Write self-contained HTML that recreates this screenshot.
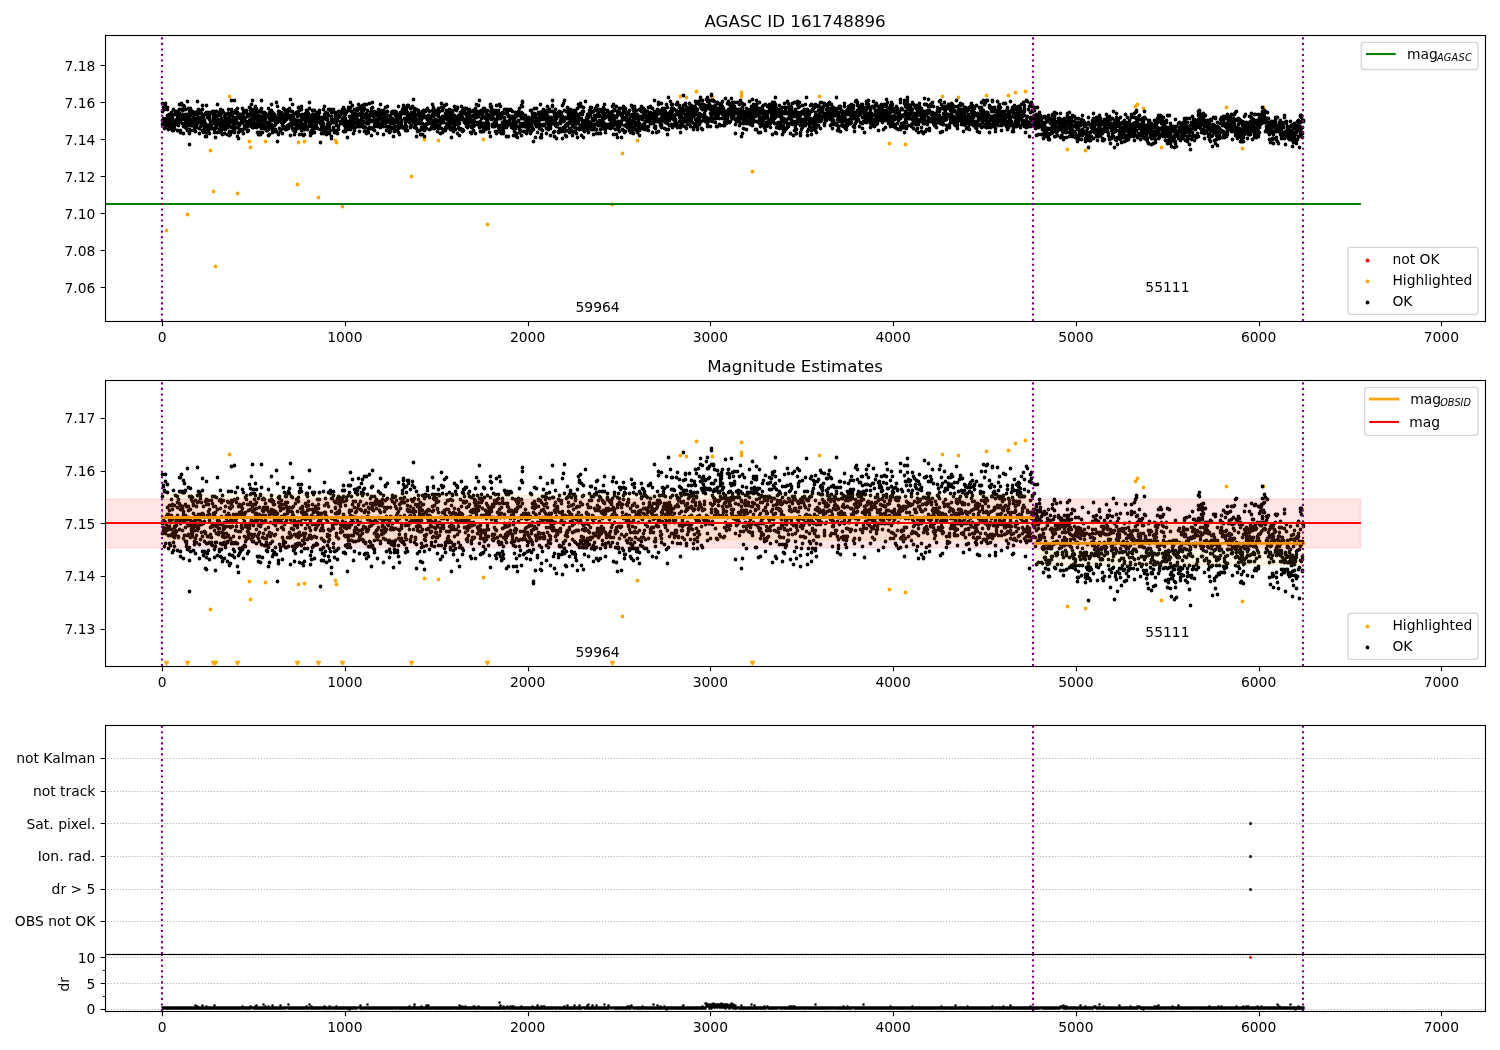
<!DOCTYPE html>
<html><head><meta charset="utf-8"><title>AGASC ID 161748896</title>
<style>html,body{margin:0;padding:0;background:#fff}svg{display:block;will-change:transform}text{font-family:'DejaVu Sans','Liberation Sans',sans-serif;font-size:13.89px;fill:#000}</style></head><body>
<svg width="1500" height="1050" viewBox="0 0 1500 1050">
<rect width="1500" height="1050" fill="#fff"/>
<defs><clipPath id="c1"><rect x="105.10" y="35.40" width="1379.90" height="285.88"/></clipPath><clipPath id="c2"><rect x="105.10" y="380.40" width="1379.90" height="285.88"/></clipPath><clipPath id="c3"><rect x="105.10" y="725.40" width="1379.90" height="229.09"/></clipPath><clipPath id="c4"><rect x="105.10" y="954.49" width="1379.90" height="56.79"/></clipPath><clipPath id="c34"><rect x="105.10" y="725.40" width="1379.90" height="285.88"/></clipPath></defs>
<g id="p1">
<path transform="translate(.5 .5)" d="M166 230h0M187 214h0M213 191h0M215 266h0M237 193h0M297 184h0M318 197h0M342 206h0M411 176h0M487 224h0M612 204h0M752 171h0M210 150h0M249 141h0M250 147h0M265 141h0M298 142h0M304 141h0M335 140h0M336 142h0M424 139h0M438 140h0M483 139h0M622 153h0M637 140h0M229 96h0M680 96h0M686 97h0M696 91h0M712 97h0M741 92h0M741 95h0M741 96h0M819 96h0M889 143h0M905 144h0M942 96h0M958 97h0M986 95h0M1008 95h0M1015 92h0M1025 91h0M1036 107h0M1067 149h0M1085 150h0M1135 106h0M1137 104h0M1143 108h0M1161 147h0M1226 107h0M1242 148h0M1263 107h0" fill="none" stroke="#ffa500" stroke-width="3.80" stroke-linecap="round"/>
<path transform="translate(.5 .5)" d="M162 124h0M162 111h0M162 120h0M162 103h0M163 122h0M163 118h0M163 107h0M163 123h0M164 120h0M164 128h0M164 109h0M165 120h0M165 103h0M165 106h0M165 124h0M165 127h0M166 122h0M166 123h0M166 118h0M166 121h0M166 120h0M167 115h0M167 109h0M167 117h0M167 122h0M167 107h0M168 122h0M168 117h0M168 125h0M168 129h0M169 114h0M169 116h0M169 119h0M169 122h0M169 127h0M170 118h0M170 128h0M170 125h0M170 120h0M171 112h0M171 124h0M171 123h0M171 114h0M171 118h0M172 114h0M172 118h0M172 116h0M172 130h0M172 119h0M173 109h0M173 125h0M173 127h0M173 130h0M173 124h0M174 128h0M174 114h0M174 122h0M174 125h0M175 120h0M175 124h0M175 121h0M175 123h0M175 111h0M176 121h0M176 119h0M176 123h0M176 120h0M177 118h0M177 113h0M177 119h0M177 130h0M177 111h0M177 115h0M178 125h0M178 119h0M178 112h0M178 120h0M179 118h0M179 122h0M179 109h0M179 113h0M179 104h0M180 120h0M180 115h0M180 114h0M180 104h0M180 130h0M180 132h0M181 119h0M181 109h0M181 115h0M181 103h0M182 123h0M182 114h0M182 109h0M182 115h0M182 110h0M182 118h0M183 126h0M183 105h0M183 117h0M183 133h0M183 116h0M184 119h0M184 109h0M184 106h0M184 125h0M185 127h0M185 114h0M185 109h0M185 117h0M185 122h0M186 128h0M186 127h0M186 114h0M186 119h0M187 101h0M187 125h0M187 120h0M187 130h0M187 118h0M188 114h0M188 124h0M188 121h0M188 108h0M188 116h0M188 118h0M189 129h0M189 119h0M189 111h0M189 144h0M189 133h0M190 130h0M190 108h0M190 125h0M190 119h0M190 115h0M191 124h0M191 121h0M191 111h0M191 122h0M191 123h0M191 112h0M192 122h0M192 125h0M192 124h0M192 111h0M192 113h0M193 117h0M193 114h0M193 130h0M193 120h0M194 120h0M194 128h0M194 123h0M194 121h0M194 127h0M195 118h0M195 126h0M195 112h0M195 119h0M195 131h0M196 127h0M196 114h0M196 125h0M196 120h0M197 119h0M197 113h0M197 111h0M197 122h0M197 101h0M197 123h0M198 113h0M198 109h0M198 121h0M198 117h0M198 122h0M199 110h0M199 133h0M199 128h0M199 119h0M200 117h0M200 120h0M200 121h0M200 111h0M200 110h0M200 126h0M201 120h0M201 113h0M201 117h0M201 121h0M201 123h0M202 109h0M202 117h0M202 105h0M202 125h0M202 130h0M203 120h0M203 115h0M203 132h0M203 117h0M203 118h0M204 130h0M204 127h0M204 120h0M204 123h0M205 124h0M205 130h0M205 136h0M205 113h0M205 123h0M206 132h0M206 105h0M206 114h0M206 136h0M206 112h0M206 127h0M207 125h0M207 131h0M207 127h0M207 117h0M208 112h0M208 116h0M208 130h0M208 114h0M208 125h0M209 127h0M209 117h0M209 125h0M209 133h0M209 115h0M209 119h0M210 124h0M210 125h0M210 122h0M211 112h0M211 121h0M211 127h0M211 125h0M211 128h0M212 111h0M212 121h0M212 128h0M212 113h0M213 118h0M213 117h0M213 114h0M213 120h0M214 117h0M214 129h0M214 132h0M214 123h0M214 111h0M215 114h0M215 127h0M215 117h0M215 121h0M215 128h0M215 137h0M216 127h0M216 124h0M216 111h0M216 121h0M217 104h0M217 132h0M217 115h0M217 119h0M217 121h0M218 119h0M218 123h0M218 120h0M218 124h0M218 122h0M219 130h0M219 122h0M219 120h0M219 112h0M219 129h0M220 115h0M220 109h0M220 112h0M220 127h0M220 132h0M221 132h0M221 124h0M221 118h0M221 130h0M221 113h0M221 121h0M222 125h0M222 134h0M222 128h0M222 110h0M222 127h0M223 112h0M223 124h0M223 122h0M223 121h0M224 120h0M224 122h0M224 125h0M224 116h0M224 133h0M224 127h0M225 129h0M225 127h0M225 114h0M225 128h0M226 121h0M226 118h0M226 124h0M226 119h0M227 120h0M227 125h0M227 127h0M227 134h0M227 113h0M228 113h0M228 117h0M228 125h0M228 109h0M228 124h0M229 118h0M229 131h0M229 115h0M229 135h0M229 121h0M230 115h0M230 126h0M230 134h0M230 119h0M230 122h0M231 114h0M231 112h0M231 100h0M231 109h0M231 127h0M232 131h0M232 114h0M232 122h0M232 112h0M232 127h0M233 119h0M233 117h0M233 128h0M233 129h0M233 125h0M234 112h0M234 130h0M234 100h0M234 120h0M234 132h0M235 119h0M235 123h0M235 127h0M235 110h0M236 113h0M236 119h0M236 121h0M236 127h0M236 117h0M236 120h0M237 108h0M237 127h0M237 112h0M237 136h0M238 132h0M238 114h0M238 117h0M238 123h0M238 138h0M239 125h0M239 117h0M239 129h0M239 114h0M239 116h0M239 131h0M240 114h0M240 118h0M240 117h0M240 130h0M240 123h0M241 118h0M241 114h0M241 116h0M241 122h0M241 121h0M242 108h0M242 129h0M242 130h0M242 118h0M242 115h0M242 122h0M243 117h0M243 119h0M243 133h0M243 113h0M243 110h0M244 128h0M244 117h0M244 125h0M244 120h0M245 117h0M245 121h0M245 127h0M245 111h0M245 128h0M246 110h0M246 125h0M246 121h0M246 126h0M246 112h0M247 123h0M247 131h0M247 126h0M247 122h0M247 114h0M248 124h0M248 123h0M248 116h0M248 125h0M248 130h0M249 122h0M249 120h0M249 107h0M249 114h0M250 115h0M250 120h0M250 110h0M250 108h0M250 113h0M250 124h0M251 126h0M251 119h0M251 104h0M251 110h0M251 124h0M252 116h0M252 127h0M252 114h0M252 125h0M252 100h0M253 116h0M253 114h0M253 125h0M253 121h0M253 109h0M253 127h0M254 116h0M254 112h0M254 110h0M254 124h0M254 119h0M255 106h0M255 114h0M255 111h0M255 117h0M255 119h0M256 115h0M256 117h0M256 108h0M256 127h0M256 123h0M256 113h0M257 117h0M257 119h0M257 132h0M257 125h0M257 118h0M258 134h0M258 125h0M258 111h0M258 121h0M258 124h0M259 126h0M259 115h0M259 117h0M259 132h0M259 118h0M259 124h0M260 134h0M260 122h0M260 121h0M260 110h0M260 111h0M261 100h0M261 108h0M261 120h0M261 119h0M261 128h0M262 117h0M262 116h0M262 125h0M262 132h0M262 112h0M262 120h0M263 120h0M263 115h0M263 124h0M263 116h0M263 112h0M264 126h0M264 115h0M264 118h0M264 128h0M264 112h0M265 122h0M265 120h0M265 119h0M265 113h0M265 115h0M265 117h0M266 116h0M266 127h0M266 128h0M266 130h0M266 126h0M267 130h0M267 125h0M267 128h0M267 115h0M268 129h0M268 135h0M268 108h0M268 125h0M268 122h0M268 116h0M269 117h0M269 112h0M269 134h0M269 123h0M269 118h0M270 125h0M270 127h0M270 124h0M270 116h0M270 120h0M271 112h0M271 110h0M271 104h0M271 115h0M271 124h0M272 130h0M272 117h0M272 127h0M272 132h0M272 112h0M273 120h0M273 131h0M273 114h0M273 113h0M273 116h0M274 114h0M274 125h0M274 119h0M274 131h0M274 117h0M275 124h0M275 116h0M275 121h0M275 129h0M275 118h0M276 119h0M276 118h0M276 102h0M276 131h0M277 141h0M277 117h0M277 119h0M277 106h0M277 122h0M277 118h0M278 111h0M278 120h0M278 113h0M278 134h0M278 133h0M279 120h0M279 112h0M279 114h0M279 128h0M279 111h0M280 119h0M280 130h0M280 115h0M280 114h0M280 116h0M280 129h0M281 120h0M281 114h0M281 118h0M281 112h0M281 122h0M282 133h0M282 122h0M282 125h0M282 119h0M282 115h0M283 127h0M283 122h0M283 126h0M283 115h0M283 128h0M283 108h0M284 117h0M284 118h0M284 121h0M284 114h0M284 109h0M285 113h0M285 127h0M285 120h0M285 111h0M285 129h0M286 129h0M286 114h0M286 110h0M286 119h0M286 111h0M286 115h0M287 117h0M287 113h0M287 115h0M287 116h0M287 125h0M288 128h0M288 116h0M288 115h0M288 109h0M289 115h0M289 108h0M289 125h0M289 124h0M289 110h0M290 119h0M290 124h0M290 125h0M290 135h0M290 99h0M291 122h0M291 111h0M291 116h0M291 125h0M291 120h0M292 104h0M292 116h0M292 118h0M292 111h0M292 128h0M292 115h0M293 130h0M293 118h0M293 122h0M293 114h0M293 117h0M294 130h0M294 134h0M294 124h0M294 121h0M294 119h0M295 131h0M295 121h0M295 113h0M295 128h0M295 129h0M296 112h0M296 125h0M296 128h0M296 120h0M296 124h0M297 128h0M297 122h0M297 121h0M297 116h0M298 113h0M298 125h0M298 107h0M298 124h0M298 111h0M298 120h0M299 134h0M299 109h0M299 124h0M299 127h0M299 110h0M300 120h0M300 125h0M300 115h0M300 108h0M300 124h0M301 130h0M301 109h0M301 106h0M301 121h0M301 128h0M301 117h0M302 119h0M302 126h0M302 114h0M302 134h0M302 115h0M303 118h0M303 135h0M303 124h0M304 125h0M304 126h0M304 127h0M304 129h0M304 134h0M304 116h0M305 119h0M305 122h0M305 113h0M305 124h0M306 110h0M306 114h0M306 117h0M306 118h0M307 129h0M307 121h0M307 116h0M307 110h0M307 126h0M307 111h0M308 118h0M308 119h0M308 126h0M308 113h0M308 114h0M309 125h0M309 108h0M309 122h0M309 115h0M309 102h0M310 125h0M310 135h0M310 132h0M310 119h0M310 124h0M310 123h0M311 133h0M311 118h0M311 126h0M311 130h0M312 125h0M312 115h0M312 110h0M312 114h0M312 121h0M312 129h0M313 117h0M313 118h0M313 128h0M313 110h0M313 116h0M314 128h0M314 118h0M314 110h0M314 125h0M314 132h0M315 116h0M315 114h0M315 122h0M315 121h0M315 115h0M316 125h0M316 127h0M316 122h0M316 121h0M317 116h0M317 128h0M317 118h0M317 112h0M317 121h0M318 114h0M318 115h0M318 120h0M318 112h0M318 121h0M319 110h0M319 117h0M319 112h0M319 119h0M320 123h0M320 129h0M320 119h0M320 142h0M321 126h0M321 117h0M321 133h0M321 118h0M321 122h0M321 129h0M322 122h0M322 118h0M322 121h0M322 131h0M323 109h0M323 129h0M323 123h0M323 133h0M323 126h0M324 127h0M324 132h0M324 118h0M324 117h0M324 106h0M324 114h0M325 117h0M325 130h0M325 112h0M326 113h0M326 118h0M326 134h0M326 119h0M327 125h0M327 120h0M327 113h0M327 118h0M327 128h0M327 124h0M328 126h0M328 122h0M328 115h0M328 109h0M328 132h0M329 129h0M329 123h0M329 124h0M329 126h0M329 133h0M330 109h0M330 123h0M330 110h0M330 130h0M331 112h0M331 119h0M331 136h0M331 138h0M331 116h0M332 121h0M332 112h0M332 122h0M333 122h0M333 109h0M333 110h0M333 127h0M333 121h0M333 129h0M334 119h0M334 130h0M334 120h0M334 112h0M334 132h0M335 115h0M335 119h0M335 117h0M335 113h0M336 117h0M336 130h0M336 125h0M336 124h0M336 121h0M337 133h0M337 116h0M337 112h0M337 120h0M338 126h0M338 117h0M338 111h0M338 129h0M338 113h0M339 112h0M339 111h0M339 113h0M339 116h0M340 121h0M340 113h0M340 122h0M340 123h0M340 114h0M341 123h0M341 112h0M342 109h0M342 112h0M342 118h0M342 120h0M342 123h0M342 121h0M343 107h0M343 117h0M343 111h0M343 131h0M343 113h0M344 109h0M344 122h0M344 121h0M344 125h0M344 131h0M345 128h0M345 120h0M345 114h0M345 125h0M345 118h0M345 131h0M346 112h0M346 124h0M346 122h0M346 125h0M346 111h0M347 121h0M347 129h0M347 137h0M347 128h0M348 125h0M348 107h0M348 126h0M348 121h0M348 110h0M349 110h0M349 116h0M349 128h0M349 122h0M350 107h0M350 102h0M350 129h0M350 120h0M350 117h0M351 119h0M351 116h0M351 121h0M351 126h0M351 111h0M351 124h0M352 118h0M352 114h0M352 119h0M352 105h0M353 113h0M353 124h0M353 127h0M353 120h0M353 133h0M354 109h0M354 130h0M354 123h0M354 118h0M354 115h0M355 127h0M355 109h0M355 117h0M355 113h0M355 122h0M356 122h0M356 109h0M356 118h0M356 116h0M357 124h0M357 109h0M357 110h0M357 119h0M357 108h0M357 115h0M358 126h0M358 104h0M358 114h0M358 121h0M359 123h0M359 108h0M359 126h0M359 125h0M359 131h0M360 115h0M360 120h0M360 126h0M360 113h0M360 125h0M360 123h0M361 116h0M361 109h0M361 110h0M361 106h0M361 118h0M362 123h0M362 126h0M362 111h0M362 105h0M362 124h0M363 127h0M363 110h0M363 121h0M363 114h0M363 126h0M363 109h0M364 131h0M364 116h0M364 104h0M364 108h0M364 117h0M365 127h0M365 122h0M365 131h0M365 116h0M366 133h0M366 123h0M366 113h0M366 104h0M366 118h0M367 123h0M367 118h0M367 119h0M367 131h0M367 110h0M368 123h0M368 128h0M368 115h0M368 117h0M368 132h0M369 119h0M369 118h0M369 103h0M369 121h0M369 127h0M369 115h0M370 127h0M370 113h0M370 120h0M370 128h0M370 112h0M371 111h0M371 108h0M371 120h0M371 121h0M371 135h0M372 102h0M372 128h0M372 107h0M372 114h0M372 115h0M372 113h0M373 116h0M373 120h0M373 129h0M374 111h0M374 124h0M374 130h0M374 126h0M375 120h0M375 123h0M375 113h0M375 114h0M375 119h0M376 123h0M376 124h0M376 125h0M376 112h0M376 115h0M377 113h0M377 133h0M377 126h0M377 124h0M377 120h0M377 122h0M378 118h0M378 122h0M378 113h0M378 125h0M378 109h0M379 116h0M379 113h0M379 119h0M379 114h0M380 113h0M380 126h0M380 104h0M380 116h0M380 127h0M380 110h0M381 113h0M381 124h0M381 123h0M381 114h0M382 113h0M382 121h0M382 122h0M382 112h0M382 119h0M383 110h0M383 126h0M383 134h0M383 124h0M383 118h0M383 120h0M384 123h0M384 115h0M384 122h0M384 116h0M385 123h0M385 107h0M385 112h0M385 126h0M386 115h0M386 112h0M386 118h0M386 119h0M386 130h0M386 122h0M387 111h0M387 115h0M387 121h0M387 106h0M388 119h0M388 126h0M388 127h0M388 121h0M389 132h0M389 126h0M389 119h0M389 130h0M389 120h0M390 115h0M390 118h0M390 123h0M390 131h0M391 112h0M391 128h0M391 122h0M391 127h0M392 113h0M392 111h0M392 127h0M392 118h0M392 120h0M393 111h0M393 123h0M393 128h0M393 122h0M393 136h0M394 113h0M394 131h0M394 129h0M394 128h0M394 127h0M395 126h0M395 122h0M395 119h0M395 111h0M395 115h0M396 112h0M396 115h0M396 119h0M396 118h0M397 130h0M397 117h0M397 119h0M398 116h0M398 125h0M398 128h0M398 132h0M398 122h0M398 106h0M399 134h0M399 124h0M399 123h0M399 118h0M399 114h0M400 126h0M400 115h0M400 113h0M400 118h0M400 112h0M401 125h0M401 121h0M401 113h0M401 127h0M401 120h0M401 122h0M402 109h0M402 127h0M402 110h0M402 112h0M402 113h0M403 105h0M403 107h0M403 112h0M403 127h0M404 108h0M404 111h0M404 118h0M404 113h0M404 128h0M405 130h0M405 124h0M405 121h0M405 125h0M406 129h0M406 126h0M406 119h0M406 110h0M406 107h0M407 114h0M407 115h0M407 105h0M407 130h0M407 116h0M407 112h0M408 106h0M408 116h0M408 105h0M408 121h0M409 116h0M409 122h0M409 120h0M409 118h0M410 114h0M410 126h0M410 118h0M410 108h0M410 127h0M410 120h0M411 112h0M411 120h0M411 116h0M411 119h0M411 125h0M412 106h0M412 113h0M412 107h0M412 112h0M412 118h0M413 116h0M413 99h0M413 115h0M413 112h0M413 122h0M413 120h0M414 108h0M414 111h0M414 116h0M414 118h0M414 127h0M415 126h0M415 116h0M415 114h0M415 119h0M415 125h0M416 121h0M416 128h0M416 109h0M416 136h0M416 119h0M417 131h0M417 123h0M417 122h0M417 114h0M418 114h0M418 112h0M418 120h0M418 110h0M418 121h0M419 123h0M419 115h0M419 130h0M419 116h0M419 119h0M419 117h0M420 113h0M420 121h0M420 134h0M420 115h0M420 119h0M421 127h0M421 119h0M421 123h0M421 129h0M422 134h0M422 116h0M422 111h0M422 117h0M422 123h0M422 114h0M423 128h0M423 110h0M423 129h0M423 117h0M423 114h0M424 111h0M424 125h0M424 126h0M424 136h0M424 130h0M425 117h0M425 125h0M425 126h0M425 111h0M425 110h0M426 128h0M426 116h0M426 123h0M426 124h0M427 108h0M427 119h0M427 109h0M427 116h0M427 117h0M428 119h0M428 120h0M428 115h0M428 110h0M428 123h0M428 122h0M429 118h0M429 111h0M429 116h0M429 117h0M429 129h0M430 119h0M430 118h0M430 120h0M430 121h0M430 123h0M431 120h0M431 127h0M431 128h0M431 121h0M431 123h0M432 114h0M432 116h0M432 125h0M432 110h0M432 104h0M433 116h0M433 125h0M433 112h0M433 108h0M433 107h0M434 112h0M434 110h0M434 120h0M434 122h0M434 128h0M434 114h0M435 127h0M435 110h0M435 119h0M435 124h0M435 122h0M436 112h0M436 124h0M436 113h0M436 125h0M437 115h0M437 125h0M437 120h0M437 131h0M437 121h0M438 113h0M438 116h0M438 110h0M438 108h0M438 128h0M439 111h0M439 120h0M439 125h0M440 118h0M440 123h0M440 133h0M440 122h0M441 118h0M441 103h0M441 128h0M441 107h0M441 119h0M442 121h0M442 110h0M442 108h0M442 132h0M442 116h0M443 121h0M443 107h0M443 122h0M443 119h0M444 129h0M444 117h0M444 116h0M444 105h0M445 118h0M445 130h0M445 113h0M445 127h0M445 128h0M446 118h0M446 110h0M446 115h0M446 123h0M446 104h0M447 125h0M447 127h0M447 126h0M447 112h0M447 119h0M448 115h0M448 127h0M448 125h0M448 112h0M448 123h0M449 126h0M449 121h0M449 109h0M449 123h0M449 116h0M450 129h0M450 112h0M450 118h0M451 137h0M451 127h0M451 114h0M451 120h0M451 118h0M451 123h0M452 112h0M452 117h0M452 111h0M452 110h0M452 122h0M453 131h0M453 128h0M453 121h0M453 117h0M453 130h0M454 128h0M454 125h0M454 122h0M454 117h0M454 115h0M454 106h0M455 109h0M455 117h0M455 129h0M455 119h0M456 123h0M456 110h0M456 107h0M456 119h0M456 117h0M457 133h0M457 107h0M457 124h0M457 120h0M457 118h0M457 108h0M458 122h0M458 120h0M458 127h0M458 117h0M458 115h0M459 123h0M459 129h0M459 118h0M459 116h0M459 135h0M460 118h0M460 128h0M460 112h0M460 119h0M460 117h0M461 117h0M461 118h0M461 114h0M461 115h0M461 106h0M462 129h0M462 117h0M462 119h0M462 131h0M462 110h0M463 112h0M463 130h0M463 110h0M463 113h0M463 120h0M463 109h0M464 122h0M464 119h0M464 108h0M464 111h0M465 119h0M465 108h0M465 113h0M465 123h0M465 122h0M466 119h0M466 108h0M466 126h0M466 115h0M466 113h0M466 122h0M467 125h0M467 121h0M467 123h0M467 118h0M467 127h0M468 114h0M468 121h0M468 119h0M468 110h0M468 125h0M469 120h0M469 118h0M469 114h0M469 111h0M469 109h0M469 122h0M470 118h0M470 116h0M470 120h0M470 132h0M471 126h0M471 127h0M471 133h0M471 111h0M471 116h0M472 116h0M472 125h0M472 121h0M472 123h0M473 130h0M473 110h0M473 120h0M473 126h0M473 115h0M474 113h0M474 125h0M474 121h0M474 116h0M474 112h0M475 112h0M475 117h0M475 133h0M475 108h0M475 114h0M476 116h0M476 114h0M476 104h0M476 115h0M476 117h0M477 111h0M477 115h0M477 122h0M477 124h0M478 113h0M478 105h0M478 122h0M478 114h0M478 116h0M479 111h0M479 127h0M479 100h0M479 114h0M479 123h0M480 121h0M480 125h0M480 131h0M480 124h0M480 122h0M481 118h0M481 113h0M481 110h0M481 112h0M481 131h0M482 124h0M482 126h0M482 115h0M482 131h0M482 112h0M483 117h0M483 123h0M483 131h0M483 128h0M483 108h0M484 111h0M484 108h0M484 125h0M484 123h0M484 127h0M485 129h0M485 124h0M485 123h0M485 118h0M485 116h0M486 126h0M486 113h0M486 117h0M486 125h0M486 119h0M487 114h0M487 122h0M487 118h0M487 116h0M487 110h0M487 121h0M488 123h0M488 125h0M488 128h0M488 118h0M488 115h0M489 115h0M489 132h0M489 117h0M489 118h0M489 116h0M490 104h0M490 106h0M490 115h0M490 136h0M490 118h0M490 111h0M491 106h0M491 115h0M491 108h0M491 116h0M491 119h0M492 126h0M492 125h0M492 118h0M492 124h0M492 114h0M493 114h0M493 110h0M493 118h0M493 126h0M494 113h0M494 126h0M494 122h0M494 124h0M494 112h0M495 122h0M495 131h0M495 110h0M495 119h0M495 113h0M496 105h0M496 133h0M496 113h0M496 119h0M496 123h0M496 120h0M497 112h0M497 131h0M497 118h0M497 125h0M497 116h0M498 112h0M498 110h0M498 127h0M499 113h0M499 131h0M499 104h0M499 118h0M499 128h0M499 116h0M500 106h0M500 125h0M500 132h0M500 117h0M500 118h0M501 115h0M501 117h0M501 127h0M501 133h0M502 132h0M502 130h0M502 113h0M502 122h0M502 112h0M503 125h0M503 133h0M503 128h0M503 113h0M503 131h0M504 118h0M504 122h0M504 109h0M504 120h0M504 117h0M505 109h0M505 124h0M505 126h0M505 121h0M506 136h0M506 110h0M506 113h0M506 125h0M506 127h0M507 121h0M507 113h0M507 124h0M507 125h0M507 109h0M507 114h0M508 115h0M508 110h0M508 116h0M508 124h0M508 136h0M509 124h0M509 121h0M509 116h0M509 120h0M510 109h0M510 123h0M510 116h0M510 118h0M511 118h0M511 127h0M511 116h0M511 110h0M512 111h0M512 126h0M512 125h0M512 124h0M513 135h0M513 120h0M513 116h0M513 117h0M513 121h0M513 128h0M514 119h0M514 123h0M514 127h0M514 131h0M515 124h0M515 112h0M515 128h0M515 115h0M515 122h0M516 136h0M516 126h0M516 122h0M516 133h0M516 116h0M516 113h0M517 115h0M517 113h0M517 137h0M518 112h0M518 120h0M518 113h0M518 111h0M518 126h0M519 129h0M519 132h0M519 115h0M519 112h0M519 108h0M520 130h0M520 123h0M520 115h0M520 126h0M521 112h0M521 118h0M521 135h0M521 105h0M522 113h0M522 102h0M522 126h0M522 101h0M522 118h0M522 106h0M523 117h0M523 118h0M523 131h0M523 125h0M523 123h0M524 125h0M524 126h0M524 123h0M524 131h0M525 126h0M525 117h0M525 115h0M525 122h0M525 119h0M526 118h0M526 122h0M526 119h0M526 133h0M526 117h0M527 124h0M527 123h0M527 127h0M527 130h0M527 128h0M528 127h0M528 117h0M528 125h0M528 119h0M528 121h0M529 125h0M529 121h0M529 118h0M529 119h0M529 130h0M530 121h0M530 118h0M530 126h0M530 133h0M530 110h0M531 131h0M531 121h0M531 126h0M531 123h0M531 110h0M531 124h0M532 120h0M532 127h0M532 115h0M532 113h0M532 128h0M533 122h0M533 141h0M533 117h0M533 129h0M534 113h0M534 114h0M534 115h0M534 108h0M534 121h0M535 114h0M535 117h0M535 115h0M535 137h0M535 124h0M536 126h0M536 122h0M536 108h0M536 118h0M537 132h0M537 125h0M537 120h0M538 112h0M538 121h0M538 114h0M538 123h0M539 117h0M539 126h0M539 120h0M539 128h0M540 137h0M540 104h0M540 112h0M540 124h0M540 119h0M540 125h0M541 134h0M541 113h0M541 129h0M541 116h0M541 137h0M542 130h0M542 119h0M542 125h0M542 111h0M542 118h0M543 124h0M543 125h0M543 114h0M543 116h0M543 109h0M544 114h0M544 111h0M544 116h0M544 125h0M545 118h0M545 112h0M545 117h0M545 119h0M546 111h0M546 113h0M546 133h0M546 110h0M546 122h0M546 128h0M547 120h0M547 115h0M547 123h0M547 119h0M547 106h0M548 129h0M548 126h0M548 117h0M548 127h0M549 109h0M549 122h0M549 125h0M549 117h0M549 120h0M549 111h0M550 128h0M550 126h0M550 135h0M550 119h0M550 125h0M551 121h0M551 122h0M551 118h0M551 117h0M551 119h0M552 111h0M552 120h0M552 123h0M552 100h0M552 105h0M552 106h0M553 123h0M553 120h0M553 132h0M553 122h0M553 111h0M554 114h0M554 120h0M554 136h0M554 116h0M554 131h0M555 117h0M555 125h0M555 120h0M555 123h0M555 113h0M555 109h0M556 138h0M556 118h0M556 115h0M556 126h0M556 124h0M557 124h0M557 115h0M557 116h0M558 112h0M558 131h0M558 123h0M558 132h0M559 116h0M559 128h0M559 112h0M559 111h0M560 122h0M560 123h0M560 120h0M561 113h0M561 118h0M561 131h0M561 119h0M561 112h0M561 128h0M562 117h0M562 130h0M562 105h0M562 138h0M562 116h0M563 127h0M563 103h0M563 118h0M563 121h0M564 131h0M564 110h0M564 120h0M564 100h0M564 129h0M565 117h0M565 125h0M565 118h0M565 126h0M565 135h0M566 125h0M566 130h0M566 111h0M566 124h0M566 136h0M567 125h0M567 123h0M567 118h0M567 107h0M567 111h0M568 111h0M568 114h0M568 113h0M568 116h0M568 118h0M569 122h0M569 123h0M569 132h0M569 116h0M569 128h0M569 110h0M570 120h0M570 118h0M570 109h0M571 130h0M571 117h0M571 111h0M571 120h0M571 114h0M572 120h0M572 121h0M572 126h0M572 135h0M572 123h0M572 131h0M573 114h0M573 118h0M573 110h0M573 119h0M573 115h0M574 123h0M574 131h0M574 120h0M574 127h0M574 110h0M575 112h0M575 127h0M575 131h0M575 111h0M575 132h0M576 123h0M576 119h0M576 115h0M576 133h0M576 118h0M577 137h0M577 123h0M577 108h0M577 128h0M577 114h0M578 128h0M578 123h0M578 118h0M578 120h0M578 117h0M578 104h0M579 129h0M579 106h0M579 114h0M579 105h0M579 118h0M580 127h0M580 103h0M580 126h0M580 119h0M580 113h0M581 126h0M581 125h0M581 127h0M581 118h0M581 106h0M581 135h0M582 129h0M582 120h0M582 123h0M582 111h0M582 114h0M583 107h0M583 125h0M583 111h0M583 121h0M583 137h0M584 129h0M584 126h0M584 131h0M584 128h0M584 123h0M585 122h0M585 123h0M585 120h0M585 101h0M586 117h0M586 129h0M586 118h0M586 127h0M587 123h0M587 119h0M587 128h0M587 114h0M587 126h0M587 127h0M588 123h0M588 115h0M588 117h0M588 132h0M588 121h0M589 112h0M589 110h0M589 125h0M589 128h0M589 123h0M590 125h0M590 115h0M590 122h0M590 107h0M590 126h0M591 111h0M591 129h0M591 107h0M591 112h0M592 118h0M592 129h0M592 119h0M592 125h0M593 120h0M593 128h0M593 124h0M593 134h0M593 111h0M593 118h0M594 124h0M594 110h0M594 129h0M594 127h0M594 115h0M595 116h0M595 124h0M595 119h0M595 108h0M596 106h0M596 115h0M596 110h0M596 109h0M596 129h0M596 133h0M597 122h0M597 105h0M597 114h0M597 124h0M597 123h0M598 125h0M598 116h0M598 112h0M598 133h0M599 115h0M599 120h0M599 111h0M599 109h0M599 125h0M599 123h0M600 122h0M600 123h0M600 111h0M600 129h0M600 133h0M601 122h0M601 116h0M601 124h0M601 121h0M602 112h0M602 126h0M602 109h0M602 117h0M602 119h0M602 128h0M603 122h0M603 107h0M603 113h0M603 123h0M603 116h0M604 113h0M604 118h0M604 104h0M604 109h0M605 128h0M605 124h0M605 132h0M605 117h0M605 127h0M605 129h0M606 115h0M606 124h0M606 116h0M606 125h0M607 110h0M607 111h0M607 116h0M607 112h0M608 124h0M608 125h0M608 115h0M608 127h0M608 116h0M609 112h0M609 125h0M609 119h0M609 113h0M609 124h0M610 128h0M610 125h0M610 113h0M610 123h0M611 114h0M611 122h0M611 118h0M611 115h0M611 113h0M611 112h0M612 121h0M612 111h0M612 117h0M612 127h0M612 106h0M613 116h0M613 125h0M613 134h0M613 115h0M613 104h0M614 109h0M614 117h0M614 120h0M614 116h0M614 110h0M615 123h0M615 124h0M615 129h0M616 106h0M616 122h0M616 117h0M616 123h0M616 134h0M617 115h0M617 114h0M617 111h0M617 137h0M617 127h0M617 123h0M618 121h0M618 114h0M618 129h0M618 110h0M619 131h0M619 108h0M619 113h0M619 126h0M619 112h0M620 113h0M620 121h0M620 108h0M620 122h0M621 137h0M621 114h0M621 115h0M621 124h0M621 121h0M622 117h0M622 129h0M622 118h0M622 114h0M623 108h0M623 112h0M623 106h0M623 119h0M623 111h0M623 130h0M624 132h0M624 125h0M624 109h0M624 118h0M624 131h0M625 131h0M625 119h0M625 117h0M625 108h0M625 110h0M626 120h0M626 124h0M626 114h0M626 126h0M626 117h0M627 114h0M627 127h0M627 120h0M627 113h0M628 119h0M628 121h0M628 113h0M628 112h0M629 129h0M629 118h0M629 110h0M629 130h0M629 123h0M629 126h0M630 123h0M630 120h0M630 115h0M630 127h0M630 132h0M631 128h0M631 126h0M631 105h0M631 132h0M631 129h0M632 128h0M632 116h0M632 121h0M632 114h0M632 107h0M633 110h0M633 123h0M633 129h0M633 133h0M633 119h0M634 127h0M634 106h0M634 113h0M634 116h0M634 108h0M634 123h0M635 125h0M635 122h0M635 124h0M635 129h0M635 118h0M636 130h0M636 115h0M636 110h0M636 117h0M637 117h0M637 129h0M637 132h0M637 114h0M637 123h0M638 126h0M638 120h0M638 118h0M638 116h0M639 130h0M639 117h0M639 109h0M639 135h0M639 123h0M640 128h0M640 110h0M640 118h0M640 116h0M641 111h0M641 127h0M641 106h0M641 125h0M642 108h0M642 111h0M642 119h0M642 128h0M643 115h0M643 125h0M643 113h0M643 108h0M643 124h0M643 117h0M644 109h0M644 110h0M644 129h0M644 123h0M645 111h0M645 126h0M645 121h0M645 117h0M645 115h0M646 111h0M646 129h0M646 118h0M646 115h0M646 117h0M647 121h0M647 118h0M647 117h0M647 116h0M647 111h0M648 115h0M648 126h0M648 107h0M648 116h0M648 130h0M649 113h0M649 114h0M649 120h0M650 106h0M650 123h0M650 122h0M650 107h0M650 112h0M651 114h0M651 117h0M651 122h0M651 123h0M651 116h0M652 117h0M652 115h0M652 118h0M652 132h0M652 108h0M653 118h0M653 119h0M653 123h0M653 122h0M653 113h0M654 119h0M654 116h0M654 111h0M654 127h0M654 100h0M655 113h0M655 126h0M655 127h0M655 128h0M656 132h0M656 121h0M656 118h0M656 115h0M657 121h0M657 109h0M657 113h0M657 114h0M657 112h0M658 119h0M658 104h0M658 131h0M658 121h0M658 102h0M658 120h0M659 110h0M659 112h0M659 119h0M659 113h0M659 111h0M660 113h0M660 111h0M660 125h0M660 123h0M661 124h0M661 118h0M661 127h0M661 117h0M661 126h0M661 103h0M662 108h0M662 116h0M662 117h0M662 120h0M663 111h0M663 110h0M663 109h0M663 114h0M663 115h0M664 114h0M664 108h0M664 121h0M664 113h0M664 128h0M664 115h0M665 122h0M665 117h0M665 111h0M665 119h0M665 121h0M666 129h0M666 120h0M666 104h0M666 116h0M666 113h0M667 134h0M667 107h0M667 114h0M667 117h0M667 123h0M667 116h0M668 118h0M668 129h0M668 97h0M668 115h0M668 113h0M669 125h0M669 119h0M669 115h0M669 120h0M669 113h0M670 101h0M670 111h0M670 114h0M670 115h0M670 117h0M670 116h0M671 108h0M671 115h0M671 116h0M671 104h0M671 124h0M672 115h0M672 111h0M672 118h0M672 104h0M672 127h0M673 108h0M673 115h0M673 119h0M673 124h0M674 109h0M674 120h0M674 117h0M674 125h0M675 120h0M675 125h0M675 114h0M675 123h0M675 119h0M676 104h0M676 123h0M676 114h0M676 110h0M676 124h0M677 113h0M677 111h0M677 112h0M677 102h0M677 127h0M678 125h0M678 114h0M678 112h0M679 107h0M679 121h0M679 117h0M679 105h0M679 112h0M680 110h0M680 132h0M680 108h0M680 127h0M680 120h0M681 108h0M681 113h0M681 123h0M681 111h0M681 116h0M682 120h0M682 123h0M682 125h0M682 119h0M682 121h0M682 118h0M683 95h0M683 109h0M683 113h0M683 105h0M684 121h0M684 109h0M684 110h0M684 118h0M684 126h0M685 116h0M685 121h0M685 105h0M685 103h0M685 114h0M686 109h0M686 115h0M686 116h0M686 128h0M687 116h0M687 110h0M687 124h0M687 113h0M687 120h0M688 122h0M688 121h0M688 115h0M688 123h0M688 107h0M688 112h0M689 111h0M689 115h0M689 122h0M689 103h0M689 118h0M690 126h0M690 111h0M690 122h0M690 109h0M691 105h0M691 114h0M691 121h0M691 110h0M691 118h0M691 107h0M692 113h0M692 122h0M692 115h0M692 110h0M693 129h0M693 110h0M693 127h0M693 112h0M693 116h0M694 115h0M694 110h0M694 126h0M694 107h0M694 124h0M694 106h0M695 107h0M695 119h0M695 101h0M695 114h0M695 113h0M696 111h0M696 122h0M696 119h0M696 103h0M697 109h0M697 118h0M697 123h0M697 127h0M697 125h0M697 129h0M698 115h0M698 123h0M698 101h0M698 116h0M698 119h0M699 113h0M699 120h0M699 124h0M699 104h0M699 117h0M699 114h0M700 100h0M700 106h0M700 97h0M700 114h0M701 106h0M701 121h0M701 108h0M701 115h0M701 128h0M702 105h0M702 116h0M702 109h0M702 104h0M702 129h0M702 100h0M703 107h0M703 104h0M703 119h0M703 109h0M704 120h0M704 114h0M704 108h0M704 116h0M704 113h0M705 110h0M705 105h0M705 108h0M705 121h0M706 117h0M706 108h0M706 118h0M706 99h0M706 119h0M707 126h0M707 124h0M707 101h0M707 97h0M707 118h0M708 121h0M708 108h0M708 105h0M708 101h0M708 120h0M709 118h0M709 100h0M709 108h0M709 120h0M709 104h0M710 109h0M710 126h0M710 113h0M710 120h0M711 115h0M711 95h0M711 94h0M711 117h0M711 106h0M711 100h0M712 110h0M712 121h0M712 114h0M712 120h0M712 111h0M713 106h0M713 111h0M713 100h0M713 109h0M714 112h0M714 111h0M714 101h0M714 113h0M714 108h0M714 118h0M715 116h0M715 122h0M715 105h0M715 115h0M715 108h0M716 126h0M716 118h0M716 117h0M716 112h0M716 109h0M717 116h0M717 126h0M717 108h0M717 102h0M718 112h0M718 103h0M718 110h0M718 114h0M719 124h0M719 110h0M719 112h0M719 109h0M719 118h0M720 106h0M720 104h0M720 125h0M720 107h0M720 111h0M720 105h0M721 103h0M721 105h0M721 112h0M722 101h0M722 106h0M722 108h0M722 118h0M722 114h0M723 117h0M723 125h0M723 108h0M723 110h0M723 116h0M723 115h0M724 111h0M724 125h0M724 113h0M724 112h0M724 122h0M725 113h0M725 120h0M725 111h0M725 122h0M725 98h0M726 116h0M726 114h0M726 123h0M726 112h0M726 111h0M726 118h0M727 103h0M727 121h0M727 115h0M727 118h0M727 112h0M728 112h0M728 109h0M728 121h0M728 101h0M728 103h0M729 112h0M729 109h0M729 122h0M729 104h0M729 103h0M729 113h0M730 121h0M730 109h0M730 112h0M730 114h0M730 106h0M731 116h0M731 111h0M731 107h0M731 98h0M731 117h0M732 110h0M732 111h0M732 102h0M732 118h0M732 116h0M733 106h0M733 104h0M733 115h0M733 112h0M733 118h0M734 106h0M734 111h0M734 102h0M734 107h0M735 119h0M735 118h0M735 133h0M735 124h0M735 113h0M736 121h0M736 119h0M736 118h0M736 109h0M737 111h0M737 120h0M737 118h0M737 121h0M737 102h0M738 118h0M738 119h0M738 114h0M738 110h0M738 109h0M738 116h0M739 125h0M739 111h0M739 104h0M739 120h0M739 117h0M740 117h0M740 118h0M740 109h0M740 100h0M740 123h0M741 116h0M741 136h0M741 114h0M741 112h0M741 118h0M741 113h0M742 133h0M742 103h0M742 110h0M742 116h0M742 107h0M743 118h0M743 121h0M743 123h0M743 128h0M743 116h0M744 117h0M744 104h0M744 118h0M744 113h0M745 114h0M745 112h0M745 120h0M745 116h0M745 111h0M746 116h0M746 129h0M746 121h0M746 123h0M746 108h0M747 113h0M747 109h0M747 111h0M747 117h0M748 121h0M748 113h0M748 114h0M748 110h0M748 123h0M749 121h0M749 101h0M749 111h0M749 120h0M750 124h0M750 109h0M750 119h0M750 116h0M750 122h0M751 110h0M751 121h0M751 108h0M751 114h0M751 106h0M752 125h0M752 113h0M752 99h0M752 114h0M752 123h0M753 104h0M753 117h0M753 110h0M753 105h0M753 120h0M754 113h0M754 108h0M754 109h0M755 116h0M755 105h0M755 129h0M755 121h0M756 112h0M756 129h0M756 104h0M756 100h0M756 109h0M756 105h0M757 108h0M757 121h0M757 114h0M758 122h0M758 110h0M758 132h0M758 114h0M758 115h0M759 120h0M759 112h0M759 123h0M759 108h0M759 102h0M759 118h0M760 126h0M760 132h0M760 117h0M760 113h0M760 122h0M761 110h0M761 125h0M761 120h0M761 123h0M761 119h0M762 111h0M762 119h0M762 113h0M762 106h0M762 109h0M763 120h0M763 116h0M763 124h0M763 105h0M764 112h0M764 125h0M764 127h0M764 126h0M764 111h0M764 118h0M765 130h0M765 112h0M765 115h0M765 104h0M765 111h0M766 116h0M766 117h0M766 123h0M766 122h0M766 126h0M767 106h0M767 117h0M767 114h0M767 125h0M767 112h0M767 123h0M768 111h0M768 119h0M768 106h0M768 125h0M769 111h0M769 119h0M769 104h0M769 108h0M769 122h0M770 127h0M770 106h0M770 121h0M770 123h0M770 111h0M771 108h0M771 113h0M771 105h0M771 116h0M771 118h0M772 111h0M772 102h0M772 134h0M772 116h0M772 103h0M773 121h0M773 107h0M773 117h0M773 119h0M773 114h0M774 123h0M774 108h0M774 102h0M774 111h0M774 118h0M775 97h0M775 132h0M775 106h0M775 104h0M775 117h0M776 115h0M776 114h0M776 133h0M776 108h0M776 123h0M776 127h0M777 113h0M777 110h0M777 112h0M778 110h0M778 124h0M778 115h0M778 122h0M779 128h0M779 109h0M779 105h0M779 113h0M779 116h0M779 125h0M780 125h0M780 115h0M780 110h0M780 112h0M780 122h0M781 119h0M781 121h0M781 114h0M781 116h0M781 117h0M782 113h0M782 128h0M782 121h0M782 134h0M782 107h0M782 111h0M783 120h0M783 125h0M783 131h0M783 118h0M784 113h0M784 122h0M784 131h0M784 103h0M785 119h0M785 107h0M785 129h0M785 110h0M785 128h0M786 128h0M786 120h0M786 113h0M786 121h0M787 123h0M787 127h0M787 107h0M787 126h0M787 101h0M788 126h0M788 124h0M788 118h0M788 103h0M788 112h0M789 112h0M789 114h0M789 113h0M789 116h0M789 109h0M790 106h0M790 115h0M790 133h0M790 123h0M790 109h0M791 120h0M791 107h0M791 108h0M791 119h0M791 116h0M792 113h0M792 124h0M792 103h0M792 111h0M793 121h0M793 112h0M793 135h0M794 116h0M794 115h0M794 102h0M794 111h0M794 112h0M794 130h0M795 127h0M795 112h0M795 124h0M795 109h0M795 115h0M796 121h0M796 133h0M796 122h0M796 129h0M797 104h0M797 123h0M797 101h0M797 119h0M797 116h0M797 112h0M798 119h0M798 116h0M798 106h0M798 107h0M798 113h0M799 102h0M799 118h0M799 106h0M799 115h0M799 113h0M800 125h0M800 112h0M800 115h0M800 121h0M800 135h0M800 132h0M801 121h0M801 129h0M801 119h0M801 113h0M802 105h0M802 122h0M802 127h0M802 111h0M802 112h0M803 125h0M803 121h0M803 113h0M803 119h0M804 114h0M804 109h0M804 111h0M804 125h0M805 104h0M805 115h0M805 118h0M805 125h0M805 120h0M806 118h0M806 112h0M806 97h0M806 123h0M806 117h0M807 118h0M807 135h0M807 109h0M807 112h0M807 131h0M808 119h0M808 112h0M808 129h0M808 115h0M809 114h0M809 121h0M809 118h0M809 127h0M809 111h0M809 124h0M810 119h0M810 127h0M810 111h0M810 105h0M810 118h0M811 134h0M811 111h0M811 119h0M811 130h0M811 104h0M812 122h0M812 123h0M812 110h0M812 109h0M812 129h0M813 105h0M813 126h0M813 108h0M813 120h0M814 124h0M814 117h0M814 118h0M814 106h0M814 107h0M815 104h0M815 123h0M815 115h0M815 112h0M815 129h0M815 130h0M816 132h0M816 127h0M816 125h0M816 119h0M816 121h0M817 115h0M817 121h0M817 116h0M817 118h0M817 106h0M818 110h0M818 105h0M818 125h0M818 120h0M818 116h0M818 119h0M819 120h0M819 117h0M819 119h0M819 113h0M819 115h0M820 102h0M820 121h0M820 107h0M820 110h0M820 128h0M821 108h0M821 107h0M821 102h0M821 110h0M821 120h0M821 116h0M822 116h0M822 110h0M822 109h0M822 112h0M822 108h0M823 116h0M823 106h0M823 117h0M823 113h0M824 113h0M824 124h0M824 125h0M824 103h0M824 123h0M825 117h0M825 114h0M825 120h0M825 116h0M826 113h0M826 109h0M826 114h0M826 105h0M826 120h0M827 110h0M827 105h0M827 115h0M827 114h0M827 116h0M828 108h0M828 112h0M828 111h0M828 114h0M828 103h0M829 118h0M829 112h0M829 116h0M829 111h0M829 102h0M830 113h0M830 104h0M830 119h0M830 125h0M830 118h0M831 124h0M831 108h0M831 104h0M831 110h0M831 116h0M832 128h0M832 121h0M832 117h0M832 112h0M832 119h0M833 107h0M833 120h0M833 121h0M833 115h0M834 124h0M834 111h0M834 108h0M834 114h0M834 113h0M835 111h0M835 115h0M835 112h0M835 123h0M835 124h0M835 114h0M836 110h0M836 109h0M836 123h0M836 115h0M836 97h0M837 130h0M837 119h0M837 108h0M837 114h0M837 125h0M838 115h0M838 112h0M838 117h0M838 126h0M838 129h0M838 128h0M839 118h0M839 121h0M839 106h0M839 117h0M840 118h0M840 106h0M840 108h0M840 117h0M840 131h0M841 125h0M841 110h0M841 117h0M841 120h0M841 116h0M841 112h0M842 114h0M842 123h0M842 118h0M842 112h0M842 117h0M843 111h0M843 114h0M843 118h0M843 126h0M843 125h0M844 115h0M844 119h0M844 103h0M844 120h0M844 106h0M844 117h0M845 112h0M845 111h0M845 125h0M845 128h0M845 118h0M846 126h0M846 129h0M846 122h0M847 112h0M847 122h0M847 125h0M847 109h0M847 114h0M848 110h0M848 106h0M848 120h0M848 112h0M849 120h0M849 109h0M849 119h0M849 123h0M849 111h0M850 111h0M850 105h0M850 108h0M850 123h0M850 112h0M850 115h0M851 104h0M851 117h0M851 122h0M851 110h0M851 115h0M852 118h0M852 109h0M852 112h0M852 111h0M852 110h0M853 105h0M853 118h0M853 117h0M853 126h0M853 108h0M853 116h0M854 118h0M854 127h0M854 125h0M854 114h0M854 131h0M855 118h0M855 101h0M855 123h0M855 115h0M855 112h0M856 113h0M856 117h0M856 114h0M856 100h0M856 120h0M856 121h0M857 115h0M857 110h0M857 116h0M857 105h0M857 102h0M858 113h0M858 111h0M858 109h0M858 119h0M858 115h0M859 110h0M859 113h0M859 106h0M859 126h0M859 114h0M860 106h0M860 114h0M860 122h0M860 113h0M861 110h0M861 109h0M861 104h0M861 112h0M862 104h0M862 123h0M862 128h0M862 117h0M862 107h0M863 122h0M863 112h0M863 109h0M863 121h0M864 114h0M864 116h0M864 110h0M864 117h0M864 132h0M865 120h0M865 116h0M865 107h0M865 110h0M865 117h0M865 118h0M866 114h0M866 109h0M866 103h0M866 122h0M866 101h0M867 107h0M867 113h0M867 120h0M867 116h0M867 114h0M868 113h0M868 100h0M868 116h0M868 104h0M868 119h0M869 117h0M869 116h0M869 118h0M869 121h0M869 113h0M870 109h0M870 123h0M870 127h0M870 107h0M870 111h0M871 122h0M871 119h0M871 114h0M871 118h0M871 115h0M871 113h0M872 125h0M872 106h0M872 122h0M872 115h0M872 119h0M873 122h0M873 119h0M873 101h0M873 106h0M873 120h0M874 119h0M874 108h0M874 121h0M874 114h0M874 126h0M875 115h0M875 120h0M875 113h0M875 111h0M875 105h0M876 118h0M876 113h0M876 124h0M876 103h0M876 123h0M877 110h0M877 111h0M877 123h0M877 116h0M877 121h0M878 120h0M878 130h0M878 116h0M878 112h0M878 106h0M879 108h0M879 106h0M879 112h0M879 116h0M879 107h0M880 117h0M880 118h0M880 119h0M880 114h0M880 107h0M880 116h0M881 104h0M881 109h0M881 117h0M881 120h0M881 108h0M882 112h0M882 122h0M882 109h0M882 114h0M883 106h0M883 119h0M883 114h0M883 120h0M883 129h0M883 110h0M884 115h0M884 104h0M884 117h0M884 120h0M884 113h0M885 114h0M885 118h0M885 127h0M885 120h0M885 117h0M886 106h0M886 110h0M886 116h0M886 104h0M886 99h0M886 111h0M887 116h0M887 102h0M887 114h0M887 119h0M887 108h0M888 108h0M888 120h0M888 123h0M888 118h0M888 116h0M889 118h0M889 112h0M889 113h0M889 119h0M890 112h0M890 126h0M890 111h0M890 105h0M891 102h0M891 107h0M891 121h0M891 116h0M891 123h0M892 109h0M892 118h0M892 116h0M892 104h0M892 111h0M892 110h0M893 108h0M893 120h0M893 126h0M893 109h0M893 124h0M894 116h0M894 115h0M894 117h0M894 119h0M895 127h0M895 112h0M895 111h0M895 124h0M895 108h0M896 106h0M896 128h0M896 117h0M896 112h0M896 111h0M897 108h0M897 109h0M897 123h0M897 111h0M897 118h0M897 117h0M898 129h0M898 116h0M898 120h0M898 112h0M898 114h0M899 116h0M899 111h0M899 117h0M899 114h0M900 102h0M900 116h0M900 99h0M900 118h0M900 129h0M900 126h0M901 123h0M901 125h0M901 115h0M901 108h0M902 115h0M902 116h0M902 123h0M902 109h0M903 123h0M903 115h0M903 127h0M903 124h0M903 126h0M904 103h0M904 100h0M904 132h0M904 114h0M904 122h0M905 106h0M905 115h0M905 111h0M905 119h0M905 126h0M906 113h0M906 128h0M906 122h0M906 107h0M906 117h0M907 113h0M907 103h0M907 114h0M907 97h0M907 100h0M908 109h0M908 118h0M908 125h0M908 105h0M908 106h0M909 113h0M909 116h0M909 106h0M909 105h0M910 118h0M910 114h0M910 105h0M910 107h0M911 126h0M911 124h0M911 110h0M911 111h0M912 109h0M912 123h0M912 118h0M912 114h0M912 119h0M912 102h0M913 121h0M913 128h0M913 123h0M913 104h0M913 120h0M914 121h0M914 123h0M914 113h0M914 116h0M914 105h0M915 116h0M915 124h0M915 107h0M915 120h0M916 130h0M916 124h0M916 116h0M916 105h0M916 108h0M917 128h0M917 112h0M917 113h0M917 110h0M917 119h0M918 105h0M918 114h0M918 124h0M918 122h0M918 121h0M918 132h0M919 113h0M919 106h0M919 114h0M919 108h0M919 103h0M920 119h0M920 115h0M920 112h0M921 116h0M921 109h0M921 121h0M921 131h0M921 108h0M921 127h0M922 119h0M922 120h0M922 114h0M922 116h0M923 132h0M923 111h0M923 119h0M923 123h0M923 133h0M924 111h0M924 118h0M924 122h0M924 123h0M924 98h0M924 104h0M925 104h0M925 113h0M925 131h0M925 123h0M925 115h0M926 121h0M926 129h0M926 111h0M926 104h0M926 114h0M927 112h0M927 113h0M927 110h0M927 124h0M927 122h0M928 111h0M928 99h0M928 119h0M928 117h0M928 106h0M929 128h0M929 110h0M929 112h0M929 130h0M930 121h0M930 120h0M930 104h0M930 106h0M931 105h0M931 113h0M931 114h0M931 119h0M931 118h0M932 116h0M932 118h0M932 121h0M932 102h0M932 112h0M933 123h0M933 115h0M933 122h0M933 117h0M933 106h0M934 125h0M934 123h0M934 118h0M934 120h0M934 124h0M935 113h0M935 123h0M935 116h0M935 124h0M936 115h0M936 119h0M936 116h0M936 127h0M936 114h0M937 118h0M937 110h0M937 107h0M937 116h0M938 117h0M938 122h0M938 108h0M938 111h0M939 109h0M939 118h0M939 111h0M939 101h0M939 115h0M939 116h0M940 120h0M940 118h0M940 123h0M940 100h0M940 132h0M941 120h0M941 104h0M941 108h0M941 119h0M941 122h0M942 124h0M942 117h0M942 122h0M942 131h0M942 123h0M942 106h0M943 124h0M943 118h0M943 113h0M943 119h0M944 102h0M944 120h0M944 114h0M944 109h0M945 109h0M945 112h0M945 106h0M945 108h0M945 114h0M945 117h0M946 125h0M946 119h0M946 129h0M946 118h0M947 127h0M947 114h0M947 108h0M948 114h0M948 107h0M948 104h0M948 106h0M949 124h0M949 125h0M949 127h0M949 116h0M950 115h0M950 104h0M950 110h0M950 119h0M950 122h0M951 107h0M951 113h0M951 103h0M951 118h0M951 121h0M952 118h0M952 116h0M952 104h0M952 120h0M953 116h0M953 111h0M953 122h0M953 108h0M954 117h0M954 121h0M954 124h0M954 110h0M954 106h0M955 117h0M955 123h0M955 119h0M955 125h0M955 122h0M956 113h0M956 112h0M956 117h0M956 100h0M957 128h0M957 113h0M957 122h0M957 106h0M957 125h0M957 120h0M958 109h0M958 118h0M958 117h0M958 120h0M958 116h0M959 115h0M959 113h0M959 119h0M959 105h0M959 112h0M960 111h0M960 105h0M960 103h0M960 117h0M960 115h0M961 116h0M961 121h0M961 124h0M961 113h0M961 109h0M962 104h0M962 117h0M962 113h0M962 110h0M962 120h0M962 114h0M963 124h0M963 123h0M963 120h0M963 131h0M964 114h0M964 113h0M964 119h0M964 109h0M964 107h0M965 107h0M965 123h0M965 125h0M965 110h0M965 116h0M966 128h0M966 110h0M966 111h0M966 117h0M966 120h0M967 110h0M967 120h0M967 108h0M967 118h0M967 116h0M968 117h0M968 114h0M968 122h0M968 123h0M968 120h0M968 127h0M969 109h0M969 116h0M969 107h0M969 124h0M969 129h0M970 106h0M970 108h0M970 121h0M970 119h0M971 103h0M971 116h0M971 112h0M971 110h0M971 121h0M972 111h0M972 120h0M972 124h0M972 105h0M972 113h0M973 125h0M973 107h0M973 117h0M973 115h0M974 124h0M974 108h0M974 107h0M974 122h0M974 112h0M975 114h0M975 127h0M975 121h0M975 115h0M975 123h0M976 128h0M976 105h0M976 127h0M976 126h0M976 122h0M977 131h0M977 121h0M977 113h0M977 115h0M977 125h0M977 123h0M978 117h0M978 120h0M978 114h0M978 119h0M979 114h0M979 107h0M979 132h0M979 116h0M979 125h0M980 119h0M980 110h0M980 124h0M980 118h0M980 109h0M981 107h0M981 127h0M981 112h0M981 119h0M981 102h0M982 122h0M982 119h0M982 115h0M982 114h0M983 117h0M983 111h0M983 100h0M983 110h0M983 120h0M983 126h0M984 126h0M984 104h0M984 119h0M984 113h0M984 112h0M985 120h0M985 124h0M985 113h0M985 102h0M985 116h0M986 119h0M986 126h0M986 116h0M986 127h0M986 112h0M986 100h0M987 121h0M987 127h0M987 125h0M987 100h0M987 112h0M988 122h0M988 125h0M988 117h0M988 114h0M989 107h0M989 105h0M989 117h0M989 121h0M989 132h0M990 124h0M990 120h0M990 127h0M990 108h0M991 111h0M991 125h0M991 116h0M991 118h0M991 107h0M992 100h0M992 101h0M992 124h0M992 111h0M992 126h0M993 121h0M993 110h0M993 116h0M993 109h0M993 120h0M994 109h0M994 115h0M994 107h0M994 116h0M994 125h0M995 111h0M995 121h0M995 119h0M995 131h0M995 128h0M996 124h0M996 123h0M996 110h0M996 122h0M996 121h0M997 115h0M997 114h0M997 101h0M997 121h0M997 117h0M998 118h0M998 109h0M998 106h0M998 111h0M998 125h0M998 121h0M999 104h0M999 117h0M999 115h0M999 119h0M999 112h0M1000 111h0M1000 107h0M1000 117h0M1000 114h0M1000 120h0M1001 130h0M1001 117h0M1001 125h0M1001 121h0M1001 120h0M1001 123h0M1002 116h0M1002 112h0M1002 113h0M1003 116h0M1003 103h0M1003 115h0M1003 120h0M1003 111h0M1004 119h0M1004 115h0M1004 112h0M1004 121h0M1004 122h0M1004 124h0M1005 103h0M1005 118h0M1005 122h0M1005 114h0M1005 120h0M1006 126h0M1006 122h0M1006 121h0M1006 124h0M1006 110h0M1007 108h0M1007 129h0M1007 123h0M1007 107h0M1007 116h0M1008 115h0M1008 111h0M1008 127h0M1008 114h0M1008 117h0M1009 112h0M1009 120h0M1009 121h0M1009 113h0M1009 124h0M1010 119h0M1010 101h0M1010 117h0M1010 123h0M1010 125h0M1011 124h0M1011 116h0M1011 121h0M1011 110h0M1012 111h0M1012 107h0M1012 108h0M1012 109h0M1012 131h0M1013 124h0M1013 128h0M1013 112h0M1013 131h0M1013 113h0M1013 126h0M1014 105h0M1014 125h0M1014 113h0M1014 109h0M1014 117h0M1015 121h0M1015 114h0M1015 116h0M1016 114h0M1016 107h0M1016 120h0M1016 113h0M1016 126h0M1016 123h0M1017 117h0M1017 110h0M1017 120h0M1017 109h0M1018 107h0M1018 122h0M1018 125h0M1018 114h0M1018 106h0M1019 106h0M1019 111h0M1019 125h0M1019 113h0M1019 117h0M1020 127h0M1020 117h0M1020 108h0M1020 119h0M1020 110h0M1021 118h0M1021 111h0M1021 117h0M1021 119h0M1021 104h0M1022 124h0M1022 115h0M1022 120h0M1022 122h0M1022 116h0M1023 111h0M1023 114h0M1023 102h0M1023 123h0M1024 126h0M1024 115h0M1024 108h0M1024 111h0M1024 105h0M1024 123h0M1025 120h0M1025 122h0M1025 123h0M1025 126h0M1025 132h0M1026 120h0M1026 100h0M1026 125h0M1026 127h0M1026 119h0M1027 123h0M1027 122h0M1027 116h0M1027 101h0M1027 121h0M1028 125h0M1028 124h0M1028 109h0M1028 126h0M1029 106h0M1029 125h0M1029 136h0M1029 123h0M1029 122h0M1030 126h0M1030 117h0M1030 112h0M1030 118h0M1030 103h0M1030 124h0M1031 119h0M1031 106h0M1031 118h0M1031 102h0M1031 104h0M1032 110h0M1032 120h0M1032 125h0M1032 117h0M1032 111h0M1033 116h0M1033 121h0M1033 117h0M1033 125h0M1034 107h0M1034 110h0M1034 115h0M1034 122h0M1034 119h0M1035 128h0M1035 125h0M1035 118h0M1035 119h0M1036 114h0M1036 123h0M1036 135h0M1036 121h0M1036 117h0M1037 118h0M1037 127h0M1037 120h0M1037 116h0M1037 107h0M1038 122h0M1038 134h0M1038 121h0M1038 126h0M1038 127h0M1039 119h0M1039 113h0M1039 126h0M1039 116h0M1039 124h0M1039 112h0M1040 115h0M1040 125h0M1040 116h0M1040 126h0M1041 125h0M1041 118h0M1041 120h0M1041 134h0M1042 129h0M1042 134h0M1042 122h0M1042 125h0M1042 117h0M1043 129h0M1043 117h0M1043 124h0M1043 128h0M1043 138h0M1044 132h0M1044 117h0M1044 125h0M1044 116h0M1044 129h0M1045 127h0M1045 133h0M1045 132h0M1045 136h0M1045 122h0M1046 117h0M1046 128h0M1046 120h0M1046 130h0M1046 134h0M1047 119h0M1047 121h0M1047 120h0M1047 129h0M1047 135h0M1048 119h0M1048 128h0M1048 115h0M1048 139h0M1048 137h0M1048 133h0M1049 139h0M1049 134h0M1049 128h0M1050 129h0M1050 123h0M1050 118h0M1050 128h0M1050 119h0M1051 132h0M1051 129h0M1051 133h0M1051 122h0M1052 132h0M1052 115h0M1052 124h0M1052 114h0M1052 125h0M1053 119h0M1053 128h0M1053 124h0M1053 127h0M1053 122h0M1054 122h0M1054 112h0M1054 136h0M1054 118h0M1054 116h0M1055 124h0M1055 121h0M1055 131h0M1055 127h0M1055 136h0M1056 127h0M1056 132h0M1056 113h0M1056 122h0M1056 131h0M1057 127h0M1057 122h0M1057 135h0M1057 131h0M1058 118h0M1058 121h0M1059 129h0M1059 118h0M1059 122h0M1059 121h0M1059 125h0M1060 113h0M1060 128h0M1060 137h0M1060 119h0M1060 121h0M1060 120h0M1061 120h0M1061 129h0M1061 128h0M1061 135h0M1061 119h0M1062 121h0M1062 131h0M1062 126h0M1062 124h0M1063 121h0M1063 139h0M1063 127h0M1063 126h0M1063 137h0M1063 132h0M1064 118h0M1064 122h0M1064 119h0M1064 128h0M1064 125h0M1065 121h0M1065 120h0M1065 130h0M1065 124h0M1066 127h0M1066 131h0M1066 137h0M1066 126h0M1066 132h0M1067 128h0M1067 115h0M1067 117h0M1067 113h0M1067 119h0M1068 119h0M1068 123h0M1068 117h0M1068 121h0M1069 119h0M1069 124h0M1069 112h0M1069 136h0M1069 132h0M1069 120h0M1070 124h0M1070 129h0M1070 122h0M1070 127h0M1070 126h0M1071 122h0M1071 117h0M1071 119h0M1071 135h0M1071 129h0M1072 125h0M1072 132h0M1072 115h0M1072 131h0M1072 130h0M1072 136h0M1073 126h0M1073 132h0M1073 135h0M1073 133h0M1073 131h0M1074 125h0M1074 131h0M1074 126h0M1074 121h0M1074 116h0M1075 135h0M1075 124h0M1075 134h0M1075 137h0M1075 118h0M1075 133h0M1076 135h0M1076 122h0M1076 127h0M1076 124h0M1076 123h0M1077 141h0M1077 129h0M1077 125h0M1077 139h0M1077 127h0M1078 124h0M1078 122h0M1078 137h0M1078 118h0M1078 127h0M1078 139h0M1079 123h0M1079 135h0M1079 132h0M1079 125h0M1080 122h0M1080 125h0M1080 133h0M1080 130h0M1080 123h0M1081 124h0M1081 131h0M1081 119h0M1081 139h0M1082 129h0M1082 123h0M1082 135h0M1082 115h0M1083 124h0M1083 132h0M1083 133h0M1083 120h0M1084 132h0M1084 131h0M1084 125h0M1084 122h0M1084 126h0M1085 141h0M1085 131h0M1085 139h0M1085 133h0M1085 138h0M1086 140h0M1086 131h0M1086 132h0M1086 124h0M1086 136h0M1087 139h0M1087 128h0M1087 137h0M1087 138h0M1087 136h0M1088 122h0M1088 117h0M1088 136h0M1088 134h0M1088 147h0M1089 132h0M1089 124h0M1089 133h0M1089 137h0M1089 140h0M1090 132h0M1090 140h0M1090 125h0M1090 136h0M1091 127h0M1091 131h0M1091 136h0M1092 128h0M1092 124h0M1092 122h0M1092 120h0M1092 125h0M1093 127h0M1093 138h0M1093 118h0M1093 113h0M1093 131h0M1094 126h0M1094 129h0M1094 128h0M1094 132h0M1095 124h0M1095 129h0M1095 131h0M1095 119h0M1095 122h0M1096 136h0M1096 117h0M1096 119h0M1096 131h0M1096 135h0M1097 124h0M1097 129h0M1097 140h0M1097 130h0M1097 131h0M1098 132h0M1098 129h0M1098 120h0M1098 131h0M1098 128h0M1098 136h0M1099 124h0M1099 116h0M1099 115h0M1099 127h0M1099 123h0M1100 125h0M1100 118h0M1100 131h0M1100 133h0M1100 135h0M1101 131h0M1101 130h0M1101 124h0M1101 132h0M1101 129h0M1101 121h0M1102 138h0M1102 129h0M1102 133h0M1102 140h0M1103 140h0M1103 121h0M1103 122h0M1103 124h0M1104 127h0M1104 139h0M1104 128h0M1104 131h0M1104 119h0M1105 130h0M1105 124h0M1105 129h0M1105 128h0M1106 122h0M1106 120h0M1106 129h0M1106 124h0M1106 114h0M1107 131h0M1107 122h0M1107 118h0M1107 121h0M1107 117h0M1108 124h0M1108 127h0M1108 126h0M1108 133h0M1108 135h0M1109 116h0M1109 137h0M1109 117h0M1109 123h0M1109 139h0M1110 123h0M1110 143h0M1110 124h0M1110 126h0M1110 119h0M1110 127h0M1111 138h0M1111 129h0M1111 123h0M1111 130h0M1112 118h0M1112 136h0M1112 133h0M1112 129h0M1112 130h0M1113 136h0M1113 131h0M1113 124h0M1113 127h0M1113 132h0M1113 111h0M1114 123h0M1114 131h0M1114 120h0M1114 147h0M1115 139h0M1115 131h0M1115 138h0M1115 127h0M1115 129h0M1116 126h0M1116 113h0M1116 117h0M1116 140h0M1116 130h0M1116 121h0M1117 120h0M1117 125h0M1117 137h0M1117 144h0M1117 124h0M1118 123h0M1118 124h0M1118 122h0M1118 119h0M1118 126h0M1119 133h0M1119 124h0M1119 138h0M1119 130h0M1119 136h0M1119 125h0M1120 123h0M1120 139h0M1120 117h0M1120 129h0M1121 128h0M1121 123h0M1121 136h0M1121 142h0M1121 133h0M1122 127h0M1122 130h0M1122 135h0M1122 131h0M1122 122h0M1123 133h0M1123 127h0M1123 128h0M1123 123h0M1123 137h0M1124 136h0M1124 134h0M1124 120h0M1124 141h0M1125 124h0M1125 130h0M1125 128h0M1125 114h0M1125 122h0M1126 126h0M1126 138h0M1126 129h0M1126 127h0M1126 140h0M1127 129h0M1127 117h0M1127 131h0M1127 127h0M1127 135h0M1128 122h0M1128 137h0M1128 129h0M1128 125h0M1128 139h0M1129 131h0M1129 123h0M1129 125h0M1129 120h0M1129 132h0M1130 124h0M1130 135h0M1130 134h0M1130 136h0M1130 128h0M1131 116h0M1131 124h0M1131 126h0M1131 117h0M1131 114h0M1132 132h0M1132 131h0M1132 125h0M1132 130h0M1133 136h0M1133 126h0M1133 129h0M1133 123h0M1133 127h0M1134 133h0M1134 140h0M1134 113h0M1134 127h0M1134 130h0M1134 117h0M1135 112h0M1135 135h0M1135 129h0M1135 122h0M1135 126h0M1136 118h0M1136 130h0M1136 111h0M1136 123h0M1136 110h0M1137 121h0M1137 120h0M1137 137h0M1137 117h0M1137 123h0M1138 124h0M1138 125h0M1138 119h0M1138 126h0M1138 133h0M1139 128h0M1139 119h0M1139 135h0M1139 127h0M1139 115h0M1140 126h0M1140 124h0M1140 139h0M1140 125h0M1141 135h0M1141 129h0M1141 132h0M1141 127h0M1141 119h0M1142 121h0M1142 118h0M1142 127h0M1142 135h0M1142 132h0M1143 121h0M1143 126h0M1143 124h0M1143 137h0M1143 129h0M1144 138h0M1144 117h0M1144 129h0M1144 111h0M1144 133h0M1145 118h0M1145 132h0M1145 125h0M1145 126h0M1146 130h0M1146 127h0M1146 135h0M1146 131h0M1146 139h0M1146 137h0M1147 126h0M1147 141h0M1147 129h0M1147 138h0M1148 129h0M1148 120h0M1148 132h0M1148 143h0M1148 123h0M1149 127h0M1149 123h0M1149 120h0M1149 124h0M1149 131h0M1150 123h0M1150 134h0M1150 129h0M1150 136h0M1150 126h0M1151 138h0M1151 123h0M1151 130h0M1151 133h0M1151 144h0M1152 138h0M1152 132h0M1152 131h0M1152 133h0M1153 125h0M1153 143h0M1153 136h0M1153 127h0M1153 135h0M1154 126h0M1154 131h0M1154 134h0M1154 120h0M1154 124h0M1155 135h0M1155 127h0M1155 122h0M1155 142h0M1155 139h0M1156 125h0M1156 131h0M1156 124h0M1156 120h0M1156 123h0M1157 134h0M1157 131h0M1157 127h0M1157 122h0M1157 128h0M1157 118h0M1158 131h0M1158 115h0M1158 138h0M1158 121h0M1158 128h0M1159 129h0M1159 137h0M1159 128h0M1159 135h0M1159 136h0M1160 128h0M1160 118h0M1160 115h0M1160 134h0M1160 135h0M1161 128h0M1161 120h0M1161 116h0M1161 123h0M1162 118h0M1162 127h0M1162 134h0M1162 121h0M1162 131h0M1163 123h0M1163 132h0M1163 117h0M1163 121h0M1163 126h0M1163 136h0M1164 133h0M1164 131h0M1164 127h0M1164 125h0M1164 128h0M1165 140h0M1165 132h0M1165 134h0M1165 130h0M1165 136h0M1166 120h0M1166 133h0M1166 134h0M1166 131h0M1166 127h0M1166 122h0M1167 131h0M1167 115h0M1167 136h0M1167 143h0M1167 127h0M1168 140h0M1168 132h0M1168 131h0M1168 130h0M1168 141h0M1169 136h0M1169 130h0M1169 133h0M1169 127h0M1169 132h0M1169 115h0M1170 123h0M1170 132h0M1170 143h0M1170 138h0M1170 134h0M1171 136h0M1171 126h0M1171 146h0M1171 140h0M1171 137h0M1172 140h0M1172 130h0M1172 129h0M1172 127h0M1172 128h0M1173 136h0M1173 131h0M1173 128h0M1173 126h0M1173 139h0M1174 147h0M1174 141h0M1174 137h0M1174 135h0M1174 131h0M1175 130h0M1175 126h0M1175 127h0M1175 143h0M1175 119h0M1175 141h0M1176 132h0M1176 146h0M1176 135h0M1176 126h0M1177 134h0M1177 132h0M1177 131h0M1177 135h0M1178 138h0M1178 132h0M1178 123h0M1178 137h0M1178 130h0M1179 122h0M1179 130h0M1179 132h0M1179 129h0M1179 127h0M1180 137h0M1180 139h0M1180 140h0M1180 136h0M1181 128h0M1181 124h0M1181 123h0M1181 138h0M1181 129h0M1182 130h0M1182 136h0M1182 133h0M1182 124h0M1182 127h0M1183 124h0M1183 122h0M1183 138h0M1183 123h0M1184 129h0M1184 135h0M1184 118h0M1184 132h0M1184 119h0M1184 125h0M1185 127h0M1185 125h0M1185 140h0M1185 124h0M1186 130h0M1186 122h0M1186 132h0M1186 127h0M1186 118h0M1187 122h0M1187 127h0M1187 137h0M1187 139h0M1187 136h0M1187 141h0M1188 131h0M1188 138h0M1188 126h0M1188 127h0M1189 128h0M1189 130h0M1189 144h0M1189 135h0M1189 118h0M1190 129h0M1190 132h0M1190 131h0M1190 125h0M1190 149h0M1191 139h0M1191 125h0M1191 122h0M1192 132h0M1192 123h0M1192 122h0M1192 116h0M1192 136h0M1193 125h0M1193 119h0M1193 135h0M1193 128h0M1193 136h0M1194 127h0M1194 122h0M1194 140h0M1194 119h0M1194 125h0M1195 129h0M1195 120h0M1195 124h0M1195 121h0M1196 124h0M1196 127h0M1196 135h0M1196 120h0M1196 137h0M1197 123h0M1197 125h0M1197 133h0M1197 134h0M1198 115h0M1198 136h0M1198 111h0M1198 119h0M1198 114h0M1199 115h0M1199 127h0M1199 110h0M1199 118h0M1199 111h0M1199 119h0M1200 126h0M1200 124h0M1200 122h0M1200 125h0M1200 128h0M1201 115h0M1201 117h0M1201 114h0M1201 132h0M1201 129h0M1202 119h0M1202 116h0M1202 118h0M1202 115h0M1202 132h0M1202 124h0M1203 117h0M1203 122h0M1203 130h0M1203 113h0M1203 129h0M1204 123h0M1204 138h0M1204 122h0M1204 126h0M1204 133h0M1205 123h0M1205 120h0M1205 121h0M1205 115h0M1206 132h0M1206 122h0M1206 126h0M1206 130h0M1207 121h0M1207 128h0M1207 120h0M1207 123h0M1208 129h0M1208 134h0M1208 124h0M1208 136h0M1209 139h0M1209 134h0M1209 135h0M1209 127h0M1209 123h0M1210 141h0M1210 127h0M1210 119h0M1210 131h0M1211 128h0M1211 126h0M1211 125h0M1211 129h0M1211 136h0M1211 120h0M1212 146h0M1212 131h0M1212 135h0M1212 126h0M1212 128h0M1213 117h0M1213 124h0M1213 128h0M1213 126h0M1214 125h0M1214 132h0M1214 126h0M1214 140h0M1214 130h0M1215 127h0M1215 143h0M1215 117h0M1215 118h0M1215 129h0M1216 132h0M1216 133h0M1216 135h0M1216 139h0M1216 127h0M1216 128h0M1217 127h0M1217 145h0M1217 126h0M1217 122h0M1217 128h0M1218 129h0M1218 138h0M1218 132h0M1218 127h0M1218 133h0M1219 138h0M1219 130h0M1219 129h0M1219 135h0M1219 133h0M1219 128h0M1220 137h0M1220 123h0M1220 119h0M1220 132h0M1221 130h0M1221 122h0M1221 117h0M1221 120h0M1222 124h0M1222 125h0M1222 123h0M1222 120h0M1222 137h0M1223 116h0M1223 120h0M1223 131h0M1223 125h0M1223 135h0M1224 133h0M1224 132h0M1224 134h0M1224 137h0M1224 136h0M1225 134h0M1225 126h0M1225 123h0M1225 116h0M1225 118h0M1225 132h0M1226 136h0M1226 135h0M1226 125h0M1226 127h0M1226 123h0M1227 134h0M1227 117h0M1227 114h0M1227 132h0M1227 129h0M1228 116h0M1228 120h0M1228 129h0M1228 128h0M1228 127h0M1228 124h0M1229 126h0M1229 120h0M1229 124h0M1229 125h0M1229 119h0M1230 128h0M1230 126h0M1230 116h0M1230 120h0M1231 127h0M1231 119h0M1231 131h0M1231 129h0M1231 114h0M1231 124h0M1232 129h0M1232 121h0M1232 139h0M1232 131h0M1233 126h0M1233 118h0M1233 122h0M1233 114h0M1234 123h0M1234 126h0M1234 120h0M1234 114h0M1234 128h0M1235 135h0M1235 130h0M1235 112h0M1235 129h0M1235 132h0M1236 132h0M1236 127h0M1236 119h0M1236 130h0M1236 111h0M1237 120h0M1237 119h0M1237 130h0M1237 128h0M1237 132h0M1237 138h0M1238 134h0M1238 124h0M1238 118h0M1238 130h0M1238 136h0M1239 121h0M1239 133h0M1239 136h0M1239 119h0M1239 128h0M1240 120h0M1240 129h0M1240 131h0M1240 141h0M1240 122h0M1241 134h0M1241 132h0M1241 138h0M1241 141h0M1242 132h0M1242 121h0M1242 133h0M1242 125h0M1242 131h0M1243 124h0M1243 135h0M1243 137h0M1243 141h0M1243 127h0M1243 129h0M1244 122h0M1244 134h0M1244 133h0M1244 116h0M1244 129h0M1245 114h0M1245 123h0M1245 133h0M1245 128h0M1246 122h0M1246 124h0M1246 132h0M1246 125h0M1246 126h0M1247 138h0M1247 130h0M1247 129h0M1247 132h0M1248 127h0M1248 123h0M1248 129h0M1248 134h0M1249 122h0M1249 132h0M1249 116h0M1249 125h0M1249 126h0M1249 123h0M1250 125h0M1250 121h0M1250 128h0M1250 134h0M1251 117h0M1251 113h0M1251 126h0M1251 121h0M1251 131h0M1252 122h0M1252 126h0M1252 139h0M1252 119h0M1252 123h0M1253 130h0M1253 128h0M1253 122h0M1253 119h0M1253 125h0M1254 114h0M1254 131h0M1254 137h0M1254 134h0M1255 123h0M1255 136h0M1255 128h0M1255 120h0M1255 121h0M1255 114h0M1256 129h0M1256 133h0M1256 137h0M1256 127h0M1256 122h0M1257 126h0M1257 130h0M1257 120h0M1257 125h0M1258 135h0M1258 131h0M1258 136h0M1258 126h0M1258 114h0M1258 124h0M1259 117h0M1259 132h0M1259 124h0M1259 121h0M1259 127h0M1260 121h0M1260 120h0M1260 124h0M1260 116h0M1260 115h0M1261 116h0M1261 114h0M1261 123h0M1261 121h0M1262 107h0M1262 118h0M1262 111h0M1262 112h0M1263 120h0M1263 116h0M1263 122h0M1263 113h0M1264 113h0M1264 122h0M1264 116h0M1264 110h0M1264 120h0M1265 131h0M1265 111h0M1265 120h0M1265 122h0M1265 121h0M1266 129h0M1266 119h0M1266 126h0M1266 118h0M1266 120h0M1267 126h0M1267 130h0M1267 112h0M1267 128h0M1267 118h0M1268 132h0M1268 118h0M1268 127h0M1268 123h0M1269 134h0M1269 122h0M1269 124h0M1269 131h0M1269 139h0M1270 129h0M1270 142h0M1270 130h0M1270 125h0M1270 122h0M1271 125h0M1271 127h0M1271 132h0M1271 128h0M1271 121h0M1272 124h0M1272 122h0M1272 139h0M1272 138h0M1272 131h0M1273 138h0M1273 121h0M1273 125h0M1273 143h0M1273 126h0M1273 134h0M1274 127h0M1274 126h0M1274 123h0M1274 122h0M1275 130h0M1275 123h0M1275 117h0M1275 131h0M1275 120h0M1276 131h0M1276 139h0M1276 130h0M1276 129h0M1276 117h0M1276 137h0M1277 141h0M1277 126h0M1277 117h0M1277 128h0M1277 130h0M1278 126h0M1278 130h0M1278 143h0M1278 131h0M1278 125h0M1279 131h0M1279 125h0M1279 128h0M1279 122h0M1279 123h0M1280 131h0M1280 120h0M1280 127h0M1280 134h0M1281 122h0M1281 130h0M1281 127h0M1281 136h0M1281 138h0M1281 131h0M1282 134h0M1282 126h0M1282 132h0M1282 127h0M1282 125h0M1283 127h0M1283 137h0M1283 126h0M1283 133h0M1284 115h0M1284 122h0M1284 133h0M1284 138h0M1284 134h0M1284 117h0M1285 134h0M1285 131h0M1285 144h0M1286 132h0M1286 121h0M1286 136h0M1286 131h0M1286 123h0M1287 128h0M1287 134h0M1287 126h0M1287 129h0M1287 136h0M1288 134h0M1288 132h0M1288 138h0M1288 129h0M1288 137h0M1289 134h0M1289 139h0M1289 130h0M1289 131h0M1290 121h0M1290 126h0M1290 139h0M1290 133h0M1290 138h0M1290 130h0M1291 135h0M1291 134h0M1291 125h0M1291 131h0M1291 139h0M1292 140h0M1292 137h0M1292 131h0M1292 135h0M1292 146h0M1293 142h0M1293 126h0M1293 133h0M1293 124h0M1293 128h0M1294 137h0M1294 126h0M1294 135h0M1294 139h0M1294 123h0M1295 132h0M1295 126h0M1295 133h0M1295 134h0M1295 139h0M1296 132h0M1296 140h0M1296 130h0M1296 131h0M1296 127h0M1296 143h0M1297 121h0M1297 139h0M1297 125h0M1297 130h0M1298 124h0M1298 125h0M1298 136h0M1298 120h0M1299 127h0M1299 147h0M1299 136h0M1299 126h0M1299 130h0M1300 115h0M1300 133h0M1300 122h0M1300 128h0M1300 116h0M1301 127h0M1301 117h0M1301 115h0M1301 134h0M1301 128h0M1302 137h0M1302 132h0M1302 120h0M1302 127h0M1302 133h0M1303 120h0M1303 121h0" fill="none" stroke="#000" stroke-width="3.80" stroke-linecap="round"/>
<path d="M105.1 204.05H1360.9" stroke="#008000" stroke-width="2.08" fill="none"/>
<text text-anchor="middle" x="597.6" y="312">59964</text><text text-anchor="middle" x="1167.4" y="292">55111</text>
<path d="M162.0 320.98V35.40" stroke="#800080" stroke-width="2.08" stroke-dasharray="2.083 3.4375" fill="none"/><path d="M1033.0 320.98V35.40" stroke="#800080" stroke-width="2.08" stroke-dasharray="2.083 3.4375" fill="none"/><path d="M1303.0 320.98V35.40" stroke="#800080" stroke-width="2.08" stroke-dasharray="2.083 3.4375" fill="none"/>
<rect x="105.5" y="35.5" width="1380.0" height="286.0" fill="none" stroke="#000" stroke-width="1.11"/><path d="M162.5 321.5v4.86M345.5 321.5v4.86M528.5 321.5v4.86M710.5 321.5v4.86M893.5 321.5v4.86M1076.5 321.5v4.86M1259.5 321.5v4.86M1441.5 321.5v4.86" stroke="#000" stroke-width="1.11" fill="none"/><text x="162.12" y="341.88" text-anchor="middle">0</text><text x="344.87" y="341.88" text-anchor="middle">1000</text><text x="527.62" y="341.88" text-anchor="middle">2000</text><text x="710.37" y="341.88" text-anchor="middle">3000</text><text x="893.12" y="341.88" text-anchor="middle">4000</text><text x="1075.87" y="341.88" text-anchor="middle">5000</text><text x="1258.62" y="341.88" text-anchor="middle">6000</text><text x="1441.37" y="341.88" text-anchor="middle">7000</text><path d="M105.5 287.5h-4.86M105.5 250.5h-4.86M105.5 213.5h-4.86M105.5 176.5h-4.86M105.5 139.5h-4.86M105.5 102.5h-4.86M105.5 65.5h-4.86" stroke="#000" stroke-width="1.11" fill="none"/><text x="95.4" y="292.55" text-anchor="end">7.06</text><text x="95.4" y="255.55" text-anchor="end">7.08</text><text x="95.4" y="218.55" text-anchor="end">7.10</text><text x="95.4" y="181.55" text-anchor="end">7.12</text><text x="95.4" y="144.55" text-anchor="end">7.14</text><text x="95.4" y="107.55" text-anchor="end">7.16</text><text x="95.4" y="70.55" text-anchor="end">7.18</text><text x="795.05" y="27.05" text-anchor="middle" style="font-size:16.67px">AGASC ID 161748896</text>
<rect x="1347.93" y="247.33" width="130.13" height="67.00" rx="2.78" ry="2.78" fill="#fff" fill-opacity="0.8" stroke="#ccc" stroke-opacity="0.8" stroke-width="1.39"/><path transform="translate(.5 .5)" d="M1367 260h0" fill="none" stroke="#f00" stroke-width="3.80" stroke-linecap="round"/><path transform="translate(.5 .5)" d="M1367 281h0" fill="none" stroke="#ffa500" stroke-width="3.80" stroke-linecap="round"/><path transform="translate(.5 .5)" d="M1367 302h0" fill="none" stroke="#000" stroke-width="3.80" stroke-linecap="round"/><text x="1392.4" y="263.9">not OK</text><text x="1392.4" y="284.85">Highlighted</text><text x="1392.4" y="305.8">OK</text>
<rect x="1361.33" y="42.35" width="116.73" height="27.11" rx="2.78" ry="2.78" fill="#fff" fill-opacity="0.8" stroke="#ccc" stroke-opacity="0.8" stroke-width="1.39"/><path d="M1366.9 54.04H1394.7" stroke="#008000" stroke-width="2.08" stroke-linecap="square" fill="none"/><text x="1407.0" y="58.9">mag<tspan dx="-0.9" dy="2.2" style="font-size:9.72px;font-style:italic;letter-spacing:0.25px">AGASC</tspan></text>
</g>
<g id="p2">
<path transform="translate(.5 .5)" d="M210 609h0M249 581h0M250 599h0M265 582h0M298 584h0M304 583h0M335 580h0M336 584h0M424 578h0M438 579h0M483 577h0M622 616h0M637 580h0M229 454h0M680 455h0M686 456h0M696 441h0M712 456h0M741 442h0M741 452h0M741 455h0M819 455h0M889 589h0M905 592h0M942 454h0M958 455h0M986 451h0M1008 450h0M1015 443h0M1025 440h0M1036 484h0M1067 606h0M1085 608h0M1135 481h0M1137 478h0M1143 487h0M1161 600h0M1226 486h0M1242 601h0M1263 486h0" fill="none" stroke="#ffa500" stroke-width="3.80" stroke-linecap="round"/>
<path d="M166.5 665.6l-2.4 -4.4h4.8zM187.5 665.6l-2.4 -4.4h4.8zM213.5 665.6l-2.4 -4.4h4.8zM215.5 665.6l-2.4 -4.4h4.8zM237.5 665.6l-2.4 -4.4h4.8zM297.5 665.6l-2.4 -4.4h4.8zM318.5 665.6l-2.4 -4.4h4.8zM342.5 665.6l-2.4 -4.4h4.8zM411.5 665.6l-2.4 -4.4h4.8zM487.5 665.6l-2.4 -4.4h4.8zM612.5 665.6l-2.4 -4.4h4.8zM752.5 665.6l-2.4 -4.4h4.8z" fill="#ffa500" stroke="#ffa500" stroke-width="0.8" stroke-linejoin="miter" clip-path="url(#c2)"/>
<g clip-path="url(#c2)"><path transform="translate(.5 .5)" d="M162 533h0M162 496h0M162 523h0M162 474h0M163 527h0M163 518h0M163 485h0M163 530h0M163 486h0M164 521h0M164 546h0M164 491h0M164 490h0M165 522h0M165 474h0M165 481h0M165 533h0M165 543h0M166 528h0M166 530h0M166 516h0M166 524h0M166 523h0M167 507h0M167 492h0M167 514h0M167 528h0M167 484h0M168 529h0M168 527h0M168 514h0M168 535h0M168 515h0M168 548h0M169 505h0M169 510h0M169 520h0M169 526h0M169 543h0M170 516h0M170 545h0M170 535h0M170 522h0M171 499h0M171 534h0M171 529h0M171 505h0M171 515h0M172 504h0M172 517h0M172 509h0M172 552h0M172 519h0M173 490h0M173 536h0M173 542h0M173 550h0M173 532h0M174 546h0M174 505h0M174 527h0M174 537h0M174 526h0M174 536h0M175 522h0M175 534h0M175 526h0M175 530h0M175 495h0M176 525h0M176 519h0M176 531h0M176 522h0M177 515h0M177 502h0M177 518h0M177 550h0M177 496h0M177 507h0M178 537h0M178 519h0M178 499h0M178 521h0M178 536h0M179 518h0M179 529h0M179 491h0M179 503h0M179 477h0M180 523h0M180 509h0M180 505h0M180 477h0M180 551h0M180 556h0M181 520h0M181 491h0M181 509h0M181 474h0M182 530h0M182 506h0M182 491h0M182 508h0M182 492h0M182 517h0M183 538h0M183 480h0M183 514h0M183 558h0M183 511h0M184 520h0M184 492h0M184 483h0M184 519h0M184 535h0M185 541h0M185 504h0M185 490h0M185 515h0M185 527h0M186 546h0M186 541h0M186 506h0M186 519h0M186 543h0M187 468h0M187 535h0M187 523h0M187 549h0M187 518h0M188 506h0M188 534h0M188 525h0M188 487h0M188 510h0M188 517h0M189 547h0M189 519h0M189 496h0M189 591h0M189 560h0M190 551h0M190 488h0M190 537h0M190 520h0M190 509h0M191 533h0M191 525h0M191 496h0M191 528h0M191 530h0M191 499h0M192 528h0M192 536h0M192 533h0M192 497h0M192 501h0M193 513h0M193 504h0M193 550h0M193 505h0M193 521h0M194 521h0M194 544h0M194 530h0M194 526h0M194 524h0M194 541h0M195 516h0M195 538h0M195 500h0M195 519h0M195 553h0M196 542h0M196 506h0M196 535h0M196 523h0M197 519h0M197 502h0M197 495h0M197 527h0M197 467h0M197 530h0M198 501h0M198 491h0M198 526h0M198 514h0M198 528h0M199 492h0M199 558h0M199 544h0M199 519h0M200 514h0M200 521h0M200 524h0M200 498h0M200 495h0M200 539h0M201 522h0M201 502h0M201 515h0M201 524h0M201 532h0M202 490h0M202 513h0M202 478h0M202 536h0M202 551h0M203 522h0M203 506h0M203 523h0M203 555h0M203 514h0M203 516h0M204 551h0M204 552h0M204 541h0M204 521h0M204 531h0M205 533h0M205 552h0M205 568h0M205 501h0M205 532h0M206 557h0M206 481h0M206 504h0M206 569h0M206 499h0M206 543h0M207 536h0M207 553h0M207 543h0M207 515h0M208 500h0M208 511h0M208 550h0M208 504h0M208 536h0M209 542h0M209 514h0M209 536h0M209 559h0M209 509h0M209 520h0M210 534h0M210 535h0M210 527h0M210 536h0M211 500h0M211 526h0M211 542h0M211 537h0M211 544h0M212 496h0M212 526h0M212 524h0M212 545h0M212 503h0M213 515h0M213 513h0M213 517h0M213 506h0M213 523h0M214 515h0M214 549h0M214 557h0M214 530h0M214 496h0M215 506h0M215 542h0M215 512h0M215 525h0M215 546h0M215 570h0M216 542h0M216 533h0M216 497h0M216 526h0M217 477h0M217 555h0M217 509h0M217 520h0M217 525h0M218 519h0M218 532h0M218 523h0M218 533h0M218 528h0M218 534h0M219 551h0M219 528h0M219 521h0M219 500h0M219 549h0M220 508h0M220 490h0M220 499h0M220 543h0M220 556h0M221 557h0M221 532h0M221 516h0M221 549h0M221 502h0M221 524h0M222 536h0M222 561h0M222 544h0M222 495h0M222 543h0M223 500h0M223 535h0M223 533h0M223 529h0M223 526h0M224 522h0M224 528h0M224 537h0M224 511h0M224 558h0M224 542h0M225 547h0M225 543h0M225 506h0M225 544h0M226 526h0M226 516h0M226 533h0M226 515h0M226 518h0M227 521h0M227 536h0M227 542h0M227 561h0M227 501h0M227 541h0M228 502h0M228 513h0M228 535h0M228 491h0M229 515h0M229 554h0M229 507h0M229 565h0M229 526h0M230 508h0M230 538h0M230 563h0M230 520h0M230 539h0M230 527h0M231 504h0M231 500h0M231 466h0M231 491h0M231 543h0M232 555h0M232 506h0M232 526h0M232 501h0M232 542h0M233 520h0M233 514h0M233 543h0M233 549h0M233 536h0M234 499h0M234 551h0M234 465h0M234 521h0M234 557h0M235 520h0M235 519h0M235 530h0M235 542h0M235 492h0M236 502h0M236 518h0M236 526h0M236 543h0M236 514h0M236 522h0M237 487h0M237 543h0M237 498h0M237 566h0M238 555h0M238 506h0M238 514h0M238 531h0M238 572h0M239 537h0M239 514h0M239 548h0M239 504h0M239 512h0M239 553h0M240 506h0M240 516h0M240 513h0M240 551h0M240 531h0M241 516h0M241 505h0M241 511h0M241 527h0M241 525h0M242 489h0M242 547h0M242 549h0M242 516h0M242 508h0M242 528h0M243 513h0M243 518h0M243 558h0M243 503h0M243 492h0M244 545h0M244 514h0M244 536h0M244 521h0M245 512h0M245 526h0M245 541h0M245 497h0M245 524h0M245 546h0M246 495h0M246 537h0M246 525h0M246 539h0M246 499h0M247 531h0M247 553h0M247 538h0M247 527h0M247 504h0M248 534h0M248 532h0M248 510h0M248 537h0M248 551h0M249 526h0M249 523h0M249 484h0M249 528h0M249 504h0M250 509h0M250 523h0M250 494h0M250 488h0M250 502h0M250 534h0M251 539h0M251 520h0M251 476h0M251 493h0M251 534h0M252 511h0M252 541h0M252 506h0M252 537h0M252 464h0M253 511h0M253 504h0M253 536h0M253 525h0M253 489h0M253 541h0M254 509h0M254 499h0M254 493h0M254 534h0M254 521h0M255 483h0M255 504h0M255 495h0M255 514h0M255 519h0M256 508h0M256 513h0M256 489h0M256 543h0M256 529h0M256 502h0M257 514h0M257 520h0M257 556h0M257 536h0M257 517h0M258 561h0M258 538h0M258 498h0M258 525h0M258 534h0M259 541h0M259 507h0M259 514h0M259 556h0M259 518h0M259 532h0M260 562h0M260 526h0M260 525h0M260 494h0M260 495h0M261 464h0M261 487h0M261 523h0M261 520h0M261 544h0M262 515h0M262 510h0M262 537h0M262 557h0M262 499h0M262 521h0M263 522h0M263 507h0M263 533h0M263 511h0M263 498h0M264 538h0M264 507h0M264 516h0M264 545h0M264 499h0M265 529h0M265 521h0M265 520h0M265 503h0M265 508h0M265 515h0M266 509h0M266 542h0M266 545h0M266 550h0M266 538h0M267 551h0M267 535h0M267 545h0M267 508h0M267 507h0M268 547h0M268 566h0M268 489h0M268 535h0M268 527h0M268 511h0M269 514h0M269 500h0M269 562h0M269 532h0M269 516h0M270 536h0M270 543h0M270 533h0M270 511h0M270 522h0M271 501h0M271 499h0M271 495h0M271 476h0M271 509h0M271 533h0M272 550h0M272 513h0M272 541h0M272 556h0M272 500h0M273 523h0M273 554h0M273 504h0M273 501h0M273 510h0M274 504h0M274 535h0M274 518h0M274 520h0M274 552h0M274 514h0M275 534h0M275 511h0M275 525h0M275 547h0M275 518h0M276 519h0M276 517h0M276 470h0M276 554h0M276 516h0M277 581h0M277 513h0M277 520h0M277 483h0M277 529h0M277 517h0M278 497h0M278 522h0M278 502h0M278 563h0M278 560h0M279 521h0M279 498h0M279 506h0M279 544h0M279 496h0M280 520h0M280 550h0M280 507h0M280 504h0M280 510h0M280 547h0M281 522h0M281 504h0M281 516h0M281 500h0M281 527h0M282 559h0M282 527h0M282 537h0M282 518h0M282 508h0M283 543h0M283 529h0M283 540h0M283 508h0M283 545h0M283 487h0M284 514h0M284 515h0M284 524h0M284 504h0M284 492h0M285 502h0M285 542h0M285 522h0M285 496h0M285 547h0M286 547h0M286 506h0M286 494h0M286 520h0M286 496h0M286 507h0M287 513h0M287 502h0M287 508h0M287 511h0M287 537h0M288 546h0M288 511h0M288 508h0M288 491h0M288 509h0M289 507h0M289 488h0M289 537h0M289 532h0M289 533h0M289 493h0M290 519h0M290 534h0M290 537h0M290 564h0M290 463h0M291 528h0M291 496h0M291 511h0M291 536h0M291 522h0M292 477h0M292 512h0M292 515h0M292 497h0M292 546h0M292 507h0M293 550h0M293 517h0M293 529h0M293 506h0M293 515h0M294 549h0M294 561h0M294 534h0M294 525h0M294 520h0M295 553h0M295 524h0M295 503h0M295 544h0M295 547h0M296 499h0M296 536h0M296 546h0M296 522h0M296 534h0M297 545h0M297 527h0M297 543h0M297 525h0M297 511h0M298 501h0M298 537h0M298 484h0M298 533h0M298 497h0M298 521h0M299 562h0M299 491h0M299 532h0M299 543h0M299 492h0M300 521h0M300 535h0M300 508h0M300 488h0M301 551h0M301 491h0M301 484h0M301 524h0M301 545h0M301 512h0M302 518h0M302 540h0M302 506h0M302 563h0M302 509h0M303 517h0M303 565h0M303 534h0M303 515h0M303 533h0M304 536h0M304 539h0M304 543h0M304 548h0M304 561h0M304 512h0M305 519h0M305 528h0M305 503h0M305 533h0M306 493h0M306 506h0M306 514h0M306 494h0M306 517h0M307 548h0M307 524h0M307 510h0M307 493h0M307 539h0M307 496h0M308 517h0M308 518h0M308 538h0M308 501h0M308 505h0M309 535h0M309 487h0M309 527h0M309 509h0M309 470h0M310 535h0M310 564h0M310 555h0M310 520h0M310 530h0M311 559h0M311 515h0M311 538h0M311 551h0M312 537h0M312 509h0M312 492h0M312 504h0M312 524h0M312 547h0M313 512h0M313 517h0M313 545h0M313 494h0M313 511h0M314 545h0M314 517h0M314 492h0M314 536h0M314 558h0M315 511h0M315 506h0M315 529h0M315 524h0M315 528h0M315 508h0M316 537h0M316 543h0M316 527h0M316 525h0M317 512h0M317 544h0M317 516h0M317 499h0M317 525h0M318 504h0M318 508h0M318 521h0M318 499h0M318 524h0M318 522h0M319 492h0M319 513h0M319 514h0M319 499h0M319 519h0M320 530h0M320 549h0M320 519h0M320 586h0M320 520h0M321 538h0M321 513h0M321 560h0M321 518h0M321 528h0M321 549h0M322 527h0M322 517h0M322 524h0M322 528h0M322 553h0M323 491h0M323 547h0M323 530h0M323 560h0M323 540h0M324 541h0M324 555h0M324 517h0M324 512h0M324 482h0M324 505h0M325 514h0M325 551h0M325 498h0M325 512h0M326 503h0M326 516h0M326 562h0M326 519h0M326 518h0M327 536h0M327 521h0M327 503h0M327 517h0M327 545h0M327 534h0M328 541h0M328 529h0M328 506h0M328 492h0M328 556h0M329 548h0M329 530h0M329 535h0M329 539h0M329 560h0M330 491h0M330 492h0M330 490h0M330 530h0M330 493h0M330 551h0M331 498h0M331 518h0M331 567h0M331 573h0M331 511h0M332 526h0M332 498h0M332 527h0M332 524h0M333 528h0M333 491h0M333 495h0M333 543h0M333 524h0M333 547h0M334 519h0M334 551h0M334 523h0M334 501h0M334 557h0M335 508h0M335 518h0M335 513h0M335 507h0M335 502h0M336 513h0M336 550h0M336 536h0M336 533h0M336 523h0M337 559h0M337 512h0M337 498h0M337 499h0M337 521h0M338 538h0M338 513h0M338 496h0M338 548h0M338 503h0M339 500h0M339 497h0M339 502h0M339 512h0M339 511h0M339 510h0M340 524h0M340 503h0M340 528h0M340 532h0M340 506h0M341 530h0M341 531h0M341 500h0M341 498h0M341 499h0M342 490h0M342 498h0M342 517h0M342 521h0M342 531h0M342 525h0M343 485h0M343 514h0M343 496h0M343 552h0M343 501h0M344 490h0M344 527h0M344 524h0M344 535h0M344 552h0M345 545h0M345 522h0M345 505h0M345 536h0M345 517h0M345 553h0M346 500h0M346 535h0M346 528h0M346 497h0M347 526h0M347 524h0M347 547h0M347 571h0M347 544h0M348 535h0M348 485h0M348 538h0M348 525h0M348 495h0M348 540h0M349 492h0M349 512h0M349 510h0M349 544h0M349 527h0M350 485h0M350 472h0M350 547h0M350 522h0M350 515h0M351 518h0M351 510h0M351 524h0M351 540h0M351 496h0M351 535h0M352 516h0M352 504h0M352 519h0M352 479h0M353 501h0M353 535h0M353 541h0M353 522h0M353 560h0M354 489h0M354 551h0M354 532h0M354 517h0M354 530h0M354 507h0M355 541h0M355 492h0M355 512h0M355 501h0M355 527h0M356 528h0M356 490h0M356 517h0M356 511h0M356 529h0M357 533h0M357 490h0M357 494h0M357 520h0M357 488h0M357 508h0M358 540h0M358 478h0M358 505h0M358 524h0M358 504h0M359 530h0M359 487h0M359 538h0M359 535h0M359 553h0M360 509h0M360 522h0M360 539h0M360 501h0M360 535h0M360 530h0M361 510h0M361 492h0M361 493h0M361 483h0M361 517h0M362 529h0M362 539h0M362 495h0M362 479h0M362 533h0M363 541h0M363 493h0M363 526h0M363 505h0M363 540h0M363 489h0M364 554h0M364 512h0M364 476h0M364 488h0M365 542h0M365 527h0M365 543h0M365 553h0M365 510h0M366 558h0M366 530h0M366 531h0M366 503h0M366 476h0M366 517h0M367 531h0M367 516h0M367 519h0M367 553h0M367 494h0M368 529h0M368 546h0M368 507h0M368 512h0M368 556h0M369 518h0M369 517h0M369 474h0M369 526h0M369 541h0M369 508h0M370 542h0M370 503h0M370 521h0M370 546h0M370 498h0M371 496h0M371 487h0M371 521h0M371 525h0M371 566h0M372 470h0M372 545h0M372 486h0M372 506h0M372 509h0M372 503h0M373 510h0M373 523h0M373 521h0M373 548h0M374 496h0M374 533h0M374 549h0M374 540h0M374 552h0M375 522h0M375 532h0M375 501h0M375 504h0M375 520h0M376 530h0M376 534h0M376 536h0M376 499h0M376 508h0M377 503h0M377 558h0M377 539h0M377 534h0M377 522h0M377 529h0M378 517h0M378 527h0M378 503h0M378 536h0M378 491h0M379 510h0M379 501h0M379 518h0M379 502h0M379 505h0M380 502h0M380 541h0M380 478h0M380 512h0M380 543h0M380 493h0M381 502h0M381 534h0M381 530h0M381 505h0M381 501h0M382 503h0M382 524h0M382 526h0M382 499h0M382 520h0M383 495h0M383 538h0M383 562h0M383 533h0M383 518h0M383 521h0M384 532h0M384 507h0M384 527h0M384 511h0M384 528h0M385 531h0M385 485h0M385 500h0M385 486h0M385 539h0M386 508h0M386 499h0M386 516h0M386 519h0M386 551h0M386 529h0M387 498h0M387 507h0M387 524h0M387 483h0M388 519h0M388 540h0M388 542h0M388 525h0M389 557h0M389 540h0M389 520h0M389 549h0M389 519h0M389 521h0M390 507h0M390 518h0M390 529h0M390 552h0M390 516h0M391 499h0M391 544h0M391 527h0M391 542h0M391 529h0M392 501h0M392 495h0M392 541h0M392 517h0M392 497h0M392 523h0M393 497h0M393 529h0M393 545h0M393 528h0M393 567h0M394 503h0M394 552h0M394 549h0M394 545h0M394 542h0M395 540h0M395 528h0M395 518h0M395 496h0M395 506h0M396 500h0M396 508h0M396 520h0M396 515h0M396 517h0M397 550h0M397 552h0M397 513h0M397 518h0M397 520h0M398 511h0M398 538h0M398 545h0M398 556h0M398 529h0M398 482h0M399 562h0M399 534h0M399 530h0M399 518h0M399 504h0M400 540h0M400 508h0M400 503h0M400 516h0M400 498h0M401 538h0M401 526h0M401 502h0M401 541h0M401 523h0M401 528h0M402 490h0M402 542h0M402 493h0M402 500h0M402 502h0M403 480h0M403 484h0M403 498h0M403 478h0M403 541h0M404 487h0M404 497h0M404 516h0M404 515h0M404 502h0M404 544h0M405 552h0M405 534h0M405 524h0M405 525h0M405 537h0M406 548h0M406 539h0M406 519h0M406 492h0M406 486h0M407 505h0M407 509h0M407 480h0M407 551h0M407 510h0M407 500h0M408 483h0M408 511h0M408 480h0M408 524h0M408 525h0M409 510h0M409 529h0M409 522h0M409 516h0M410 506h0M410 539h0M410 515h0M410 489h0M410 541h0M410 522h0M411 499h0M411 522h0M411 511h0M411 520h0M411 536h0M412 481h0M412 501h0M412 485h0M412 500h0M412 518h0M413 512h0M413 462h0M413 508h0M413 500h0M413 529h0M413 521h0M414 487h0M414 498h0M414 511h0M414 515h0M414 542h0M415 539h0M415 511h0M415 504h0M415 519h0M415 537h0M416 526h0M416 544h0M416 491h0M416 568h0M416 520h0M417 553h0M417 530h0M417 527h0M417 526h0M417 506h0M418 504h0M418 499h0M418 521h0M418 495h0M418 524h0M419 531h0M419 509h0M419 551h0M419 512h0M419 520h0M419 515h0M420 502h0M420 526h0M420 561h0M420 507h0M420 518h0M421 543h0M421 520h0M421 518h0M421 531h0M421 547h0M422 562h0M422 510h0M422 495h0M422 514h0M422 529h0M422 504h0M423 546h0M423 495h0M423 514h0M423 504h0M424 498h0M424 535h0M424 539h0M424 569h0M424 551h0M425 512h0M425 536h0M425 540h0M425 496h0M425 494h0M426 545h0M426 512h0M426 511h0M426 529h0M426 534h0M427 487h0M427 518h0M427 490h0M427 510h0M427 515h0M428 519h0M428 521h0M428 509h0M428 495h0M428 529h0M428 528h0M429 516h0M429 497h0M429 510h0M429 515h0M429 549h0M430 518h0M430 516h0M430 521h0M430 525h0M430 532h0M431 522h0M431 542h0M431 545h0M431 521h0M431 526h0M431 531h0M432 506h0M432 511h0M432 537h0M432 494h0M432 477h0M433 510h0M433 536h0M433 498h0M433 487h0M433 486h0M434 499h0M434 495h0M434 522h0M434 527h0M434 546h0M434 505h0M435 541h0M435 494h0M435 520h0M435 532h0M435 528h0M436 498h0M436 533h0M436 532h0M436 502h0M436 537h0M437 508h0M437 537h0M437 523h0M437 509h0M437 553h0M437 526h0M438 501h0M438 512h0M438 494h0M438 489h0M438 545h0M439 495h0M439 522h0M439 535h0M439 523h0M440 517h0M440 531h0M440 559h0M440 528h0M441 517h0M441 472h0M441 545h0M441 485h0M441 518h0M442 525h0M442 524h0M442 493h0M442 487h0M442 556h0M442 512h0M443 525h0M443 486h0M443 528h0M443 527h0M443 518h0M444 548h0M444 513h0M444 510h0M444 479h0M445 516h0M445 552h0M445 503h0M445 542h0M445 545h0M446 516h0M446 494h0M446 509h0M446 531h0M446 477h0M447 538h0M447 541h0M447 539h0M447 500h0M447 519h0M448 509h0M448 541h0M448 536h0M448 542h0M448 500h0M448 531h0M449 540h0M449 526h0M449 492h0M449 531h0M449 512h0M450 549h0M450 499h0M450 547h0M450 516h0M451 571h0M451 542h0M451 505h0M451 523h0M451 517h0M451 529h0M452 500h0M452 513h0M452 495h0M452 494h0M452 527h0M453 554h0M453 545h0M453 526h0M453 512h0M453 550h0M454 544h0M454 536h0M454 529h0M454 513h0M454 508h0M454 483h0M455 491h0M455 514h0M455 548h0M455 513h0M455 519h0M456 529h0M456 494h0M456 485h0M456 520h0M456 515h0M457 560h0M457 486h0M457 534h0M457 522h0M457 516h0M457 487h0M458 526h0M458 522h0M458 542h0M458 514h0M458 509h0M459 531h0M459 547h0M459 517h0M459 512h0M459 566h0M460 516h0M460 545h0M460 499h0M460 519h0M460 514h0M460 520h0M461 513h0M461 515h0M461 506h0M461 481h0M462 548h0M462 514h0M462 520h0M462 554h0M462 492h0M463 501h0M463 550h0M463 493h0M463 502h0M463 522h0M463 489h0M464 527h0M464 519h0M464 489h0M464 496h0M465 520h0M465 487h0M465 502h0M465 532h0M465 527h0M466 520h0M466 487h0M466 539h0M466 507h0M466 501h0M466 527h0M467 538h0M467 526h0M467 530h0M467 517h0M467 541h0M468 506h0M468 526h0M468 519h0M468 493h0M468 535h0M469 523h0M469 517h0M469 504h0M469 496h0M469 491h0M469 527h0M470 517h0M470 511h0M470 516h0M470 522h0M470 556h0M471 540h0M471 543h0M471 558h0M471 497h0M471 510h0M472 512h0M472 511h0M472 537h0M472 525h0M472 531h0M473 549h0M473 495h0M473 522h0M473 538h0M473 509h0M474 502h0M474 537h0M474 524h0M474 510h0M474 499h0M475 500h0M475 512h0M475 558h0M475 488h0M475 505h0M475 504h0M476 511h0M476 506h0M476 477h0M476 507h0M476 514h0M477 495h0M477 508h0M477 527h0M477 533h0M478 502h0M478 481h0M478 526h0M478 506h0M478 510h0M478 529h0M479 498h0M479 543h0M479 465h0M479 506h0M479 531h0M480 525h0M480 538h0M480 554h0M480 535h0M480 529h0M481 515h0M481 502h0M481 494h0M481 498h0M481 553h0M481 501h0M482 532h0M482 538h0M482 508h0M482 553h0M482 500h0M483 515h0M483 530h0M483 552h0M483 546h0M483 487h0M484 497h0M484 488h0M484 538h0M484 530h0M484 532h0M484 541h0M485 549h0M485 534h0M485 531h0M485 516h0M485 510h0M486 539h0M486 503h0M486 513h0M486 536h0M486 518h0M487 505h0M487 528h0M487 517h0M487 511h0M487 495h0M487 525h0M488 529h0M488 536h0M488 545h0M488 515h0M488 507h0M489 508h0M489 555h0M489 513h0M489 516h0M489 512h0M490 476h0M490 481h0M490 507h0M490 567h0M490 517h0M490 497h0M491 482h0M491 508h0M491 488h0M491 511h0M491 519h0M492 539h0M492 535h0M492 517h0M492 534h0M492 504h0M493 504h0M493 493h0M493 506h0M493 517h0M493 540h0M494 503h0M494 538h0M494 527h0M494 534h0M494 500h0M495 529h0M495 555h0M495 494h0M495 520h0M495 503h0M496 478h0M496 558h0M496 502h0M496 518h0M496 530h0M496 522h0M497 499h0M497 553h0M497 517h0M497 537h0M497 512h0M498 498h0M498 494h0M498 541h0M498 542h0M499 503h0M499 553h0M499 476h0M499 515h0M499 544h0M499 509h0M500 481h0M500 535h0M500 556h0M500 513h0M500 517h0M501 507h0M501 513h0M501 542h0M501 543h0M501 560h0M502 557h0M502 551h0M502 502h0M502 528h0M502 498h0M502 500h0M503 537h0M503 558h0M503 546h0M503 503h0M503 554h0M504 517h0M504 527h0M504 490h0M504 523h0M504 514h0M505 492h0M505 534h0M505 539h0M505 525h0M505 538h0M506 568h0M506 494h0M506 503h0M506 537h0M506 542h0M507 526h0M507 503h0M507 532h0M507 535h0M507 491h0M507 506h0M508 507h0M508 494h0M508 511h0M508 532h0M508 566h0M509 533h0M509 525h0M509 510h0M509 523h0M510 491h0M510 530h0M510 532h0M510 511h0M510 518h0M510 510h0M511 515h0M511 542h0M511 510h0M511 492h0M512 498h0M512 539h0M512 535h0M512 534h0M512 536h0M513 566h0M513 522h0M513 511h0M513 514h0M513 524h0M513 545h0M514 518h0M514 530h0M514 541h0M514 553h0M515 532h0M515 499h0M515 546h0M515 509h0M515 528h0M516 566h0M516 538h0M516 529h0M516 558h0M516 511h0M516 501h0M517 507h0M517 501h0M517 571h0M517 508h0M517 503h0M518 499h0M518 521h0M518 502h0M518 498h0M518 540h0M519 546h0M519 555h0M519 506h0M519 500h0M519 488h0M520 550h0M520 531h0M520 506h0M520 539h0M521 499h0M521 515h0M521 565h0M521 518h0M521 480h0M522 503h0M522 471h0M522 539h0M522 467h0M522 516h0M522 482h0M523 513h0M523 516h0M523 554h0M523 538h0M523 531h0M524 536h0M524 538h0M524 535h0M524 531h0M524 553h0M525 539h0M525 514h0M525 509h0M525 513h0M525 528h0M525 518h0M526 517h0M526 527h0M526 519h0M526 558h0M526 514h0M527 533h0M527 532h0M527 541h0M527 551h0M527 545h0M528 542h0M528 513h0M528 514h0M528 535h0M528 518h0M528 526h0M529 537h0M529 525h0M529 517h0M529 518h0M529 550h0M530 525h0M530 516h0M530 539h0M530 559h0M530 493h0M531 552h0M531 525h0M531 540h0M531 530h0M531 494h0M531 533h0M532 522h0M532 542h0M532 507h0M532 503h0M532 544h0M533 529h0M533 583h0M533 512h0M533 549h0M533 581h0M534 501h0M534 505h0M534 506h0M534 508h0M534 487h0M534 526h0M535 504h0M535 514h0M535 507h0M535 570h0M535 535h0M536 540h0M536 538h0M536 528h0M536 488h0M536 516h0M537 557h0M537 535h0M537 555h0M537 536h0M537 522h0M538 500h0M538 524h0M538 499h0M538 506h0M538 532h0M539 513h0M539 538h0M539 522h0M539 545h0M540 569h0M540 477h0M540 500h0M540 533h0M540 518h0M540 537h0M541 563h0M541 502h0M541 547h0M541 510h0M541 570h0M542 551h0M542 520h0M542 537h0M542 496h0M542 517h0M543 533h0M543 538h0M543 504h0M543 509h0M543 489h0M544 505h0M544 496h0M544 511h0M544 536h0M544 538h0M545 517h0M545 499h0M545 513h0M545 519h0M546 497h0M546 503h0M546 560h0M546 493h0M546 527h0M546 545h0M547 521h0M547 507h0M547 532h0M547 518h0M547 483h0M548 547h0M548 540h0M548 515h0M548 542h0M548 514h0M549 492h0M549 527h0M549 535h0M549 513h0M549 522h0M549 498h0M550 543h0M550 539h0M550 565h0M550 519h0M550 536h0M551 524h0M551 528h0M551 517h0M551 513h0M551 520h0M552 497h0M552 521h0M552 530h0M552 465h0M552 480h0M552 482h0M553 530h0M553 523h0M553 556h0M553 527h0M553 497h0M554 505h0M554 522h0M554 568h0M554 510h0M554 553h0M555 512h0M555 536h0M555 522h0M555 530h0M555 502h0M555 490h0M556 573h0M556 516h0M556 508h0M556 540h0M556 534h0M557 534h0M557 506h0M557 510h0M557 533h0M557 508h0M558 499h0M558 554h0M558 531h0M558 557h0M558 530h0M559 512h0M559 545h0M559 500h0M559 546h0M559 495h0M560 528h0M560 531h0M560 522h0M561 503h0M561 517h0M561 554h0M561 520h0M561 500h0M561 546h0M562 514h0M562 551h0M562 478h0M562 574h0M562 511h0M563 543h0M563 473h0M563 542h0M563 517h0M563 524h0M564 553h0M564 493h0M564 522h0M564 464h0M564 548h0M565 515h0M565 535h0M565 517h0M565 540h0M565 565h0M566 535h0M566 551h0M566 498h0M566 532h0M566 566h0M567 536h0M567 530h0M567 517h0M567 486h0M567 532h0M567 497h0M568 496h0M568 506h0M568 502h0M568 511h0M568 516h0M569 527h0M569 529h0M569 556h0M569 512h0M569 544h0M569 494h0M570 521h0M570 515h0M570 516h0M570 492h0M570 490h0M571 551h0M571 514h0M571 497h0M571 521h0M571 505h0M572 522h0M572 525h0M572 539h0M572 565h0M572 532h0M572 553h0M573 504h0M573 517h0M573 494h0M573 518h0M573 509h0M574 531h0M574 552h0M574 523h0M574 541h0M574 494h0M575 500h0M575 499h0M575 542h0M575 554h0M575 496h0M575 557h0M576 530h0M576 519h0M576 507h0M576 560h0M576 515h0M577 570h0M577 530h0M577 489h0M577 544h0M577 506h0M578 544h0M578 530h0M578 516h0M578 522h0M578 512h0M578 476h0M579 547h0M579 482h0M579 506h0M579 480h0M579 517h0M580 543h0M580 474h0M580 540h0M580 520h0M580 502h0M581 540h0M581 536h0M581 543h0M581 515h0M581 483h0M581 565h0M582 547h0M582 523h0M582 529h0M582 496h0M582 504h0M583 485h0M583 537h0M583 495h0M583 525h0M583 569h0M584 547h0M584 540h0M584 554h0M584 544h0M584 530h0M585 528h0M585 530h0M585 523h0M585 469h0M586 512h0M586 547h0M586 517h0M586 542h0M586 513h0M587 530h0M587 519h0M587 545h0M587 504h0M587 538h0M587 541h0M588 531h0M588 507h0M588 514h0M588 556h0M588 524h0M589 500h0M589 493h0M589 538h0M589 544h0M589 532h0M590 538h0M590 507h0M590 527h0M590 486h0M590 537h0M590 539h0M591 496h0M591 548h0M591 486h0M591 500h0M592 515h0M592 547h0M592 519h0M592 516h0M592 537h0M593 522h0M593 545h0M593 533h0M593 561h0M593 496h0M593 516h0M594 534h0M594 494h0M594 549h0M594 542h0M594 508h0M595 510h0M595 535h0M595 533h0M595 518h0M595 488h0M596 481h0M596 509h0M596 494h0M596 492h0M596 547h0M596 558h0M597 528h0M597 480h0M597 505h0M597 532h0M597 530h0M598 537h0M598 510h0M598 500h0M598 560h0M598 536h0M599 507h0M599 521h0M599 496h0M599 491h0M599 535h0M599 531h0M600 528h0M600 529h0M600 497h0M600 548h0M600 558h0M601 527h0M601 512h0M601 533h0M601 511h0M601 526h0M602 500h0M602 540h0M602 491h0M602 513h0M602 518h0M602 544h0M603 528h0M603 485h0M603 502h0M603 530h0M603 510h0M604 503h0M604 515h0M604 476h0M604 491h0M604 502h0M605 545h0M605 532h0M605 556h0M605 513h0M605 543h0M605 547h0M606 508h0M606 534h0M606 510h0M606 537h0M606 535h0M607 493h0M607 498h0M607 510h0M607 497h0M607 499h0M608 535h0M608 536h0M608 509h0M608 542h0M608 508h0M608 510h0M609 500h0M609 535h0M609 519h0M609 501h0M609 533h0M610 545h0M610 537h0M610 502h0M610 531h0M610 546h0M611 504h0M611 527h0M611 516h0M611 509h0M611 503h0M611 500h0M612 524h0M612 498h0M612 514h0M612 542h0M612 481h0M613 509h0M613 537h0M613 561h0M613 507h0M613 477h0M614 492h0M614 513h0M614 522h0M614 512h0M614 495h0M614 509h0M615 531h0M615 530h0M615 533h0M615 547h0M616 482h0M616 527h0M616 515h0M616 530h0M616 562h0M617 507h0M617 504h0M617 497h0M617 571h0M617 543h0M617 531h0M618 526h0M618 504h0M618 547h0M618 493h0M618 548h0M619 552h0M619 487h0M619 502h0M619 538h0M619 498h0M620 503h0M620 526h0M620 489h0M620 527h0M620 487h0M621 570h0M621 504h0M621 507h0M621 534h0M621 526h0M622 512h0M622 548h0M622 516h0M622 504h0M623 487h0M623 499h0M623 482h0M623 518h0M623 495h0M623 550h0M624 558h0M624 536h0M624 492h0M624 517h0M624 554h0M625 554h0M625 518h0M625 515h0M625 488h0M625 493h0M626 521h0M626 534h0M626 504h0M626 540h0M626 514h0M627 505h0M627 542h0M627 541h0M627 522h0M627 502h0M628 519h0M628 526h0M628 525h0M628 502h0M628 499h0M629 548h0M629 515h0M629 493h0M629 550h0M629 529h0M629 538h0M630 532h0M630 522h0M630 508h0M630 543h0M630 556h0M631 544h0M631 539h0M631 479h0M631 558h0M631 548h0M632 546h0M632 545h0M632 511h0M632 526h0M632 505h0M632 484h0M633 492h0M633 532h0M633 548h0M633 560h0M633 520h0M634 542h0M634 483h0M634 503h0M634 511h0M634 487h0M634 531h0M635 537h0M635 527h0M635 532h0M635 548h0M635 516h0M636 551h0M636 506h0M636 494h0M636 514h0M637 514h0M637 548h0M637 558h0M637 506h0M637 532h0M637 549h0M638 539h0M638 522h0M638 515h0M638 511h0M639 552h0M639 513h0M639 491h0M639 563h0M639 530h0M640 545h0M640 493h0M640 516h0M640 510h0M640 517h0M640 511h0M641 498h0M641 541h0M641 483h0M641 497h0M641 537h0M642 488h0M642 496h0M642 519h0M642 546h0M643 508h0M643 537h0M643 503h0M643 489h0M643 533h0M643 513h0M644 491h0M644 495h0M644 548h0M644 530h0M644 493h0M645 495h0M645 539h0M645 524h0M645 515h0M645 508h0M646 496h0M646 548h0M646 515h0M646 509h0M647 526h0M647 516h0M647 512h0M647 510h0M647 497h0M648 507h0M648 538h0M648 485h0M648 511h0M648 551h0M649 503h0M649 504h0M649 505h0M649 521h0M649 502h0M650 483h0M650 532h0M650 529h0M650 484h0M650 498h0M651 506h0M651 513h0M651 527h0M651 531h0M651 510h0M652 512h0M652 508h0M652 516h0M652 556h0M652 487h0M653 515h0M653 519h0M653 532h0M653 527h0M653 503h0M654 518h0M654 510h0M654 496h0M654 541h0M654 464h0M655 503h0M655 538h0M655 541h0M655 546h0M655 539h0M656 557h0M656 525h0M656 517h0M656 515h0M656 508h0M657 526h0M657 491h0M657 502h0M657 506h0M657 500h0M658 519h0M658 475h0M658 552h0M658 526h0M658 471h0M658 521h0M659 495h0M659 500h0M659 520h0M659 503h0M660 502h0M660 495h0M660 535h0M660 531h0M661 534h0M661 516h0M661 542h0M661 512h0M661 538h0M661 472h0M662 487h0M662 511h0M662 510h0M662 513h0M662 521h0M663 495h0M663 494h0M663 491h0M663 506h0M663 508h0M664 506h0M664 488h0M664 524h0M664 503h0M664 544h0M664 508h0M665 527h0M665 514h0M665 496h0M665 518h0M665 525h0M666 549h0M666 521h0M666 476h0M666 509h0M666 503h0M667 563h0M667 486h0M667 506h0M667 513h0M667 530h0M667 511h0M668 516h0M668 547h0M668 457h0M668 509h0M668 503h0M669 536h0M669 520h0M669 508h0M669 522h0M669 502h0M670 469h0M670 497h0M670 505h0M670 509h0M670 513h0M670 511h0M671 489h0M671 508h0M671 511h0M671 477h0M671 533h0M672 508h0M672 495h0M672 516h0M672 477h0M672 542h0M673 489h0M673 508h0M673 518h0M673 533h0M673 520h0M674 490h0M674 522h0M674 513h0M674 537h0M674 535h0M675 521h0M675 535h0M675 506h0M675 530h0M675 520h0M676 477h0M676 530h0M676 506h0M676 495h0M676 532h0M677 504h0M677 497h0M677 498h0M677 472h0M677 543h0M678 537h0M678 536h0M678 506h0M678 500h0M679 486h0M679 525h0M679 513h0M679 479h0M679 498h0M679 500h0M680 493h0M680 556h0M680 487h0M680 543h0M680 523h0M681 488h0M681 502h0M681 530h0M681 495h0M681 511h0M682 522h0M682 530h0M682 537h0M682 519h0M682 526h0M682 517h0M683 452h0M683 491h0M683 501h0M683 480h0M683 502h0M684 524h0M684 490h0M684 494h0M684 516h0M684 539h0M685 511h0M685 524h0M685 479h0M685 474h0M685 473h0M685 505h0M686 490h0M686 509h0M686 510h0M686 543h0M686 545h0M687 509h0M687 494h0M687 534h0M687 503h0M687 522h0M688 528h0M688 524h0M688 507h0M688 531h0M688 485h0M688 498h0M689 496h0M689 507h0M689 528h0M689 473h0M689 516h0M690 539h0M690 495h0M690 496h0M690 527h0M690 491h0M691 480h0M691 506h0M691 524h0M691 494h0M691 515h0M691 485h0M692 501h0M692 529h0M692 508h0M692 493h0M692 495h0M693 548h0M693 495h0M693 543h0M693 499h0M693 510h0M694 509h0M694 492h0M694 539h0M694 484h0M694 534h0M694 481h0M695 485h0M695 518h0M695 469h0M695 505h0M695 502h0M696 497h0M696 528h0M696 520h0M696 473h0M696 496h0M697 492h0M697 516h0M697 532h0M697 541h0M697 537h0M697 548h0M698 508h0M698 531h0M698 468h0M698 509h0M698 518h0M699 502h0M699 521h0M699 534h0M699 476h0M699 515h0M699 505h0M700 464h0M700 481h0M700 458h0M700 504h0M701 481h0M701 526h0M701 488h0M701 507h0M701 545h0M702 480h0M702 510h0M702 490h0M702 478h0M702 547h0M702 465h0M703 484h0M703 476h0M703 519h0M703 491h0M703 492h0M704 521h0M704 504h0M704 487h0M704 509h0M704 501h0M705 493h0M705 479h0M705 488h0M705 524h0M705 480h0M705 489h0M706 515h0M706 488h0M706 517h0M706 461h0M706 520h0M707 540h0M707 533h0M707 468h0M707 457h0M707 516h0M708 523h0M708 489h0M708 478h0M708 468h0M708 522h0M708 521h0M709 517h0M709 466h0M709 488h0M709 523h0M709 477h0M710 489h0M710 538h0M710 503h0M710 523h0M711 509h0M711 450h0M711 448h0M711 512h0M711 483h0M711 464h0M712 495h0M712 524h0M712 505h0M712 521h0M713 483h0M713 497h0M713 464h0M713 491h0M713 465h0M714 500h0M714 498h0M714 469h0M714 503h0M714 489h0M714 515h0M715 511h0M715 528h0M715 480h0M715 509h0M715 489h0M716 538h0M716 516h0M716 512h0M716 500h0M716 490h0M717 511h0M717 539h0M717 487h0M717 512h0M717 470h0M718 500h0M718 501h0M718 474h0M718 492h0M718 505h0M719 534h0M719 492h0M719 500h0M719 491h0M719 515h0M720 482h0M720 476h0M720 536h0M720 485h0M720 496h0M720 479h0M721 473h0M721 475h0M721 472h0M721 478h0M721 498h0M722 469h0M722 483h0M722 489h0M722 515h0M722 506h0M723 512h0M723 537h0M723 487h0M723 493h0M723 510h0M723 509h0M724 496h0M724 536h0M724 503h0M724 498h0M724 527h0M725 502h0M725 522h0M725 495h0M725 527h0M725 459h0M726 511h0M726 506h0M726 530h0M726 499h0M726 498h0M726 515h0M727 473h0M727 524h0M727 506h0M727 517h0M727 500h0M728 498h0M728 492h0M728 526h0M728 469h0M728 473h0M729 498h0M729 491h0M729 529h0M729 477h0M729 474h0M729 503h0M730 525h0M730 491h0M730 500h0M730 505h0M730 483h0M731 509h0M731 497h0M731 485h0M731 458h0M731 513h0M732 493h0M732 497h0M732 496h0M732 472h0M732 515h0M732 512h0M733 483h0M733 476h0M733 509h0M733 499h0M733 518h0M734 482h0M734 497h0M734 471h0M734 481h0M734 484h0M735 519h0M735 517h0M735 559h0M735 533h0M735 503h0M735 516h0M736 525h0M736 519h0M736 516h0M736 518h0M736 491h0M737 497h0M737 522h0M737 517h0M737 524h0M737 471h0M738 517h0M738 520h0M738 504h0M738 494h0M738 490h0M738 512h0M739 535h0M739 497h0M739 476h0M739 522h0M739 514h0M740 512h0M740 515h0M740 491h0M740 465h0M740 531h0M741 510h0M741 568h0M741 506h0M741 500h0M741 516h0M741 501h0M742 558h0M742 474h0M742 493h0M742 511h0M742 486h0M743 517h0M743 526h0M743 531h0M743 544h0M743 510h0M744 512h0M744 477h0M744 513h0M744 517h0M744 503h0M744 514h0M745 505h0M745 500h0M745 522h0M745 510h0M745 495h0M746 510h0M746 548h0M746 526h0M746 529h0M746 487h0M747 502h0M747 492h0M747 495h0M747 513h0M748 525h0M748 502h0M748 505h0M748 492h0M748 531h0M749 525h0M749 469h0M749 497h0M749 522h0M750 532h0M750 492h0M750 519h0M750 511h0M750 527h0M751 492h0M751 524h0M751 488h0M751 506h0M751 482h0M752 535h0M752 502h0M752 461h0M752 506h0M752 532h0M753 478h0M753 514h0M753 493h0M753 476h0M753 522h0M754 503h0M754 487h0M754 490h0M755 509h0M755 479h0M755 547h0M755 510h0M755 524h0M756 499h0M756 547h0M756 476h0M756 466h0M756 492h0M756 479h0M757 488h0M757 524h0M757 489h0M757 525h0M757 505h0M758 527h0M758 494h0M758 557h0M758 506h0M758 508h0M759 523h0M759 498h0M759 530h0M759 488h0M759 469h0M759 515h0M760 538h0M760 556h0M760 513h0M760 502h0M760 528h0M761 495h0M761 535h0M761 523h0M761 532h0M761 520h0M762 496h0M762 518h0M762 502h0M762 483h0M762 491h0M763 523h0M763 510h0M763 534h0M763 480h0M764 499h0M764 538h0M764 541h0M764 539h0M764 497h0M764 517h0M765 551h0M765 500h0M765 507h0M765 475h0M765 496h0M766 511h0M766 513h0M766 530h0M766 526h0M766 540h0M767 483h0M767 513h0M767 504h0M767 537h0M767 500h0M767 530h0M768 497h0M768 518h0M768 483h0M768 496h0M768 536h0M769 496h0M769 520h0M769 477h0M769 489h0M769 528h0M770 543h0M770 482h0M770 526h0M770 530h0M770 497h0M771 489h0M771 501h0M771 478h0M771 511h0M771 518h0M772 498h0M772 472h0M772 562h0M772 509h0M772 474h0M773 524h0M773 485h0M773 514h0M773 519h0M773 505h0M774 530h0M774 487h0M774 471h0M774 498h0M774 517h0M775 457h0M775 556h0M775 483h0M775 476h0M775 513h0M776 508h0M776 504h0M776 558h0M776 489h0M776 531h0M776 541h0M777 502h0M777 503h0M777 495h0M777 500h0M778 494h0M778 532h0M778 508h0M778 528h0M779 544h0M779 491h0M779 480h0M779 503h0M779 510h0M779 536h0M780 537h0M780 509h0M780 493h0M780 500h0M780 528h0M781 519h0M781 525h0M781 504h0M781 511h0M781 514h0M782 503h0M782 544h0M782 525h0M782 561h0M782 486h0M782 497h0M783 523h0M783 537h0M783 552h0M783 515h0M784 501h0M784 529h0M784 553h0M784 528h0M784 474h0M785 520h0M785 486h0M785 547h0M785 494h0M785 493h0M785 544h0M786 545h0M786 521h0M786 502h0M786 524h0M786 523h0M787 530h0M787 541h0M787 485h0M787 540h0M787 468h0M788 540h0M788 534h0M788 518h0M788 473h0M788 498h0M789 499h0M789 506h0M789 501h0M789 510h0M789 491h0M790 484h0M790 509h0M790 559h0M790 529h0M790 490h0M791 522h0M791 486h0M791 488h0M791 519h0M791 523h0M791 511h0M792 501h0M792 534h0M792 473h0M792 503h0M792 496h0M793 524h0M793 525h0M793 499h0M793 564h0M794 510h0M794 508h0M794 471h0M794 496h0M794 498h0M794 551h0M795 541h0M795 499h0M795 533h0M795 492h0M795 508h0M796 524h0M796 558h0M796 527h0M796 547h0M796 525h0M797 476h0M797 530h0M797 468h0M797 519h0M797 511h0M797 501h0M798 520h0M798 511h0M798 483h0M798 486h0M798 503h0M799 470h0M799 516h0M799 481h0M799 507h0M799 501h0M800 536h0M800 499h0M800 507h0M800 526h0M800 566h0M800 555h0M801 525h0M801 548h0M801 518h0M801 502h0M801 524h0M802 480h0M802 528h0M802 543h0M802 497h0M802 500h0M803 536h0M803 524h0M803 502h0M803 519h0M803 525h0M804 505h0M804 491h0M804 496h0M804 497h0M804 537h0M805 477h0M805 507h0M805 515h0M805 537h0M805 522h0M806 517h0M806 499h0M806 458h0M806 531h0M806 514h0M807 517h0M807 564h0M807 491h0M807 500h0M807 554h0M808 520h0M808 500h0M808 499h0M808 548h0M808 509h0M809 505h0M809 524h0M809 515h0M809 541h0M809 497h0M809 533h0M810 518h0M810 543h0M810 496h0M810 478h0M810 516h0M811 561h0M811 496h0M811 520h0M811 552h0M811 476h0M812 528h0M812 530h0M812 493h0M812 491h0M812 548h0M813 480h0M813 540h0M813 488h0M813 523h0M813 522h0M814 533h0M814 514h0M814 515h0M814 481h0M814 484h0M815 475h0M815 530h0M815 509h0M815 500h0M815 548h0M815 550h0M816 556h0M816 543h0M816 536h0M816 518h0M816 524h0M817 507h0M817 524h0M817 510h0M817 516h0M817 481h0M818 493h0M818 479h0M818 536h0M818 523h0M818 510h0M818 520h0M819 522h0M819 512h0M819 520h0M819 503h0M819 509h0M820 470h0M820 524h0M820 486h0M820 494h0M820 544h0M821 488h0M821 485h0M821 472h0M821 494h0M821 522h0M821 511h0M822 511h0M822 494h0M822 490h0M822 499h0M822 487h0M823 510h0M823 483h0M823 512h0M823 514h0M823 502h0M824 501h0M824 532h0M824 535h0M824 473h0M824 530h0M824 502h0M825 513h0M825 504h0M825 506h0M825 523h0M825 512h0M826 503h0M826 490h0M826 505h0M826 478h0M826 522h0M827 495h0M827 478h0M827 506h0M827 492h0M827 505h0M827 511h0M828 488h0M828 499h0M828 495h0M828 505h0M828 474h0M829 516h0M829 499h0M829 510h0M829 497h0M829 470h0M829 496h0M830 501h0M830 477h0M830 519h0M830 535h0M830 517h0M831 533h0M831 486h0M831 478h0M831 494h0M831 511h0M832 546h0M832 526h0M832 514h0M832 499h0M832 520h0M833 485h0M833 521h0M833 524h0M833 526h0M833 508h0M834 533h0M834 496h0M834 487h0M834 505h0M834 501h0M835 497h0M835 509h0M835 498h0M835 530h0M835 533h0M835 504h0M836 493h0M836 491h0M836 530h0M836 509h0M836 457h0M837 552h0M837 521h0M837 487h0M837 506h0M837 536h0M838 508h0M838 499h0M838 513h0M838 539h0M838 548h0M838 545h0M839 517h0M839 524h0M839 516h0M839 481h0M839 515h0M840 517h0M840 481h0M840 487h0M840 512h0M840 554h0M841 537h0M841 493h0M841 512h0M841 522h0M841 511h0M841 498h0M842 506h0M842 531h0M842 515h0M842 498h0M842 514h0M843 495h0M843 504h0M843 517h0M843 539h0M843 536h0M844 507h0M844 520h0M844 473h0M844 523h0M844 482h0M844 513h0M845 500h0M845 496h0M845 536h0M845 544h0M845 516h0M846 540h0M846 539h0M846 547h0M846 538h0M846 528h0M847 500h0M847 528h0M847 498h0M847 536h0M847 491h0M847 506h0M848 493h0M848 483h0M848 522h0M848 500h0M848 495h0M849 522h0M849 491h0M849 519h0M849 529h0M849 495h0M850 496h0M850 480h0M850 489h0M850 531h0M850 499h0M850 508h0M851 476h0M851 514h0M851 529h0M851 493h0M851 508h0M852 517h0M852 491h0M852 498h0M852 495h0M852 492h0M853 480h0M853 516h0M853 513h0M853 540h0M853 489h0M853 510h0M854 517h0M854 543h0M854 538h0M854 504h0M854 554h0M855 518h0M855 467h0M855 530h0M855 507h0M855 499h0M856 502h0M856 512h0M856 506h0M856 465h0M856 523h0M856 524h0M857 507h0M857 494h0M857 511h0M857 479h0M857 469h0M858 501h0M858 496h0M858 491h0M858 519h0M858 506h0M859 493h0M859 502h0M859 482h0M859 539h0M859 538h0M859 504h0M860 482h0M860 504h0M860 529h0M860 501h0M861 495h0M861 492h0M861 476h0M861 500h0M861 498h0M862 476h0M862 531h0M862 546h0M862 512h0M862 532h0M862 485h0M863 528h0M863 499h0M863 491h0M863 525h0M864 506h0M864 510h0M864 494h0M864 513h0M864 557h0M865 521h0M865 509h0M865 484h0M865 494h0M865 513h0M865 515h0M866 505h0M866 490h0M866 474h0M866 528h0M866 469h0M867 484h0M867 502h0M867 523h0M867 511h0M867 504h0M868 501h0M868 465h0M868 510h0M868 477h0M868 502h0M868 519h0M869 513h0M869 509h0M869 516h0M869 525h0M869 503h0M870 490h0M870 531h0M870 543h0M870 485h0M870 495h0M871 527h0M871 519h0M871 506h0M871 517h0M871 509h0M871 502h0M872 537h0M872 483h0M872 528h0M872 507h0M872 520h0M873 528h0M873 520h0M873 468h0M873 483h0M873 522h0M874 519h0M874 488h0M874 525h0M874 504h0M874 539h0M875 507h0M875 522h0M875 502h0M875 497h0M875 479h0M876 517h0M876 502h0M876 533h0M876 475h0M876 530h0M877 494h0M877 496h0M877 529h0M877 510h0M877 526h0M877 512h0M878 523h0M878 550h0M878 510h0M878 500h0M878 482h0M879 487h0M879 481h0M879 499h0M879 510h0M879 484h0M880 513h0M880 515h0M880 519h0M880 504h0M880 485h0M880 509h0M881 476h0M881 491h0M881 514h0M881 523h0M881 487h0M882 499h0M882 498h0M882 529h0M882 490h0M882 505h0M883 482h0M883 520h0M883 505h0M883 522h0M883 547h0M883 495h0M884 506h0M884 475h0M884 513h0M884 523h0M884 501h0M885 506h0M885 515h0M885 541h0M885 523h0M885 513h0M886 483h0M886 494h0M886 510h0M886 476h0M886 463h0M886 497h0M887 510h0M887 469h0M887 504h0M887 518h0M887 488h0M888 488h0M888 523h0M888 530h0M888 516h0M888 510h0M889 515h0M889 500h0M889 516h0M889 503h0M889 519h0M890 500h0M890 498h0M890 538h0M890 496h0M890 480h0M891 471h0M891 486h0M891 525h0M891 511h0M891 532h0M892 491h0M892 517h0M892 512h0M892 476h0M892 496h0M892 494h0M893 488h0M893 522h0M893 538h0M893 492h0M893 533h0M894 512h0M894 509h0M894 515h0M894 519h0M894 518h0M895 543h0M895 499h0M895 498h0M895 535h0M895 487h0M896 483h0M896 545h0M896 514h0M896 500h0M896 497h0M897 489h0M897 490h0M897 530h0M897 497h0M897 516h0M897 515h0M898 548h0M898 511h0M898 522h0M898 500h0M898 505h0M899 509h0M899 497h0M899 514h0M899 506h0M900 471h0M900 511h0M900 463h0M900 517h0M900 547h0M900 538h0M901 531h0M901 537h0M901 507h0M901 530h0M901 489h0M902 507h0M902 510h0M902 530h0M902 491h0M903 530h0M903 506h0M903 541h0M903 535h0M903 540h0M904 475h0M904 465h0M904 556h0M904 506h0M904 527h0M905 481h0M905 508h0M905 496h0M905 518h0M905 538h0M906 501h0M906 546h0M906 527h0M906 485h0M906 512h0M907 502h0M907 472h0M907 506h0M907 458h0M907 465h0M908 490h0M908 518h0M908 536h0M908 479h0M908 481h0M909 503h0M909 512h0M909 481h0M910 516h0M910 504h0M910 505h0M910 480h0M910 485h0M911 540h0M911 533h0M911 493h0M911 496h0M912 490h0M912 531h0M912 516h0M912 504h0M912 519h0M912 472h0M913 526h0M913 544h0M913 532h0M913 476h0M913 521h0M914 525h0M914 532h0M914 501h0M914 509h0M914 478h0M915 512h0M915 532h0M915 484h0M915 486h0M915 523h0M915 509h0M916 550h0M916 533h0M916 512h0M916 480h0M916 488h0M917 546h0M917 498h0M917 502h0M917 493h0M917 519h0M918 481h0M918 506h0M918 535h0M918 528h0M918 524h0M918 558h0M919 501h0M919 484h0M919 506h0M919 489h0M919 474h0M920 520h0M920 509h0M920 518h0M920 499h0M921 511h0M921 490h0M921 523h0M921 554h0M921 487h0M921 543h0M922 519h0M922 522h0M922 504h0M922 511h0M923 557h0M923 497h0M923 520h0M923 532h0M923 558h0M924 497h0M924 517h0M924 528h0M924 530h0M924 460h0M924 477h0M925 477h0M925 503h0M925 552h0M925 530h0M925 509h0M926 526h0M926 547h0M926 498h0M926 476h0M926 504h0M927 498h0M927 503h0M927 493h0M927 533h0M927 502h0M927 529h0M928 496h0M928 463h0M928 519h0M928 514h0M928 481h0M929 545h0M929 493h0M929 499h0M929 551h0M929 501h0M930 526h0M930 523h0M930 522h0M930 476h0M930 481h0M931 479h0M931 502h0M931 504h0M931 519h0M931 516h0M932 510h0M932 516h0M932 525h0M932 469h0M932 498h0M933 531h0M933 508h0M933 527h0M933 509h0M933 513h0M933 483h0M934 538h0M934 530h0M934 516h0M934 523h0M934 533h0M935 501h0M935 531h0M935 511h0M935 535h0M935 530h0M936 508h0M936 520h0M936 510h0M936 542h0M936 504h0M936 512h0M937 518h0M937 495h0M937 484h0M937 510h0M938 514h0M938 527h0M938 488h0M938 529h0M938 496h0M939 492h0M939 516h0M939 498h0M939 469h0M939 507h0M939 512h0M940 521h0M940 516h0M940 530h0M940 465h0M940 555h0M941 523h0M941 477h0M941 486h0M941 520h0M941 526h0M942 533h0M942 513h0M942 527h0M942 553h0M942 531h0M942 483h0M943 532h0M943 515h0M943 502h0M943 516h0M943 520h0M944 471h0M944 521h0M944 506h0M944 491h0M944 504h0M945 490h0M945 499h0M945 481h0M945 488h0M945 505h0M945 514h0M946 536h0M946 520h0M946 547h0M946 516h0M947 541h0M947 504h0M947 489h0M947 543h0M948 504h0M948 484h0M948 477h0M948 486h0M948 506h0M948 483h0M949 534h0M949 536h0M949 542h0M949 533h0M949 511h0M950 508h0M950 477h0M950 493h0M950 518h0M950 528h0M951 484h0M951 486h0M951 502h0M951 474h0M951 515h0M951 525h0M952 517h0M952 509h0M952 476h0M952 518h0M952 523h0M953 511h0M953 510h0M953 496h0M953 528h0M953 487h0M954 513h0M954 525h0M954 533h0M954 493h0M954 482h0M954 535h0M955 514h0M955 530h0M955 520h0M955 535h0M955 528h0M956 502h0M956 499h0M956 513h0M956 501h0M956 466h0M957 545h0M957 503h0M957 529h0M957 482h0M957 535h0M957 523h0M958 491h0M958 515h0M958 513h0M958 523h0M958 509h0M959 509h0M959 501h0M959 519h0M959 479h0M959 520h0M959 498h0M960 496h0M960 478h0M960 475h0M960 513h0M960 509h0M961 510h0M961 525h0M961 533h0M961 502h0M961 490h0M962 478h0M962 513h0M962 502h0M962 492h0M962 521h0M962 504h0M963 534h0M963 532h0M963 523h0M963 552h0M964 504h0M964 503h0M964 519h0M964 490h0M964 484h0M965 485h0M965 486h0M965 529h0M965 537h0M965 494h0M965 511h0M966 544h0M966 495h0M966 496h0M966 513h0M966 523h0M967 493h0M967 522h0M967 487h0M967 516h0M967 512h0M968 512h0M968 504h0M968 528h0M968 529h0M968 521h0M968 543h0M969 491h0M969 512h0M969 484h0M969 534h0M969 549h0M970 483h0M970 487h0M970 482h0M970 524h0M970 518h0M971 474h0M971 510h0M971 498h0M971 492h0M971 526h0M972 495h0M972 522h0M972 533h0M972 480h0M972 501h0M973 537h0M973 486h0M973 514h0M973 509h0M974 533h0M974 489h0M974 484h0M974 527h0M974 501h0M974 485h0M975 505h0M975 542h0M975 525h0M975 508h0M975 531h0M976 544h0M976 481h0M976 543h0M976 539h0M976 528h0M977 554h0M977 524h0M977 503h0M977 508h0M977 537h0M977 531h0M978 513h0M978 515h0M978 523h0M978 506h0M978 518h0M979 504h0M979 485h0M979 555h0M979 511h0M979 537h0M980 519h0M980 493h0M980 533h0M980 520h0M980 517h0M980 491h0M981 485h0M981 542h0M981 500h0M981 519h0M981 471h0M982 528h0M982 518h0M982 509h0M982 506h0M982 519h0M983 512h0M983 496h0M983 464h0M983 492h0M983 522h0M983 539h0M984 539h0M984 477h0M984 518h0M984 501h0M984 500h0M985 523h0M985 533h0M985 503h0M985 471h0M985 512h0M986 520h0M986 539h0M986 511h0M986 541h0M986 498h0M986 465h0M987 525h0M987 543h0M987 535h0M987 464h0M987 500h0M988 528h0M988 537h0M988 514h0M988 513h0M988 506h0M989 486h0M989 480h0M989 512h0M989 525h0M989 555h0M990 534h0M990 522h0M990 542h0M990 487h0M991 496h0M991 537h0M991 511h0M991 518h0M991 484h0M992 466h0M992 467h0M992 534h0M992 496h0M992 538h0M993 525h0M993 494h0M993 510h0M993 492h0M993 523h0M994 491h0M994 507h0M994 486h0M994 509h0M994 535h0M995 498h0M995 524h0M995 520h0M995 555h0M995 552h0M995 545h0M996 533h0M996 530h0M996 494h0M996 527h0M996 526h0M997 507h0M997 505h0M997 467h0M997 526h0M997 514h0M998 516h0M998 490h0M998 482h0M998 496h0M998 535h0M998 524h0M999 476h0M999 514h0M999 507h0M999 520h0M999 498h0M1000 496h0M1000 486h0M1000 514h0M1000 505h0M1000 523h0M1001 550h0M1001 513h0M1001 535h0M1001 524h0M1001 521h0M1001 531h0M1002 509h0M1002 500h0M1002 498h0M1002 501h0M1003 510h0M1003 473h0M1003 507h0M1003 522h0M1003 495h0M1004 519h0M1004 507h0M1004 499h0M1004 524h0M1004 527h0M1004 534h0M1005 474h0M1005 515h0M1005 527h0M1005 505h0M1005 523h0M1006 540h0M1006 526h0M1006 524h0M1006 533h0M1006 493h0M1007 489h0M1007 547h0M1007 531h0M1007 485h0M1007 510h0M1008 508h0M1008 498h0M1008 543h0M1008 506h0M1008 512h0M1009 500h0M1009 523h0M1009 526h0M1009 503h0M1009 532h0M1010 521h0M1010 468h0M1010 515h0M1010 530h0M1010 538h0M1010 518h0M1011 534h0M1011 512h0M1011 526h0M1011 492h0M1012 497h0M1012 485h0M1012 488h0M1012 490h0M1012 554h0M1013 533h0M1013 545h0M1013 500h0M1013 553h0M1013 503h0M1013 539h0M1014 479h0M1014 538h0M1014 501h0M1014 490h0M1014 512h0M1015 524h0M1015 506h0M1015 510h0M1015 526h0M1015 511h0M1016 505h0M1016 484h0M1016 521h0M1016 501h0M1016 540h0M1016 531h0M1017 515h0M1017 493h0M1017 523h0M1017 494h0M1017 490h0M1018 486h0M1018 528h0M1018 536h0M1018 504h0M1018 482h0M1019 483h0M1019 496h0M1019 535h0M1019 501h0M1019 514h0M1019 502h0M1020 541h0M1020 515h0M1020 488h0M1020 518h0M1020 492h0M1021 517h0M1021 496h0M1021 514h0M1021 519h0M1021 495h0M1021 476h0M1022 533h0M1022 508h0M1022 521h0M1022 527h0M1022 511h0M1023 496h0M1023 506h0M1023 472h0M1023 529h0M1023 505h0M1024 538h0M1024 507h0M1024 489h0M1024 496h0M1024 479h0M1024 531h0M1025 521h0M1025 529h0M1025 530h0M1025 540h0M1025 556h0M1026 521h0M1026 466h0M1026 536h0M1026 542h0M1026 518h0M1027 532h0M1027 528h0M1027 510h0M1027 512h0M1027 468h0M1027 526h0M1028 535h0M1028 534h0M1028 491h0M1028 540h0M1029 481h0M1029 536h0M1029 568h0M1029 530h0M1029 528h0M1030 540h0M1030 512h0M1030 500h0M1030 517h0M1030 474h0M1030 533h0M1031 518h0M1031 482h0M1031 516h0M1031 472h0M1031 478h0M1032 495h0M1032 523h0M1032 537h0M1032 513h0M1032 496h0M1033 509h0M1033 526h0M1033 515h0M1033 536h0M1033 512h0M1033 510h0M1034 484h0M1034 493h0M1034 509h0M1034 527h0M1034 520h0M1035 546h0M1035 537h0M1035 518h0M1036 504h0M1036 530h0M1036 564h0M1036 506h0M1036 524h0M1036 513h0M1037 516h0M1037 541h0M1037 521h0M1037 510h0M1037 484h0M1038 528h0M1038 562h0M1038 524h0M1038 540h0M1038 542h0M1039 519h0M1039 503h0M1039 538h0M1039 511h0M1039 535h0M1039 499h0M1040 507h0M1040 536h0M1040 538h0M1040 510h0M1040 539h0M1041 535h0M1041 516h0M1041 521h0M1041 562h0M1042 548h0M1042 563h0M1042 529h0M1042 536h0M1042 547h0M1042 513h0M1043 549h0M1043 514h0M1043 533h0M1043 546h0M1043 572h0M1044 557h0M1044 514h0M1044 537h0M1044 511h0M1044 548h0M1045 541h0M1045 559h0M1045 557h0M1045 568h0M1045 542h0M1045 528h0M1046 513h0M1046 544h0M1046 522h0M1046 552h0M1046 562h0M1047 518h0M1047 525h0M1047 522h0M1047 548h0M1047 564h0M1048 520h0M1048 545h0M1048 509h0M1048 576h0M1048 569h0M1048 560h0M1049 576h0M1049 562h0M1049 563h0M1049 545h0M1049 546h0M1050 548h0M1050 529h0M1050 515h0M1050 546h0M1050 520h0M1051 556h0M1051 547h0M1051 548h0M1051 559h0M1051 528h0M1052 556h0M1052 508h0M1052 532h0M1052 504h0M1052 537h0M1053 519h0M1053 544h0M1053 534h0M1053 542h0M1053 529h0M1054 529h0M1054 500h0M1054 567h0M1054 516h0M1054 499h0M1054 510h0M1055 533h0M1055 525h0M1055 553h0M1055 543h0M1055 568h0M1056 541h0M1056 555h0M1056 503h0M1056 529h0M1057 542h0M1057 527h0M1057 564h0M1057 541h0M1057 552h0M1057 554h0M1058 516h0M1058 524h0M1058 517h0M1058 515h0M1058 525h0M1059 548h0M1059 517h0M1059 528h0M1059 524h0M1059 536h0M1060 502h0M1060 544h0M1060 570h0M1060 519h0M1060 524h0M1060 523h0M1061 521h0M1061 547h0M1061 544h0M1061 564h0M1061 518h0M1062 526h0M1062 554h0M1062 540h0M1062 552h0M1062 532h0M1063 525h0M1063 575h0M1063 543h0M1063 540h0M1063 570h0M1063 557h0M1064 515h0M1064 529h0M1064 520h0M1064 545h0M1064 537h0M1065 525h0M1065 521h0M1065 526h0M1065 550h0M1065 532h0M1066 542h0M1066 552h0M1066 553h0M1066 569h0M1066 539h0M1066 555h0M1067 544h0M1067 509h0M1067 515h0M1067 502h0M1067 518h0M1068 520h0M1068 529h0M1068 515h0M1068 531h0M1068 525h0M1069 519h0M1069 533h0M1069 500h0M1069 567h0M1069 557h0M1069 523h0M1070 534h0M1070 546h0M1070 527h0M1070 542h0M1070 539h0M1071 529h0M1071 513h0M1071 519h0M1071 565h0M1071 547h0M1072 535h0M1072 555h0M1072 509h0M1072 554h0M1072 550h0M1072 567h0M1073 538h0M1073 557h0M1073 564h0M1073 558h0M1073 553h0M1074 535h0M1074 554h0M1074 539h0M1074 526h0M1074 510h0M1075 565h0M1075 533h0M1075 561h0M1075 569h0M1075 517h0M1075 559h0M1076 565h0M1076 528h0M1076 542h0M1076 535h0M1076 530h0M1077 581h0M1077 547h0M1077 536h0M1077 577h0M1077 542h0M1078 533h0M1078 527h0M1078 571h0M1078 517h0M1078 543h0M1078 577h0M1079 532h0M1079 565h0M1079 529h0M1079 556h0M1079 537h0M1080 528h0M1080 538h0M1080 559h0M1080 552h0M1080 531h0M1081 535h0M1081 553h0M1081 533h0M1081 519h0M1081 575h0M1081 554h0M1082 548h0M1082 531h0M1082 565h0M1082 507h0M1083 533h0M1083 556h0M1083 558h0M1083 523h0M1083 557h0M1084 557h0M1084 553h0M1084 535h0M1084 529h0M1084 539h0M1084 552h0M1085 582h0M1085 552h0M1085 577h0M1085 559h0M1085 574h0M1086 578h0M1086 552h0M1086 555h0M1086 533h0M1086 567h0M1087 576h0M1087 544h0M1087 569h0M1087 574h0M1087 567h0M1088 527h0M1088 512h0M1088 566h0M1088 563h0M1088 600h0M1089 556h0M1089 534h0M1089 558h0M1089 570h0M1089 578h0M1090 556h0M1090 580h0M1090 537h0M1090 569h0M1090 567h0M1091 542h0M1091 554h0M1091 553h0M1091 569h0M1092 545h0M1092 533h0M1092 543h0M1092 529h0M1092 521h0M1092 537h0M1093 541h0M1093 573h0M1093 516h0M1093 502h0M1093 554h0M1094 538h0M1094 549h0M1094 544h0M1094 555h0M1095 533h0M1095 547h0M1095 554h0M1095 519h0M1095 529h0M1095 553h0M1096 566h0M1096 515h0M1096 520h0M1096 554h0M1096 564h0M1097 532h0M1097 547h0M1097 580h0M1097 551h0M1097 555h0M1098 556h0M1098 549h0M1098 521h0M1098 552h0M1098 544h0M1098 567h0M1099 534h0M1099 511h0M1099 509h0M1099 542h0M1099 532h0M1100 535h0M1100 517h0M1100 553h0M1100 559h0M1100 564h0M1101 553h0M1101 549h0M1101 532h0M1101 558h0M1101 547h0M1101 526h0M1102 572h0M1102 547h0M1102 559h0M1102 578h0M1103 580h0M1103 526h0M1103 527h0M1103 529h0M1103 533h0M1104 543h0M1104 576h0M1104 546h0M1104 555h0M1104 520h0M1104 542h0M1105 551h0M1105 534h0M1105 548h0M1105 544h0M1106 527h0M1106 523h0M1106 547h0M1106 534h0M1106 504h0M1107 552h0M1107 529h0M1107 517h0M1107 526h0M1107 515h0M1107 553h0M1108 534h0M1108 542h0M1108 539h0M1108 559h0M1108 565h0M1109 510h0M1109 569h0M1109 515h0M1109 529h0M1109 576h0M1110 529h0M1110 587h0M1110 533h0M1110 539h0M1110 521h0M1110 543h0M1111 572h0M1111 546h0M1111 530h0M1111 550h0M1112 516h0M1112 568h0M1112 560h0M1112 546h0M1112 549h0M1113 567h0M1113 553h0M1113 532h0M1113 543h0M1113 556h0M1113 498h0M1114 530h0M1114 553h0M1114 523h0M1114 599h0M1115 576h0M1115 553h0M1115 573h0M1115 543h0M1115 548h0M1116 539h0M1116 503h0M1116 514h0M1116 579h0M1116 550h0M1116 526h0M1117 521h0M1117 537h0M1117 571h0M1117 591h0M1117 534h0M1118 531h0M1118 532h0M1118 529h0M1118 518h0M1118 540h0M1119 560h0M1119 534h0M1119 573h0M1119 552h0M1119 568h0M1119 537h0M1120 529h0M1120 530h0M1120 577h0M1120 513h0M1120 548h0M1121 544h0M1121 529h0M1121 568h0M1121 585h0M1121 558h0M1122 542h0M1122 552h0M1122 565h0M1122 551h0M1122 528h0M1123 558h0M1123 541h0M1123 545h0M1123 531h0M1123 570h0M1124 569h0M1124 561h0M1124 523h0M1124 581h0M1124 563h0M1125 533h0M1125 551h0M1125 546h0M1125 504h0M1125 528h0M1126 538h0M1126 573h0M1126 548h0M1126 543h0M1126 580h0M1127 547h0M1127 513h0M1127 554h0M1127 542h0M1127 566h0M1128 527h0M1128 570h0M1128 548h0M1128 535h0M1128 536h0M1128 576h0M1129 552h0M1129 530h0M1129 537h0M1129 522h0M1129 557h0M1130 534h0M1130 564h0M1130 562h0M1130 568h0M1130 545h0M1131 511h0M1131 534h0M1131 539h0M1131 514h0M1131 504h0M1131 532h0M1132 557h0M1132 553h0M1132 536h0M1132 537h0M1132 551h0M1133 568h0M1133 538h0M1133 549h0M1133 530h0M1133 541h0M1134 559h0M1134 579h0M1134 502h0M1134 543h0M1134 549h0M1134 512h0M1135 499h0M1135 564h0M1135 549h0M1135 526h0M1135 540h0M1136 516h0M1136 551h0M1136 497h0M1136 530h0M1136 495h0M1137 523h0M1137 522h0M1137 524h0M1137 569h0M1137 515h0M1137 530h0M1138 534h0M1138 536h0M1138 521h0M1138 540h0M1138 558h0M1139 546h0M1139 519h0M1139 563h0M1139 542h0M1139 509h0M1140 538h0M1140 540h0M1140 533h0M1140 576h0M1140 536h0M1141 566h0M1141 546h0M1141 556h0M1141 542h0M1141 520h0M1142 525h0M1142 518h0M1142 543h0M1142 564h0M1142 556h0M1143 525h0M1143 541h0M1143 533h0M1143 570h0M1143 547h0M1144 573h0M1144 514h0M1144 547h0M1144 496h0M1144 559h0M1145 515h0M1145 557h0M1145 556h0M1145 536h0M1145 538h0M1146 551h0M1146 542h0M1146 564h0M1146 552h0M1146 578h0M1146 570h0M1147 540h0M1147 583h0M1147 549h0M1147 574h0M1148 548h0M1148 523h0M1148 555h0M1148 588h0M1148 530h0M1149 543h0M1149 532h0M1149 521h0M1149 531h0M1149 534h0M1149 553h0M1150 530h0M1150 562h0M1150 548h0M1150 567h0M1150 540h0M1151 573h0M1151 531h0M1151 551h0M1151 559h0M1151 572h0M1151 590h0M1152 573h0M1152 556h0M1152 553h0M1152 559h0M1152 555h0M1153 535h0M1153 586h0M1153 569h0M1153 541h0M1153 564h0M1154 538h0M1154 540h0M1154 553h0M1154 561h0M1154 522h0M1154 534h0M1155 564h0M1155 542h0M1155 526h0M1155 585h0M1155 577h0M1156 537h0M1156 554h0M1156 533h0M1156 523h0M1156 530h0M1157 562h0M1157 554h0M1157 541h0M1157 527h0M1157 546h0M1157 515h0M1158 553h0M1158 509h0M1158 573h0M1158 524h0M1158 544h0M1159 549h0M1159 570h0M1159 545h0M1159 565h0M1159 568h0M1160 544h0M1160 517h0M1160 507h0M1160 516h0M1160 563h0M1160 565h0M1161 544h0M1161 522h0M1161 509h0M1161 531h0M1162 516h0M1162 543h0M1162 561h0M1162 525h0M1162 553h0M1163 532h0M1163 557h0M1163 514h0M1163 526h0M1163 540h0M1163 568h0M1164 560h0M1164 555h0M1164 542h0M1164 536h0M1164 546h0M1165 580h0M1165 557h0M1165 561h0M1165 551h0M1165 567h0M1166 522h0M1166 559h0M1166 561h0M1166 554h0M1166 542h0M1166 527h0M1167 554h0M1167 508h0M1167 568h0M1167 587h0M1167 542h0M1168 579h0M1168 555h0M1168 552h0M1168 550h0M1168 582h0M1169 567h0M1169 551h0M1169 559h0M1169 541h0M1169 557h0M1169 509h0M1170 531h0M1170 557h0M1170 588h0M1170 574h0M1170 563h0M1171 566h0M1171 541h0M1171 596h0M1171 578h0M1171 572h0M1172 578h0M1172 550h0M1172 547h0M1172 543h0M1172 546h0M1173 569h0M1173 553h0M1173 545h0M1173 540h0M1173 575h0M1174 599h0M1174 581h0M1174 569h0M1174 565h0M1174 554h0M1175 550h0M1175 540h0M1175 542h0M1175 587h0M1175 520h0M1175 582h0M1176 556h0M1176 597h0M1176 565h0M1176 540h0M1177 562h0M1177 557h0M1177 553h0M1177 565h0M1178 573h0M1178 556h0M1178 530h0M1178 569h0M1178 557h0M1178 552h0M1179 528h0M1179 550h0M1179 557h0M1179 547h0M1179 542h0M1180 570h0M1180 577h0M1180 580h0M1180 567h0M1180 569h0M1181 545h0M1181 534h0M1181 532h0M1181 574h0M1181 549h0M1182 551h0M1182 568h0M1182 560h0M1182 534h0M1182 543h0M1183 534h0M1183 533h0M1183 527h0M1183 575h0M1183 530h0M1184 548h0M1184 565h0M1184 518h0M1184 556h0M1184 520h0M1184 536h0M1185 543h0M1185 535h0M1185 580h0M1185 534h0M1185 536h0M1186 549h0M1186 529h0M1186 557h0M1186 541h0M1186 517h0M1187 529h0M1187 543h0M1187 572h0M1187 576h0M1187 568h0M1187 582h0M1188 554h0M1188 575h0M1188 538h0M1188 540h0M1188 543h0M1189 544h0M1189 550h0M1189 589h0M1189 565h0M1189 516h0M1190 547h0M1190 549h0M1190 555h0M1190 553h0M1190 537h0M1190 605h0M1191 575h0M1191 577h0M1191 538h0M1191 527h0M1191 537h0M1192 556h0M1192 531h0M1192 527h0M1192 511h0M1192 569h0M1193 536h0M1193 519h0M1193 537h0M1193 566h0M1193 544h0M1193 568h0M1194 543h0M1194 529h0M1194 578h0M1194 519h0M1194 537h0M1195 546h0M1195 523h0M1195 533h0M1195 524h0M1196 535h0M1196 543h0M1196 564h0M1196 522h0M1196 521h0M1196 569h0M1197 531h0M1197 535h0M1197 530h0M1197 559h0M1197 561h0M1198 509h0M1198 567h0M1198 495h0M1198 518h0M1198 505h0M1199 508h0M1199 543h0M1199 492h0M1199 518h0M1199 496h0M1199 520h0M1200 539h0M1200 532h0M1200 527h0M1200 536h0M1200 545h0M1201 509h0M1201 514h0M1201 504h0M1201 556h0M1201 548h0M1202 519h0M1202 510h0M1202 516h0M1202 507h0M1202 556h0M1202 534h0M1203 513h0M1203 527h0M1203 550h0M1203 503h0M1203 546h0M1204 532h0M1204 572h0M1204 528h0M1204 541h0M1204 560h0M1205 531h0M1205 522h0M1205 532h0M1205 524h0M1205 508h0M1206 558h0M1206 527h0M1206 540h0M1206 529h0M1206 551h0M1207 524h0M1207 546h0M1207 525h0M1207 522h0M1207 530h0M1208 547h0M1208 561h0M1208 533h0M1208 569h0M1208 562h0M1208 563h0M1209 576h0M1209 561h0M1209 566h0M1209 542h0M1209 532h0M1210 581h0M1210 543h0M1210 541h0M1210 520h0M1210 553h0M1211 546h0M1211 540h0M1211 535h0M1211 548h0M1211 566h0M1211 521h0M1212 595h0M1212 553h0M1212 565h0M1212 540h0M1212 545h0M1213 514h0M1213 535h0M1213 534h0M1213 544h0M1213 540h0M1214 537h0M1214 556h0M1214 539h0M1214 578h0M1214 580h0M1214 550h0M1215 541h0M1215 588h0M1215 514h0M1215 516h0M1215 549h0M1216 557h0M1216 560h0M1216 565h0M1216 576h0M1216 541h0M1216 544h0M1217 541h0M1217 594h0M1217 540h0M1217 527h0M1217 546h0M1218 547h0M1218 573h0M1218 557h0M1218 543h0M1218 559h0M1219 574h0M1219 550h0M1219 546h0M1219 565h0M1219 558h0M1219 545h0M1220 572h0M1220 532h0M1220 520h0M1220 555h0M1220 530h0M1221 549h0M1221 527h0M1221 515h0M1221 529h0M1221 522h0M1222 534h0M1222 536h0M1222 531h0M1222 522h0M1222 572h0M1223 510h0M1223 523h0M1223 552h0M1223 535h0M1223 566h0M1224 558h0M1224 561h0M1224 572h0M1224 568h0M1225 562h0M1225 538h0M1225 531h0M1225 512h0M1225 517h0M1225 556h0M1226 567h0M1226 564h0M1226 535h0M1226 541h0M1226 530h0M1227 563h0M1227 513h0M1227 506h0M1227 555h0M1227 549h0M1228 512h0M1228 523h0M1228 549h0M1228 544h0M1228 543h0M1228 534h0M1229 539h0M1229 521h0M1229 533h0M1229 535h0M1229 520h0M1230 544h0M1230 538h0M1230 511h0M1230 523h0M1230 539h0M1231 541h0M1231 519h0M1231 553h0M1231 549h0M1231 506h0M1231 534h0M1232 547h0M1232 524h0M1232 575h0M1232 553h0M1232 552h0M1233 539h0M1233 538h0M1233 517h0M1233 528h0M1233 506h0M1234 530h0M1234 538h0M1234 523h0M1234 505h0M1234 546h0M1235 565h0M1235 549h0M1235 499h0M1235 547h0M1235 557h0M1236 556h0M1236 542h0M1236 519h0M1236 552h0M1236 498h0M1237 521h0M1237 519h0M1237 550h0M1237 546h0M1237 556h0M1237 572h0M1238 562h0M1238 532h0M1238 516h0M1238 551h0M1238 566h0M1239 524h0M1239 558h0M1239 568h0M1239 518h0M1239 543h0M1240 522h0M1240 547h0M1240 553h0M1240 582h0M1240 527h0M1240 549h0M1241 561h0M1241 555h0M1241 574h0M1241 581h0M1242 555h0M1242 524h0M1242 558h0M1242 537h0M1242 552h0M1243 534h0M1243 564h0M1243 571h0M1243 583h0M1243 543h0M1243 546h0M1244 529h0M1244 563h0M1244 559h0M1244 511h0M1244 548h0M1245 505h0M1245 530h0M1245 558h0M1245 544h0M1245 532h0M1246 527h0M1246 535h0M1246 557h0M1246 537h0M1246 540h0M1246 533h0M1247 575h0M1247 550h0M1247 547h0M1247 551h0M1247 555h0M1248 543h0M1248 529h0M1248 549h0M1248 561h0M1248 541h0M1249 529h0M1249 555h0M1249 511h0M1249 536h0M1249 539h0M1249 532h0M1250 537h0M1250 525h0M1250 545h0M1250 561h0M1250 526h0M1251 514h0M1251 503h0M1251 539h0M1251 526h0M1251 554h0M1252 528h0M1252 539h0M1252 576h0M1252 519h0M1252 530h0M1252 540h0M1253 552h0M1253 546h0M1253 526h0M1253 519h0M1253 537h0M1254 505h0M1254 554h0M1254 570h0M1254 561h0M1254 553h0M1255 529h0M1255 568h0M1255 545h0M1255 523h0M1255 526h0M1255 504h0M1256 547h0M1256 558h0M1256 570h0M1256 541h0M1256 528h0M1257 538h0M1257 550h0M1257 522h0M1257 536h0M1257 539h0M1258 566h0M1258 552h0M1258 568h0M1258 538h0M1258 506h0M1258 534h0M1259 513h0M1259 556h0M1259 534h0M1259 524h0M1259 541h0M1260 525h0M1260 522h0M1260 533h0M1260 511h0M1260 507h0M1261 510h0M1261 506h0M1261 531h0M1261 505h0M1261 504h0M1261 525h0M1262 486h0M1262 516h0M1262 518h0M1262 498h0M1263 522h0M1263 510h0M1263 512h0M1263 529h0M1263 503h0M1264 502h0M1264 529h0M1264 512h0M1264 494h0M1264 528h0M1264 523h0M1265 552h0M1265 497h0M1265 522h0M1265 529h0M1265 524h0M1266 548h0M1266 520h0M1266 540h0M1266 516h0M1266 521h0M1267 538h0M1267 550h0M1267 499h0M1267 540h0M1267 545h0M1267 517h0M1268 556h0M1268 515h0M1268 543h0M1268 532h0M1269 562h0M1269 529h0M1269 535h0M1269 553h0M1269 577h0M1270 546h0M1270 584h0M1270 552h0M1270 537h0M1270 526h0M1270 536h0M1271 535h0M1271 541h0M1271 558h0M1271 545h0M1271 525h0M1272 534h0M1272 527h0M1272 576h0M1272 573h0M1272 555h0M1273 575h0M1273 525h0M1273 536h0M1273 587h0M1273 539h0M1273 561h0M1274 541h0M1274 540h0M1274 530h0M1274 529h0M1274 532h0M1275 550h0M1275 531h0M1275 514h0M1275 552h0M1275 522h0M1276 555h0M1276 577h0M1276 551h0M1276 547h0M1276 515h0M1276 572h0M1277 582h0M1277 539h0M1277 514h0M1277 545h0M1277 550h0M1278 540h0M1278 550h0M1278 588h0M1278 554h0M1278 536h0M1279 553h0M1279 536h0M1279 546h0M1279 527h0M1279 532h0M1280 552h0M1280 521h0M1280 541h0M1280 561h0M1280 555h0M1281 527h0M1281 550h0M1281 543h0M1281 569h0M1281 574h0M1281 553h0M1282 561h0M1282 538h0M1282 557h0M1282 542h0M1282 537h0M1283 542h0M1283 569h0M1283 540h0M1283 571h0M1283 559h0M1284 509h0M1284 528h0M1284 560h0M1284 572h0M1284 562h0M1284 513h0M1285 561h0M1285 552h0M1285 554h0M1285 591h0M1286 557h0M1286 524h0M1286 569h0M1286 555h0M1286 531h0M1287 545h0M1287 562h0M1287 540h0M1287 546h0M1287 547h0M1287 569h0M1288 562h0M1288 556h0M1288 574h0M1288 547h0M1288 572h0M1289 562h0M1289 561h0M1289 576h0M1289 551h0M1289 552h0M1290 526h0M1290 539h0M1290 575h0M1290 558h0M1290 573h0M1290 549h0M1291 565h0M1291 561h0M1291 535h0M1291 555h0M1291 575h0M1292 580h0M1292 571h0M1292 555h0M1292 563h0M1292 596h0M1293 585h0M1293 539h0M1293 558h0M1293 534h0M1293 546h0M1293 560h0M1294 570h0M1294 540h0M1294 564h0M1294 575h0M1294 530h0M1295 557h0M1295 538h0M1295 558h0M1295 561h0M1295 575h0M1296 557h0M1296 578h0M1296 551h0M1296 554h0M1296 543h0M1296 588h0M1297 525h0M1297 576h0M1297 536h0M1297 538h0M1297 550h0M1298 533h0M1298 536h0M1298 569h0M1298 521h0M1299 543h0M1299 598h0M1299 567h0M1299 541h0M1299 549h0M1300 508h0M1300 560h0M1300 529h0M1300 546h0M1300 511h0M1301 543h0M1301 514h0M1301 508h0M1301 561h0M1301 544h0M1302 570h0M1302 556h0M1302 523h0M1302 541h0M1302 559h0M1302 571h0M1303 523h0M1303 526h0" fill="none" stroke="#000" stroke-width="3.80" stroke-linecap="round"/></g>
<rect x="162.4" y="495.2" width="871.0" height="44.6" fill="#ffa500" fill-opacity="0.1" stroke="#ffa500" stroke-opacity="0.1" stroke-width="1.39" clip-path="url(#c2)"/><rect x="1034.7" y="521.6" width="268.8" height="43.4" fill="#ffa500" fill-opacity="0.1" stroke="#ffa500" stroke-opacity="0.1" stroke-width="1.39" clip-path="url(#c2)"/><path d="M162.4 517.5H1033.4" stroke="#ffa500" stroke-width="2.78" stroke-linecap="square" fill="none"/><path d="M1034.7 543.4H1303.5" stroke="#ffa500" stroke-width="2.78" stroke-linecap="square" fill="none"/><rect x="102.1" y="499.0" width="1258.4" height="48.8" fill="#f00" fill-opacity="0.1" stroke="#f00" stroke-opacity="0.1" stroke-width="1.39" clip-path="url(#c2)"/><path d="M105.1 523.0H1360.9" stroke="#f00" stroke-width="2.08" fill="none"/>
<text text-anchor="middle" x="597.6" y="657">59964</text><text text-anchor="middle" x="1167.4" y="637">55111</text>
<path d="M162.0 665.98V380.40" stroke="#800080" stroke-width="2.08" stroke-dasharray="2.083 3.4375" fill="none"/><path d="M1033.0 665.98V380.40" stroke="#800080" stroke-width="2.08" stroke-dasharray="2.083 3.4375" fill="none"/><path d="M1303.0 665.98V380.40" stroke="#800080" stroke-width="2.08" stroke-dasharray="2.083 3.4375" fill="none"/>
<rect x="105.5" y="380.5" width="1380.0" height="286.0" fill="none" stroke="#000" stroke-width="1.11"/><path d="M162.5 666.5v4.86M345.5 666.5v4.86M528.5 666.5v4.86M710.5 666.5v4.86M893.5 666.5v4.86M1076.5 666.5v4.86M1259.5 666.5v4.86M1441.5 666.5v4.86" stroke="#000" stroke-width="1.11" fill="none"/><text x="162.12" y="686.88" text-anchor="middle">0</text><text x="344.87" y="686.88" text-anchor="middle">1000</text><text x="527.62" y="686.88" text-anchor="middle">2000</text><text x="710.37" y="686.88" text-anchor="middle">3000</text><text x="893.12" y="686.88" text-anchor="middle">4000</text><text x="1075.87" y="686.88" text-anchor="middle">5000</text><text x="1258.62" y="686.88" text-anchor="middle">6000</text><text x="1441.37" y="686.88" text-anchor="middle">7000</text><path d="M105.5 629.5h-4.86M105.5 576.5h-4.86M105.5 523.5h-4.86M105.5 471.5h-4.86M105.5 418.5h-4.86" stroke="#000" stroke-width="1.11" fill="none"/><text x="95.4" y="634.15" text-anchor="end">7.13</text><text x="95.4" y="581.40" text-anchor="end">7.14</text><text x="95.4" y="528.65" text-anchor="end">7.15</text><text x="95.4" y="475.90" text-anchor="end">7.16</text><text x="95.4" y="423.15" text-anchor="end">7.17</text><text x="795.05" y="372.05" text-anchor="middle" style="font-size:16.67px">Magnitude Estimates</text>
<rect x="1347.93" y="613.28" width="130.13" height="46.05" rx="2.78" ry="2.78" fill="#fff" fill-opacity="0.8" stroke="#ccc" stroke-opacity="0.8" stroke-width="1.39"/><path transform="translate(.5 .5)" d="M1367 626h0" fill="none" stroke="#ffa500" stroke-width="3.80" stroke-linecap="round"/><path transform="translate(.5 .5)" d="M1367 647h0" fill="none" stroke="#000" stroke-width="3.80" stroke-linecap="round"/><text x="1392.4" y="629.85">Highlighted</text><text x="1392.4" y="650.8">OK</text>
<rect x="1364.71" y="387.35" width="113.35" height="48.05" rx="2.78" ry="2.78" fill="#fff" fill-opacity="0.8" stroke="#ccc" stroke-opacity="0.8" stroke-width="1.39"/><path d="M1370.3 399.04H1398.0" stroke="#ffa500" stroke-width="2.78" stroke-linecap="square" fill="none"/><path d="M1370.3 421.99H1398.0" stroke="#f00" stroke-width="2.08" stroke-linecap="square" fill="none"/><text x="1410.2" y="403.9">mag<tspan dx="-0.9" dy="2.2" style="font-size:9.72px;font-style:italic">OBSID</tspan></text><text x="1409.15" y="426.85">mag</text>
</g>
<g id="p3">
<path d="M105.1 921.5H1485.0M105.1 889.5H1485.0M105.1 856.5H1485.0M105.1 823.5H1485.0M105.1 791.5H1485.0M105.1 758.5H1485.0M105.1 1009.5H1485.0M105.1 983.5H1485.0M105.1 957.5H1485.0" stroke="#b0b0b0" stroke-width="1.11" stroke-dasharray="1.11 1.83" fill="none"/>
<path d="M162.0 954.19V725.40" stroke="#800080" stroke-width="2.08" stroke-dasharray="2.083 3.4375" fill="none"/><path d="M1033.0 954.19V725.40" stroke="#800080" stroke-width="2.08" stroke-dasharray="2.083 3.4375" fill="none"/><path d="M1303.0 954.19V725.40" stroke="#800080" stroke-width="2.08" stroke-dasharray="2.083 3.4375" fill="none"/><path d="M162.0 1010.98V954.49" stroke="#800080" stroke-width="2.08" stroke-dasharray="2.083 3.4375" fill="none"/><path d="M1033.0 1010.98V954.49" stroke="#800080" stroke-width="2.08" stroke-dasharray="2.083 3.4375" fill="none"/><path d="M1303.0 1010.98V954.49" stroke="#800080" stroke-width="2.08" stroke-dasharray="2.083 3.4375" fill="none"/>
<path transform="translate(.5 .5)" d="M1250 889h0M1250 856h0M1250 823h0" fill="none" stroke="#000" stroke-width="3.00" stroke-linecap="round"/>
<g clip-path="url(#c4)"><path transform="translate(.5 .5)" d="M162 1007h0M163 1008h0M163 1007h0M164 1007h0M164 1008h0M165 1007h0M165 1008h0M166 1007h0M166 1008h0M167 1008h0M167 1007h0M168 1007h0M168 1008h0M169 1008h0M169 1007h0M170 1007h0M170 1008h0M171 1008h0M171 1007h0M172 1008h0M172 1007h0M173 1007h0M173 1008h0M174 1007h0M174 1008h0M175 1007h0M175 1008h0M176 1007h0M176 1008h0M177 1007h0M177 1008h0M178 1007h0M178 1008h0M179 1007h0M179 1008h0M180 1008h0M180 1007h0M181 1007h0M181 1008h0M182 1007h0M182 1008h0M183 1008h0M183 1007h0M184 1007h0M184 1008h0M185 1007h0M185 1008h0M186 1007h0M186 1008h0M187 1007h0M187 1008h0M188 1007h0M188 1008h0M189 1007h0M189 1008h0M190 1007h0M190 1008h0M191 1008h0M191 1007h0M192 1007h0M192 1008h0M193 1008h0M193 1007h0M194 1007h0M194 1008h0M195 1008h0M195 1007h0M195 1005h0M196 1007h0M196 1008h0M197 1006h0M197 1008h0M197 1007h0M198 1007h0M198 1008h0M199 1007h0M199 1008h0M200 1008h0M200 1007h0M201 1008h0M201 1007h0M202 1007h0M202 1005h0M202 1008h0M203 1008h0M203 1007h0M204 1008h0M204 1007h0M205 1008h0M205 1007h0M206 1008h0M206 1007h0M206 1006h0M207 1007h0M207 1008h0M208 1007h0M208 1008h0M209 1007h0M209 1008h0M210 1008h0M210 1007h0M211 1007h0M211 1008h0M212 1008h0M212 1007h0M213 1007h0M213 1008h0M214 1007h0M214 1005h0M215 1007h0M215 1008h0M216 1007h0M216 1008h0M217 1007h0M217 1008h0M218 1008h0M218 1007h0M219 1007h0M219 1008h0M220 1007h0M220 1008h0M221 1007h0M221 1008h0M222 1008h0M222 1007h0M223 1008h0M223 1007h0M224 1007h0M224 1008h0M225 1007h0M225 1008h0M226 1007h0M226 1008h0M227 1007h0M227 1008h0M228 1007h0M228 1008h0M229 1008h0M229 1007h0M230 1008h0M230 1007h0M231 1007h0M231 1008h0M232 1008h0M232 1007h0M233 1008h0M233 1007h0M234 1007h0M234 1008h0M235 1007h0M235 1008h0M236 1007h0M236 1008h0M237 1007h0M237 1008h0M238 1008h0M238 1007h0M239 1008h0M239 1007h0M240 1007h0M240 1008h0M241 1007h0M242 1008h0M242 1006h0M242 1007h0M243 1007h0M244 1007h0M244 1008h0M245 1008h0M245 1007h0M246 1007h0M246 1008h0M247 1007h0M247 1008h0M248 1008h0M248 1007h0M249 1007h0M249 1008h0M250 1007h0M250 1008h0M250 1006h0M251 1007h0M252 1007h0M253 1007h0M253 1008h0M254 1007h0M254 1008h0M255 1007h0M255 1006h0M256 1005h0M256 1008h0M256 1007h0M257 1007h0M257 1008h0M258 1008h0M258 1007h0M259 1008h0M259 1007h0M260 1007h0M260 1008h0M261 1007h0M261 1008h0M262 1007h0M262 1008h0M263 1004h0M263 1007h0M263 1008h0M264 1007h0M264 1008h0M265 1007h0M265 1008h0M265 1006h0M266 1008h0M266 1007h0M267 1007h0M267 1008h0M268 1008h0M268 1007h0M268 1006h0M269 1007h0M269 1008h0M270 1008h0M270 1007h0M271 1008h0M271 1007h0M272 1005h0M272 1008h0M272 1007h0M273 1008h0M273 1007h0M274 1008h0M274 1007h0M275 1008h0M275 1007h0M276 1007h0M276 1008h0M277 1007h0M277 1008h0M278 1007h0M278 1008h0M279 1008h0M279 1007h0M280 1007h0M280 1005h0M280 1008h0M281 1008h0M281 1007h0M282 1007h0M283 1007h0M283 1008h0M284 1007h0M284 1008h0M285 1007h0M285 1008h0M286 1007h0M287 1007h0M288 1007h0M288 1004h0M288 1008h0M289 1007h0M289 1008h0M290 1008h0M290 1007h0M291 1007h0M291 1008h0M292 1007h0M292 1008h0M293 1008h0M293 1007h0M294 1008h0M294 1007h0M295 1008h0M295 1007h0M296 1007h0M296 1008h0M297 1007h0M297 1008h0M298 1007h0M298 1008h0M299 1007h0M299 1008h0M300 1007h0M300 1008h0M301 1007h0M301 1008h0M302 1007h0M302 1008h0M303 1007h0M303 1008h0M304 1008h0M304 1007h0M305 1007h0M306 1007h0M306 1006h0M306 1008h0M307 1008h0M307 1007h0M308 1008h0M308 1007h0M309 1007h0M309 1004h0M310 1007h0M310 1008h0M311 1007h0M311 1006h0M311 1008h0M312 1007h0M312 1008h0M313 1008h0M313 1007h0M314 1008h0M314 1007h0M315 1008h0M315 1007h0M316 1007h0M316 1008h0M317 1007h0M317 1008h0M318 1008h0M318 1007h0M319 1007h0M319 1008h0M320 1007h0M321 1007h0M321 1008h0M322 1008h0M322 1007h0M323 1007h0M324 1008h0M324 1007h0M324 1006h0M325 1008h0M325 1007h0M326 1007h0M326 1008h0M327 1008h0M328 1008h0M328 1007h0M329 1007h0M329 1008h0M329 1006h0M330 1007h0M330 1008h0M331 1007h0M332 1008h0M332 1007h0M333 1007h0M334 1007h0M334 1008h0M335 1007h0M335 1008h0M336 1007h0M336 1006h0M336 1008h0M337 1007h0M337 1008h0M338 1008h0M338 1007h0M339 1007h0M339 1008h0M340 1007h0M340 1008h0M341 1008h0M341 1007h0M342 1007h0M342 1008h0M343 1007h0M343 1008h0M344 1007h0M344 1008h0M345 1008h0M345 1007h0M346 1007h0M346 1008h0M347 1007h0M347 1008h0M348 1008h0M348 1007h0M349 1007h0M349 1009h0M349 1008h0M350 1008h0M350 1007h0M351 1007h0M351 1008h0M352 1007h0M352 1008h0M353 1007h0M354 1008h0M354 1007h0M355 1007h0M355 1008h0M356 1007h0M356 1008h0M357 1007h0M358 1007h0M359 1007h0M360 1007h0M360 1008h0M360 1005h0M361 1007h0M361 1008h0M362 1008h0M363 1007h0M363 1008h0M364 1007h0M365 1007h0M365 1008h0M366 1008h0M366 1007h0M367 1004h0M367 1007h0M368 1008h0M368 1007h0M369 1008h0M369 1007h0M370 1007h0M370 1008h0M371 1008h0M371 1007h0M372 1007h0M372 1008h0M373 1007h0M373 1008h0M374 1007h0M374 1008h0M375 1007h0M375 1008h0M376 1007h0M376 1008h0M377 1007h0M377 1008h0M378 1008h0M378 1007h0M379 1008h0M379 1007h0M380 1007h0M380 1008h0M381 1007h0M381 1008h0M382 1007h0M382 1008h0M383 1007h0M383 1008h0M384 1007h0M384 1008h0M385 1007h0M385 1008h0M386 1007h0M386 1008h0M387 1008h0M387 1007h0M388 1007h0M388 1008h0M389 1008h0M389 1007h0M390 1008h0M390 1007h0M391 1007h0M391 1008h0M392 1007h0M392 1008h0M393 1007h0M393 1008h0M394 1007h0M395 1007h0M395 1008h0M396 1007h0M396 1008h0M397 1007h0M398 1007h0M398 1008h0M399 1008h0M399 1007h0M400 1008h0M400 1007h0M401 1008h0M401 1007h0M402 1008h0M402 1007h0M403 1007h0M403 1008h0M404 1007h0M404 1008h0M405 1007h0M405 1008h0M406 1007h0M406 1008h0M407 1008h0M407 1007h0M408 1008h0M408 1007h0M409 1007h0M409 1006h0M409 1008h0M410 1007h0M410 1008h0M411 1007h0M411 1008h0M412 1007h0M412 1008h0M413 1007h0M413 1008h0M414 1006h0M414 1007h0M414 1004h0M415 1007h0M415 1008h0M416 1008h0M416 1007h0M417 1008h0M417 1007h0M418 1007h0M418 1008h0M419 1008h0M419 1007h0M420 1007h0M420 1008h0M421 1007h0M421 1006h0M421 1008h0M422 1008h0M422 1007h0M423 1007h0M423 1008h0M424 1007h0M424 1008h0M425 1007h0M425 1008h0M426 1007h0M426 1005h0M427 1008h0M427 1007h0M428 1005h0M428 1007h0M428 1008h0M429 1008h0M429 1007h0M430 1008h0M430 1007h0M431 1007h0M431 1008h0M432 1007h0M432 1008h0M433 1007h0M434 1007h0M434 1008h0M435 1007h0M435 1008h0M436 1007h0M436 1008h0M437 1007h0M437 1008h0M438 1007h0M438 1008h0M439 1007h0M439 1008h0M440 1008h0M440 1007h0M441 1008h0M441 1007h0M442 1007h0M442 1008h0M443 1008h0M443 1007h0M444 1007h0M444 1008h0M445 1008h0M445 1007h0M446 1008h0M446 1007h0M447 1007h0M447 1008h0M448 1007h0M448 1008h0M449 1007h0M449 1008h0M450 1007h0M450 1008h0M451 1008h0M451 1007h0M452 1007h0M453 1008h0M453 1007h0M454 1008h0M454 1007h0M455 1007h0M456 1007h0M456 1008h0M457 1008h0M457 1007h0M458 1007h0M458 1008h0M459 1005h0M459 1008h0M459 1007h0M460 1006h0M460 1007h0M460 1008h0M461 1008h0M461 1007h0M462 1008h0M462 1007h0M462 1006h0M463 1008h0M463 1007h0M464 1007h0M464 1008h0M465 1007h0M465 1006h0M465 1008h0M466 1008h0M466 1007h0M467 1008h0M467 1007h0M468 1008h0M468 1007h0M469 1007h0M469 1008h0M470 1007h0M470 1008h0M471 1007h0M471 1008h0M472 1007h0M472 1008h0M473 1007h0M473 1006h0M474 1007h0M474 1006h0M474 1008h0M475 1007h0M475 1008h0M476 1007h0M476 1008h0M477 1007h0M477 1008h0M478 1007h0M478 1006h0M478 1008h0M479 1007h0M480 1008h0M480 1007h0M481 1007h0M481 1008h0M482 1007h0M483 1007h0M483 1008h0M484 1007h0M484 1008h0M485 1007h0M485 1008h0M486 1008h0M486 1007h0M487 1008h0M487 1007h0M488 1007h0M488 1008h0M489 1007h0M489 1008h0M490 1007h0M490 1008h0M491 1007h0M491 1008h0M492 1007h0M492 1008h0M493 1007h0M493 1008h0M494 1007h0M495 1007h0M495 1008h0M496 1008h0M497 1007h0M497 1008h0M498 1007h0M498 1008h0M499 1002h0M499 1007h0M499 1008h0M500 1005h0M500 1008h0M500 1007h0M501 1007h0M502 1007h0M502 1008h0M503 1008h0M503 1006h0M503 1007h0M504 1007h0M504 1008h0M505 1007h0M505 1008h0M506 1007h0M507 1008h0M507 1006h0M507 1007h0M508 1007h0M509 1007h0M509 1008h0M510 1008h0M510 1007h0M510 1006h0M511 1007h0M512 1007h0M512 1008h0M512 1006h0M513 1007h0M513 1008h0M513 1006h0M514 1007h0M515 1007h0M515 1008h0M516 1007h0M516 1008h0M517 1008h0M518 1007h0M518 1008h0M519 1007h0M519 1008h0M520 1007h0M520 1008h0M521 1006h0M521 1008h0M522 1007h0M522 1008h0M523 1008h0M523 1007h0M524 1007h0M524 1008h0M525 1007h0M525 1008h0M526 1008h0M526 1007h0M527 1008h0M527 1007h0M528 1007h0M528 1008h0M529 1007h0M529 1008h0M530 1007h0M530 1008h0M531 1007h0M531 1008h0M532 1006h0M532 1007h0M532 1008h0M533 1007h0M533 1008h0M534 1007h0M534 1008h0M535 1007h0M535 1008h0M536 1008h0M536 1007h0M537 1008h0M537 1007h0M537 1005h0M538 1007h0M538 1008h0M539 1007h0M539 1008h0M540 1008h0M540 1007h0M541 1008h0M541 1006h0M542 1008h0M542 1007h0M543 1007h0M543 1006h0M544 1007h0M544 1006h0M544 1008h0M545 1007h0M545 1008h0M546 1007h0M546 1008h0M547 1007h0M547 1008h0M548 1007h0M548 1008h0M549 1008h0M549 1007h0M550 1007h0M550 1008h0M551 1007h0M551 1008h0M552 1007h0M552 1008h0M553 1007h0M554 1007h0M554 1008h0M555 1008h0M555 1007h0M556 1008h0M556 1007h0M557 1007h0M558 1008h0M558 1007h0M559 1008h0M559 1007h0M560 1007h0M560 1008h0M561 1008h0M561 1007h0M562 1007h0M562 1008h0M563 1008h0M563 1007h0M564 1006h0M564 1007h0M565 1007h0M565 1008h0M566 1007h0M566 1008h0M567 1007h0M567 1005h0M567 1008h0M568 1007h0M568 1008h0M569 1007h0M569 1008h0M570 1007h0M570 1008h0M571 1007h0M571 1008h0M572 1008h0M572 1007h0M573 1008h0M573 1007h0M574 1007h0M574 1005h0M575 1008h0M575 1007h0M576 1007h0M576 1008h0M577 1007h0M577 1008h0M578 1007h0M578 1008h0M579 1008h0M579 1005h0M579 1007h0M580 1007h0M580 1008h0M581 1008h0M581 1007h0M582 1007h0M583 1007h0M584 1007h0M584 1008h0M585 1007h0M585 1008h0M586 1007h0M587 1008h0M587 1007h0M587 1005h0M588 1007h0M588 1004h0M588 1008h0M589 1007h0M589 1008h0M590 1007h0M590 1008h0M591 1007h0M591 1008h0M592 1008h0M592 1007h0M592 1006h0M592 1005h0M593 1007h0M593 1008h0M594 1007h0M594 1008h0M595 1007h0M595 1008h0M596 1007h0M596 1005h0M596 1008h0M597 1007h0M598 1007h0M598 1008h0M599 1008h0M599 1007h0M600 1007h0M600 1008h0M601 1007h0M601 1008h0M602 1007h0M602 1008h0M603 1007h0M603 1008h0M604 1004h0M604 1007h0M604 1008h0M605 1007h0M605 1008h0M606 1007h0M606 1008h0M607 1007h0M607 1008h0M608 1007h0M608 1005h0M608 1008h0M609 1007h0M610 1007h0M611 1007h0M611 1008h0M612 1007h0M613 1007h0M614 1007h0M614 1008h0M615 1007h0M615 1008h0M616 1007h0M616 1008h0M617 1007h0M617 1008h0M618 1008h0M618 1007h0M619 1007h0M619 1008h0M620 1007h0M621 1007h0M621 1008h0M622 1007h0M623 1008h0M623 1007h0M624 1007h0M624 1008h0M625 1007h0M625 1008h0M626 1008h0M626 1007h0M627 1007h0M627 1006h0M628 1007h0M628 1008h0M629 1007h0M629 1006h0M629 1008h0M630 1008h0M630 1007h0M631 1005h0M631 1007h0M632 1007h0M633 1008h0M633 1007h0M634 1007h0M634 1008h0M635 1007h0M636 1007h0M636 1008h0M637 1008h0M637 1007h0M638 1008h0M638 1007h0M639 1008h0M639 1007h0M640 1007h0M640 1008h0M641 1008h0M641 1007h0M642 1007h0M642 1006h0M643 1008h0M643 1007h0M644 1007h0M645 1007h0M645 1008h0M646 1007h0M646 1008h0M647 1007h0M647 1008h0M648 1007h0M648 1008h0M649 1007h0M649 1008h0M650 1007h0M651 1008h0M651 1007h0M652 1007h0M652 1008h0M653 1008h0M653 1007h0M653 1004h0M654 1008h0M654 1007h0M655 1008h0M655 1007h0M656 1007h0M656 1008h0M657 1008h0M657 1007h0M657 1005h0M658 1007h0M658 1008h0M659 1007h0M659 1008h0M660 1007h0M660 1008h0M660 1006h0M661 1007h0M661 1008h0M662 1007h0M663 1007h0M663 1008h0M664 1007h0M664 1006h0M665 1007h0M665 1008h0M666 1009h0M666 1007h0M667 1007h0M667 1008h0M668 1007h0M668 1008h0M669 1007h0M669 1008h0M670 1007h0M670 1008h0M671 1007h0M671 1008h0M672 1007h0M672 1008h0M673 1007h0M674 1007h0M674 1008h0M675 1007h0M675 1008h0M676 1007h0M676 1008h0M677 1008h0M677 1007h0M678 1007h0M678 1008h0M679 1007h0M679 1008h0M680 1008h0M680 1007h0M681 1007h0M681 1008h0M682 1007h0M682 1008h0M682 1006h0M683 1007h0M683 1008h0M683 1005h0M684 1007h0M684 1008h0M685 1008h0M686 1007h0M686 1008h0M687 1008h0M687 1007h0M688 1008h0M688 1007h0M689 1007h0M689 1008h0M690 1007h0M690 1008h0M691 1008h0M691 1007h0M692 1008h0M692 1007h0M693 1007h0M694 1008h0M694 1007h0M695 1008h0M695 1007h0M696 1007h0M696 1008h0M697 1007h0M697 1008h0M698 1007h0M699 1008h0M699 1007h0M700 1007h0M700 1008h0M701 1007h0M701 1008h0M702 1007h0M702 1008h0M702 1006h0M703 1008h0M703 1007h0M704 1007h0M704 1008h0M705 1008h0M705 1007h0M705 1003h0M706 1004h0M706 1003h0M706 1005h0M707 1005h0M707 1004h0M707 1006h0M708 1005h0M708 1006h0M708 1004h0M709 1005h0M709 1007h0M709 1008h0M710 1006h0M710 1004h0M710 1005h0M711 1005h0M711 1008h0M711 1004h0M711 1006h0M711 1007h0M712 1005h0M712 1007h0M712 1006h0M713 1006h0M713 1003h0M713 1005h0M714 1007h0M714 1006h0M714 1004h0M715 1006h0M715 1007h0M715 1004h0M716 1006h0M716 1005h0M716 1004h0M717 1004h0M717 1006h0M717 1007h0M718 1005h0M718 1006h0M718 1004h0M719 1004h0M719 1007h0M719 1005h0M720 1006h0M720 1007h0M720 1005h0M721 1007h0M721 1003h0M721 1005h0M721 1006h0M721 1004h0M722 1006h0M722 1004h0M722 1007h0M722 1005h0M723 1007h0M723 1006h0M723 1005h0M723 1004h0M724 1006h0M724 1005h0M724 1004h0M725 1004h0M725 1005h0M725 1008h0M725 1006h0M726 1007h0M726 1004h0M726 1005h0M726 1006h0M727 1005h0M727 1006h0M727 1004h0M728 1007h0M728 1006h0M729 1008h0M729 1006h0M729 1005h0M730 1006h0M730 1005h0M730 1004h0M730 1007h0M731 1005h0M731 1007h0M731 1003h0M732 1004h0M732 1007h0M732 1005h0M733 1008h0M733 1006h0M733 1005h0M733 1004h0M734 1007h0M734 1005h0M734 1006h0M735 1005h0M735 1008h0M735 1007h0M736 1007h0M736 1008h0M737 1007h0M738 1007h0M739 1007h0M739 1008h0M740 1007h0M740 1008h0M741 1007h0M741 1008h0M741 1005h0M742 1007h0M742 1008h0M743 1008h0M743 1007h0M744 1007h0M744 1008h0M745 1007h0M745 1008h0M746 1008h0M747 1007h0M747 1008h0M748 1008h0M748 1007h0M749 1008h0M749 1007h0M750 1007h0M750 1008h0M751 1004h0M751 1007h0M752 1007h0M752 1008h0M753 1008h0M753 1007h0M754 1007h0M754 1005h0M754 1008h0M755 1007h0M755 1008h0M756 1007h0M756 1008h0M757 1008h0M757 1007h0M758 1007h0M758 1008h0M759 1007h0M760 1008h0M760 1007h0M761 1008h0M761 1007h0M762 1007h0M762 1008h0M763 1007h0M763 1008h0M764 1008h0M764 1007h0M764 1006h0M765 1007h0M765 1008h0M766 1007h0M767 1007h0M767 1006h0M768 1007h0M768 1008h0M769 1007h0M769 1008h0M770 1008h0M770 1007h0M771 1008h0M771 1007h0M772 1008h0M772 1007h0M773 1008h0M773 1007h0M774 1007h0M774 1008h0M775 1007h0M776 1007h0M776 1008h0M777 1007h0M777 1008h0M778 1007h0M779 1007h0M780 1008h0M780 1007h0M781 1007h0M781 1008h0M782 1008h0M782 1007h0M783 1007h0M784 1007h0M784 1008h0M785 1007h0M785 1008h0M786 1007h0M786 1008h0M787 1007h0M787 1008h0M788 1007h0M789 1007h0M789 1008h0M789 1006h0M790 1008h0M790 1007h0M791 1008h0M791 1006h0M792 1008h0M792 1007h0M793 1007h0M793 1006h0M793 1008h0M794 1006h0M794 1008h0M794 1007h0M795 1008h0M795 1007h0M796 1007h0M796 1008h0M797 1007h0M797 1008h0M798 1007h0M798 1008h0M799 1007h0M799 1008h0M800 1007h0M800 1008h0M801 1007h0M801 1008h0M802 1007h0M803 1007h0M803 1008h0M804 1008h0M804 1007h0M805 1007h0M805 1008h0M806 1008h0M806 1007h0M807 1007h0M808 1008h0M808 1007h0M809 1008h0M809 1007h0M810 1007h0M810 1008h0M811 1008h0M811 1007h0M812 1008h0M812 1007h0M813 1007h0M814 1007h0M814 1008h0M815 1008h0M815 1007h0M815 1004h0M816 1007h0M816 1008h0M817 1007h0M817 1008h0M818 1008h0M818 1007h0M819 1008h0M819 1007h0M820 1007h0M820 1008h0M821 1008h0M821 1007h0M822 1007h0M822 1008h0M823 1008h0M823 1007h0M824 1008h0M824 1007h0M825 1007h0M825 1008h0M826 1008h0M826 1007h0M827 1007h0M827 1008h0M828 1007h0M829 1007h0M829 1008h0M830 1008h0M830 1007h0M831 1007h0M832 1008h0M832 1007h0M833 1007h0M834 1007h0M834 1008h0M835 1008h0M836 1007h0M837 1008h0M837 1007h0M838 1007h0M838 1008h0M839 1007h0M839 1008h0M840 1008h0M840 1007h0M841 1007h0M841 1008h0M842 1007h0M842 1008h0M843 1007h0M843 1006h0M844 1007h0M844 1008h0M845 1007h0M845 1008h0M846 1007h0M846 1008h0M847 1007h0M847 1008h0M847 1006h0M848 1007h0M848 1008h0M849 1008h0M849 1007h0M850 1007h0M850 1008h0M851 1007h0M851 1008h0M852 1007h0M853 1007h0M854 1008h0M854 1007h0M855 1008h0M855 1007h0M856 1008h0M856 1007h0M857 1007h0M857 1008h0M858 1007h0M858 1008h0M859 1007h0M859 1008h0M860 1007h0M860 1008h0M861 1008h0M861 1007h0M862 1007h0M862 1008h0M863 1008h0M863 1007h0M863 1004h0M864 1007h0M864 1008h0M865 1008h0M865 1007h0M866 1008h0M866 1007h0M867 1008h0M867 1007h0M868 1007h0M868 1008h0M869 1008h0M869 1007h0M870 1008h0M870 1007h0M871 1007h0M871 1008h0M872 1007h0M872 1008h0M873 1007h0M873 1008h0M874 1007h0M874 1008h0M875 1007h0M875 1008h0M876 1007h0M876 1008h0M877 1008h0M877 1007h0M878 1007h0M878 1008h0M879 1008h0M879 1007h0M880 1008h0M880 1007h0M881 1007h0M881 1008h0M882 1008h0M882 1007h0M883 1007h0M883 1008h0M884 1007h0M884 1008h0M885 1007h0M885 1008h0M886 1008h0M886 1007h0M887 1008h0M887 1007h0M888 1008h0M888 1007h0M889 1007h0M889 1008h0M890 1007h0M890 1008h0M890 1006h0M891 1007h0M891 1008h0M892 1007h0M892 1008h0M893 1007h0M893 1008h0M894 1008h0M894 1007h0M895 1007h0M896 1008h0M896 1007h0M897 1007h0M898 1007h0M898 1008h0M899 1007h0M899 1008h0M900 1007h0M900 1008h0M901 1007h0M901 1008h0M902 1007h0M902 1008h0M903 1008h0M903 1007h0M904 1008h0M904 1007h0M905 1007h0M906 1008h0M906 1007h0M907 1007h0M907 1008h0M908 1007h0M909 1007h0M909 1008h0M910 1007h0M910 1008h0M911 1008h0M911 1007h0M912 1006h0M912 1007h0M912 1008h0M913 1007h0M913 1008h0M914 1007h0M914 1008h0M915 1007h0M915 1008h0M916 1008h0M916 1007h0M917 1007h0M917 1008h0M918 1008h0M918 1007h0M919 1007h0M919 1008h0M920 1007h0M920 1008h0M921 1007h0M921 1008h0M922 1008h0M922 1007h0M923 1007h0M923 1008h0M924 1008h0M924 1007h0M925 1008h0M925 1007h0M926 1007h0M926 1008h0M927 1007h0M927 1008h0M928 1008h0M928 1007h0M929 1008h0M929 1007h0M930 1007h0M930 1008h0M931 1007h0M931 1008h0M932 1008h0M932 1007h0M933 1007h0M933 1008h0M934 1007h0M935 1008h0M935 1007h0M936 1008h0M936 1007h0M937 1007h0M938 1008h0M938 1007h0M939 1008h0M939 1007h0M940 1007h0M941 1007h0M941 1008h0M941 1006h0M942 1007h0M942 1008h0M943 1008h0M943 1007h0M944 1008h0M944 1007h0M945 1008h0M945 1007h0M946 1007h0M946 1008h0M947 1007h0M948 1008h0M948 1007h0M949 1007h0M949 1008h0M950 1007h0M950 1008h0M951 1007h0M951 1008h0M952 1007h0M952 1008h0M953 1008h0M953 1007h0M954 1007h0M954 1008h0M955 1007h0M955 1005h0M955 1008h0M956 1007h0M956 1008h0M957 1007h0M957 1008h0M958 1007h0M959 1007h0M959 1008h0M960 1007h0M961 1008h0M961 1007h0M962 1007h0M962 1008h0M963 1007h0M963 1008h0M964 1008h0M964 1007h0M965 1008h0M965 1007h0M966 1007h0M966 1008h0M967 1008h0M967 1007h0M967 1006h0M968 1008h0M968 1007h0M969 1007h0M969 1008h0M970 1008h0M970 1007h0M971 1007h0M971 1008h0M972 1008h0M972 1007h0M973 1007h0M973 1008h0M974 1008h0M974 1007h0M975 1007h0M975 1008h0M976 1007h0M976 1008h0M977 1008h0M977 1007h0M978 1007h0M978 1008h0M979 1007h0M979 1008h0M980 1008h0M980 1007h0M981 1007h0M981 1008h0M982 1008h0M982 1007h0M983 1008h0M983 1007h0M984 1007h0M984 1008h0M985 1008h0M985 1007h0M986 1008h0M986 1007h0M987 1007h0M987 1008h0M988 1007h0M988 1008h0M989 1008h0M989 1007h0M990 1008h0M990 1007h0M991 1008h0M991 1007h0M992 1008h0M992 1007h0M992 1006h0M993 1007h0M993 1008h0M994 1007h0M995 1008h0M995 1007h0M996 1007h0M996 1008h0M997 1007h0M998 1007h0M998 1008h0M999 1008h0M999 1007h0M1000 1007h0M1000 1008h0M1001 1007h0M1001 1008h0M1002 1007h0M1002 1008h0M1003 1007h0M1003 1006h0M1003 1008h0M1004 1007h0M1004 1008h0M1005 1007h0M1006 1007h0M1006 1008h0M1007 1007h0M1007 1008h0M1008 1007h0M1008 1008h0M1009 1007h0M1009 1008h0M1010 1007h0M1010 1005h0M1011 1007h0M1011 1008h0M1012 1007h0M1012 1008h0M1013 1007h0M1013 1008h0M1014 1008h0M1014 1007h0M1015 1007h0M1015 1008h0M1016 1007h0M1016 1008h0M1017 1008h0M1017 1007h0M1018 1007h0M1018 1008h0M1019 1008h0M1019 1007h0M1020 1007h0M1020 1008h0M1021 1007h0M1021 1008h0M1022 1008h0M1022 1007h0M1023 1007h0M1023 1008h0M1024 1007h0M1024 1008h0M1025 1007h0M1025 1008h0M1026 1007h0M1026 1008h0M1027 1007h0M1027 1008h0M1028 1008h0M1028 1007h0M1029 1007h0M1029 1008h0M1030 1007h0M1030 1006h0M1030 1008h0M1031 1007h0M1031 1008h0M1032 1007h0M1032 1008h0M1033 1008h0M1033 1007h0M1034 1007h0M1034 1008h0M1035 1007h0M1035 1008h0M1036 1007h0M1036 1008h0M1037 1007h0M1037 1008h0M1038 1007h0M1039 1007h0M1039 1008h0M1040 1007h0M1041 1007h0M1042 1007h0M1042 1008h0M1043 1008h0M1043 1007h0M1044 1008h0M1044 1007h0M1045 1007h0M1045 1008h0M1046 1007h0M1046 1008h0M1047 1007h0M1047 1008h0M1048 1008h0M1048 1007h0M1049 1008h0M1049 1007h0M1050 1008h0M1050 1007h0M1051 1008h0M1051 1007h0M1052 1007h0M1052 1008h0M1053 1007h0M1053 1008h0M1054 1007h0M1054 1008h0M1055 1007h0M1055 1008h0M1056 1007h0M1056 1008h0M1057 1007h0M1057 1008h0M1058 1007h0M1059 1007h0M1059 1008h0M1060 1007h0M1060 1006h0M1061 1006h0M1061 1007h0M1062 1007h0M1063 1008h0M1063 1005h0M1063 1007h0M1064 1007h0M1064 1008h0M1064 1006h0M1065 1008h0M1065 1007h0M1066 1007h0M1066 1008h0M1066 1006h0M1067 1007h0M1067 1008h0M1068 1007h0M1069 1007h0M1069 1008h0M1070 1007h0M1070 1008h0M1071 1007h0M1072 1007h0M1072 1008h0M1073 1008h0M1073 1007h0M1074 1007h0M1075 1008h0M1075 1007h0M1076 1007h0M1076 1008h0M1077 1007h0M1077 1008h0M1078 1007h0M1078 1008h0M1079 1007h0M1080 1005h0M1080 1007h0M1080 1008h0M1081 1007h0M1081 1008h0M1082 1007h0M1082 1008h0M1083 1007h0M1083 1008h0M1084 1008h0M1084 1007h0M1085 1007h0M1085 1006h0M1085 1008h0M1086 1008h0M1086 1007h0M1087 1007h0M1087 1008h0M1088 1008h0M1088 1007h0M1089 1007h0M1089 1008h0M1090 1007h0M1090 1008h0M1091 1008h0M1091 1007h0M1092 1007h0M1092 1008h0M1093 1007h0M1094 1007h0M1094 1006h0M1095 1007h0M1095 1006h0M1096 1007h0M1096 1008h0M1097 1007h0M1097 1008h0M1098 1007h0M1098 1008h0M1099 1008h0M1099 1004h0M1099 1007h0M1100 1007h0M1101 1007h0M1101 1008h0M1102 1007h0M1103 1008h0M1103 1007h0M1103 1006h0M1104 1008h0M1104 1007h0M1105 1007h0M1105 1008h0M1106 1007h0M1106 1008h0M1107 1008h0M1107 1007h0M1108 1007h0M1108 1008h0M1109 1007h0M1109 1008h0M1110 1008h0M1110 1007h0M1111 1007h0M1111 1008h0M1112 1007h0M1112 1008h0M1113 1007h0M1113 1008h0M1114 1007h0M1114 1008h0M1115 1007h0M1115 1008h0M1116 1008h0M1116 1007h0M1117 1008h0M1117 1007h0M1118 1007h0M1118 1008h0M1119 1008h0M1119 1007h0M1119 1005h0M1120 1008h0M1120 1007h0M1121 1008h0M1121 1007h0M1122 1007h0M1122 1008h0M1123 1007h0M1123 1008h0M1124 1007h0M1124 1008h0M1125 1007h0M1125 1008h0M1126 1007h0M1127 1007h0M1127 1008h0M1128 1007h0M1128 1008h0M1129 1007h0M1129 1008h0M1130 1008h0M1130 1007h0M1130 1006h0M1131 1007h0M1131 1008h0M1132 1007h0M1132 1008h0M1133 1007h0M1133 1008h0M1134 1008h0M1134 1007h0M1135 1007h0M1135 1008h0M1136 1007h0M1136 1008h0M1137 1008h0M1137 1007h0M1137 1006h0M1138 1007h0M1139 1007h0M1139 1006h0M1140 1008h0M1140 1007h0M1141 1008h0M1141 1007h0M1142 1008h0M1142 1007h0M1143 1008h0M1143 1007h0M1143 1009h0M1144 1007h0M1144 1008h0M1145 1007h0M1146 1007h0M1146 1008h0M1147 1007h0M1147 1008h0M1148 1007h0M1148 1008h0M1149 1007h0M1149 1008h0M1150 1007h0M1150 1008h0M1151 1007h0M1151 1008h0M1152 1008h0M1152 1007h0M1153 1007h0M1153 1008h0M1154 1007h0M1154 1006h0M1154 1008h0M1155 1007h0M1155 1008h0M1155 1006h0M1156 1007h0M1156 1008h0M1157 1007h0M1157 1008h0M1157 1006h0M1158 1008h0M1158 1007h0M1158 1005h0M1159 1007h0M1159 1008h0M1160 1008h0M1160 1007h0M1161 1008h0M1161 1007h0M1162 1008h0M1162 1007h0M1163 1007h0M1164 1007h0M1164 1008h0M1165 1007h0M1165 1008h0M1166 1007h0M1166 1008h0M1167 1007h0M1168 1007h0M1168 1008h0M1169 1007h0M1170 1007h0M1170 1008h0M1171 1007h0M1171 1008h0M1172 1007h0M1172 1006h0M1172 1008h0M1173 1007h0M1173 1008h0M1174 1007h0M1175 1007h0M1175 1008h0M1176 1008h0M1176 1007h0M1177 1007h0M1177 1008h0M1178 1007h0M1178 1008h0M1178 1005h0M1179 1007h0M1179 1008h0M1180 1007h0M1181 1007h0M1181 1008h0M1182 1008h0M1182 1007h0M1183 1008h0M1183 1007h0M1184 1008h0M1184 1007h0M1185 1007h0M1185 1008h0M1186 1008h0M1186 1007h0M1187 1008h0M1187 1007h0M1188 1007h0M1188 1008h0M1189 1008h0M1189 1007h0M1190 1008h0M1190 1007h0M1191 1007h0M1191 1008h0M1192 1007h0M1192 1008h0M1193 1008h0M1193 1007h0M1194 1007h0M1194 1008h0M1195 1007h0M1196 1007h0M1196 1008h0M1197 1007h0M1197 1008h0M1198 1007h0M1199 1008h0M1199 1007h0M1200 1008h0M1200 1007h0M1201 1007h0M1201 1008h0M1202 1007h0M1202 1008h0M1203 1008h0M1203 1007h0M1204 1007h0M1204 1008h0M1205 1008h0M1205 1007h0M1206 1007h0M1206 1008h0M1207 1008h0M1207 1007h0M1208 1008h0M1208 1007h0M1209 1008h0M1209 1006h0M1209 1007h0M1210 1007h0M1210 1008h0M1211 1007h0M1211 1008h0M1212 1007h0M1212 1008h0M1213 1007h0M1213 1008h0M1214 1007h0M1214 1008h0M1215 1008h0M1215 1007h0M1216 1007h0M1216 1008h0M1217 1007h0M1217 1008h0M1218 1007h0M1218 1006h0M1219 1008h0M1219 1007h0M1220 1008h0M1220 1007h0M1221 1007h0M1221 1006h0M1221 1008h0M1222 1007h0M1222 1008h0M1223 1007h0M1223 1008h0M1224 1008h0M1224 1007h0M1225 1007h0M1225 1008h0M1226 1007h0M1226 1008h0M1227 1008h0M1227 1007h0M1228 1007h0M1229 1007h0M1229 1008h0M1230 1008h0M1230 1007h0M1231 1007h0M1231 1008h0M1232 1007h0M1232 1008h0M1233 1008h0M1233 1007h0M1234 1007h0M1234 1008h0M1235 1008h0M1235 1007h0M1236 1007h0M1236 1008h0M1236 1006h0M1237 1007h0M1237 1008h0M1238 1008h0M1238 1007h0M1239 1008h0M1240 1007h0M1241 1008h0M1241 1007h0M1242 1007h0M1242 1008h0M1243 1008h0M1243 1006h0M1243 1007h0M1244 1007h0M1244 1008h0M1245 1008h0M1245 1007h0M1246 1007h0M1246 1006h0M1246 1008h0M1247 1007h0M1248 1006h0M1248 1007h0M1248 1008h0M1249 1008h0M1249 1007h0M1250 1007h0M1251 1008h0M1251 1007h0M1252 1007h0M1252 1008h0M1253 1007h0M1253 1008h0M1254 1007h0M1254 1008h0M1255 1007h0M1255 1008h0M1256 1007h0M1257 1007h0M1257 1006h0M1257 1008h0M1258 1008h0M1258 1007h0M1259 1008h0M1259 1007h0M1260 1008h0M1260 1007h0M1261 1007h0M1261 1008h0M1261 1006h0M1262 1008h0M1262 1007h0M1263 1008h0M1263 1007h0M1264 1007h0M1264 1008h0M1265 1008h0M1265 1007h0M1266 1007h0M1267 1008h0M1267 1007h0M1268 1008h0M1268 1007h0M1269 1008h0M1269 1007h0M1270 1007h0M1270 1008h0M1271 1007h0M1271 1008h0M1272 1007h0M1272 1008h0M1273 1007h0M1273 1008h0M1274 1008h0M1274 1007h0M1275 1007h0M1275 1008h0M1276 1007h0M1276 1008h0M1277 1008h0M1277 1007h0M1277 1004h0M1278 1008h0M1278 1006h0M1278 1007h0M1279 1007h0M1279 1006h0M1280 1008h0M1280 1007h0M1281 1007h0M1282 1007h0M1282 1008h0M1283 1008h0M1283 1007h0M1284 1008h0M1284 1007h0M1285 1008h0M1285 1007h0M1286 1008h0M1286 1007h0M1287 1007h0M1287 1008h0M1288 1008h0M1288 1007h0M1289 1007h0M1289 1008h0M1290 1007h0M1290 1008h0M1290 1004h0M1291 1008h0M1291 1007h0M1292 1007h0M1292 1008h0M1293 1008h0M1293 1007h0M1294 1008h0M1294 1007h0M1295 1008h0M1295 1009h0M1295 1007h0M1296 1008h0M1296 1007h0M1297 1008h0M1297 1007h0M1298 1007h0M1298 1006h0M1298 1008h0M1299 1007h0M1299 1008h0M1300 1007h0M1300 1008h0M1301 1007h0M1301 1008h0M1302 1007h0M1302 1008h0M1303 1008h0M1303 1007h0" fill="none" stroke="#000" stroke-width="2.60" stroke-linecap="round"/></g>
<path transform="translate(.5 .5)" d="M1250 957h0" fill="none" stroke="#f00" stroke-width="2.90" stroke-linecap="round"/>
<rect x="105.5" y="725.5" width="1380.0" height="229.0" fill="none" stroke="#000" stroke-width="1.11"/><rect x="105.5" y="954.5" width="1380.0" height="57.0" fill="none" stroke="#000" stroke-width="1.11"/><path d="M162.5 1011.5v4.86M345.5 1011.5v4.86M528.5 1011.5v4.86M710.5 1011.5v4.86M893.5 1011.5v4.86M1076.5 1011.5v4.86M1259.5 1011.5v4.86M1441.5 1011.5v4.86" stroke="#000" stroke-width="1.11" fill="none"/><text x="162.12" y="1031.88" text-anchor="middle">0</text><text x="344.87" y="1031.88" text-anchor="middle">1000</text><text x="527.62" y="1031.88" text-anchor="middle">2000</text><text x="710.37" y="1031.88" text-anchor="middle">3000</text><text x="893.12" y="1031.88" text-anchor="middle">4000</text><text x="1075.87" y="1031.88" text-anchor="middle">5000</text><text x="1258.62" y="1031.88" text-anchor="middle">6000</text><text x="1441.37" y="1031.88" text-anchor="middle">7000</text><path d="M105.5 921.5h-4.86M105.5 889.5h-4.86M105.5 856.5h-4.86M105.5 823.5h-4.86M105.5 791.5h-4.86M105.5 758.5h-4.86M105.5 1009.5h-4.86M105.5 983.5h-4.86M105.5 957.5h-4.86" stroke="#000" stroke-width="1.11" fill="none"/><path d="M105.5 996.5h-2.78M105.5 970.5h-2.78" stroke="#000" stroke-width="0.83" fill="none"/><text x="95.4" y="926.45" text-anchor="end">OBS not OK</text><text x="95.4" y="893.85" text-anchor="end">dr &gt; 5</text><text x="95.4" y="861.25" text-anchor="end">Ion. rad.</text><text x="95.4" y="828.65" text-anchor="end">Sat. pixel.</text><text x="95.4" y="796.05" text-anchor="end">not track</text><text x="95.4" y="763.45" text-anchor="end">not Kalman</text><text x="95.4" y="1014.45" text-anchor="end">0</text><text x="95.4" y="988.50" text-anchor="end">5</text><text x="95.4" y="962.54" text-anchor="end">10</text><text transform="translate(69.1 984.3) rotate(-90)" text-anchor="middle">dr</text>
</g>
</svg>
</body></html>
